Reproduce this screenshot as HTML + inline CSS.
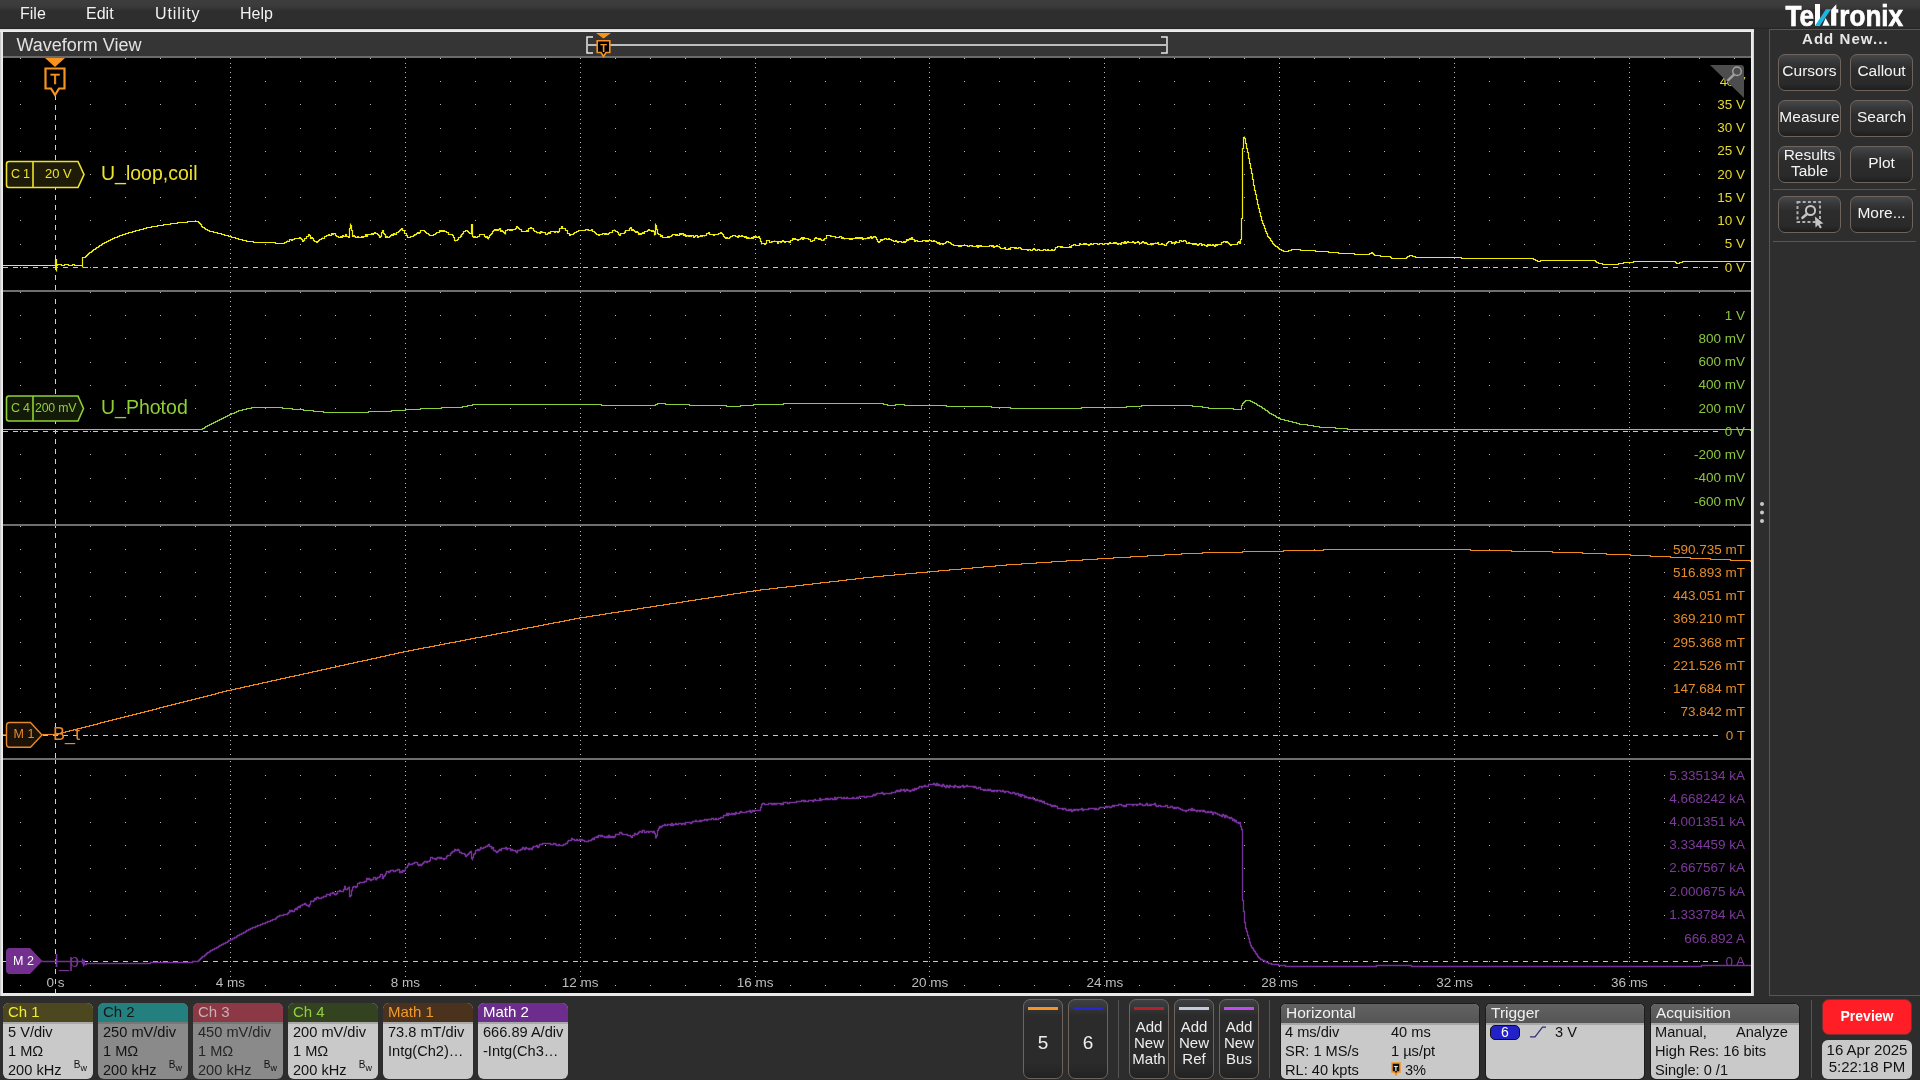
<!DOCTYPE html>
<html><head><meta charset="utf-8"><title>Waveform View</title>
<style>
*{margin:0;padding:0;box-sizing:border-box}
html,body{width:1920px;height:1080px;overflow:hidden;background:#2d2d2d;font-family:"Liberation Sans", sans-serif;-webkit-font-smoothing:antialiased;}
.abs{position:absolute}
#menu{position:absolute;left:0;top:0;width:1920px;height:29px;background:linear-gradient(#3d3d3d 0%,#3b3b3b 22%,#2e2e2e 38%,#2e2e2e 93%,#232323 100%);}
#menu span{position:absolute;top:5px;color:#f2f2f2;font-size:16px;}
#logo{position:absolute;left:1786px;top:0px;color:#fff;font-weight:bold;font-size:27px;letter-spacing:-1.2px;}
#frame{position:absolute;left:0;top:29px;width:1754px;height:967px;background:linear-gradient(90deg,#b4b4b4 0px,#dedede 1px,#f0f0f0 2px,#e8e8e8 3px,#e8e8e8 1751px,#f2f2f2 1752px,#c8c8c8 1754px);}
#frametop{position:absolute;left:0;top:29px;width:1754px;height:3px;background:linear-gradient(#d6d6d6,#f4f4f4);}
#hdr{position:absolute;left:3px;top:32px;width:1748px;height:24px;background:#353535;}
#hdrline{position:absolute;left:3px;top:56px;width:1748px;height:2px;background:#6b6b6b;}
#plot{position:absolute;left:3px;top:58px;width:1748px;height:935px;background:#000;}
#wvtitle{position:absolute;left:16.5px;top:34.5px;color:#e2e2e2;font-size:18px;}
svg{position:absolute;left:0;top:0;}
.al{position:absolute;right:173px;font-size:13.5px;line-height:16px;text-align:right;white-space:nowrap;background:#000;padding:0 2px 0 2px}
.tl{position:absolute;top:975px;width:80px;text-align:center;font-size:13.5px;line-height:16px;color:#bdbdbd}
#rpanel{position:absolute;left:1769px;top:29px;width:160px;height:967px;border:1px solid #5c5650;background:#2e2e2e}
.btn{position:absolute;width:63px;height:37px;border:1px solid #6e645c;border-radius:7px;background:linear-gradient(#46474a 0%,#38393b 18%,#2c2c2c 40%,#2a2a2a 82%,#1e1e1e 100%);color:#f4f4f4;font-size:15.5px;text-align:center;display:flex;align-items:center;justify-content:center;line-height:16px;padding-bottom:3px}
.sep{position:absolute;height:1px;background:#5c5650}
.chb{position:absolute;top:1003px;width:90px;height:76px;border-radius:6px;overflow:hidden;background:#c9c9c9}
.chb .h{height:19px;font-size:15px;padding-left:5px;line-height:17px}
.chb .hl{height:2px;background:#a9a9a9}
.chb .b{font-size:14.6px;line-height:19px;padding-left:5px;color:#111;white-space:nowrap;position:relative;top:-1px}
.bw{position:absolute;right:6px;bottom:6px;font-size:10px;color:#111;line-height:10px}
.sbtn{position:absolute;top:999px;width:40px;height:80px;border:1px solid #6e645c;border-radius:7px;background:linear-gradient(#3f4043 0%,#2b2b2b 20%,#2b2b2b 80%,#222 100%);color:#eee;text-align:center}
.sbtn .bar{position:absolute;left:4px;right:4px;top:7px;height:2.5px}
.vsep{position:absolute;top:1000px;width:1px;height:78px;background:#555}
.ib{position:absolute;top:1004px;height:75px;border-radius:5px;overflow:hidden;background:#c9c9c9;box-shadow:0 0 0 1px #1c1c1c}
.ib .h{height:19px;background:linear-gradient(#626262,#555);color:#f0f0f0;font-size:15.5px;line-height:18px;padding-left:5px}
.ib .hl{height:2px;background:#a8a8a8}
.ib .r{position:absolute;font-size:14.6px;color:#111;white-space:nowrap;line-height:18px}
</style></head><body><div style="position:absolute;left:0;top:0;width:1920px;height:1080px;will-change:transform;background:#2d2d2d">
<div id="menu">
<span style="left:20px">File</span><span style="left:86px">Edit</span><span style="left:155px;letter-spacing:0.9px">Utility</span><span style="left:240px">Help</span>
</div>
<svg style="left:0;top:0" width="1920" height="30" viewBox="0 0 1920 30"><text x="1785.5" y="25.7" font-family="Liberation Sans" font-weight="bold" font-size="30" fill="#fff" stroke="#fff" stroke-width="0.7" textLength="28.5" lengthAdjust="spacingAndGlyphs">Te</text><path d="M1815 4H1820V25.7H1815Z" fill="#fff"/><path d="M1822.4 25.7H1829.8L1825.6 18Z" fill="#fff"/><path d="M1815 25.7H1819.9L1831 9.2H1825.9Z" fill="#1ab8e0"/><path d="M1831.1 10L1836.3 4.3V9.2H1838.3V12.8H1836.3V25.7H1831.1Z" fill="#fff"/><text x="1839.3" y="25.7" font-family="Liberation Sans" font-weight="bold" font-size="30" fill="#fff" stroke="#fff" stroke-width="0.7" textLength="63.8" lengthAdjust="spacingAndGlyphs">ronix</text></svg>
<div id="frame"></div><div id="frametop"></div>
<div id="hdr"></div><div id="hdrline"></div>
<div id="plot"></div>
<div id="wvtitle">Waveform View</div>

<svg width="1920" height="1080" viewBox="0 0 1920 1080">
 <!-- header overview bar -->
 <path d="M593 37H587V53H593" fill="none" stroke="#e8e8e8" stroke-width="1.5"/>
 <path d="M1161 37H1167V53H1161" fill="none" stroke="#e8e8e8" stroke-width="1.5"/>
 <rect x="587" y="44" width="580" height="2" fill="#bdbdbd"/>
 <path d="M596 33H611L603.5 38.5Z" fill="#f7931e"/>
 <path d="M597.2 40.7H609.8V52.5H606L603.5 56.5L601 52.5H597.2Z" fill="#000" stroke="#f7931e" stroke-width="1.6"/>
 <text x="603.5" y="51.5" font-size="11" font-weight="bold" fill="#f7931e" text-anchor="middle" font-family="Liberation Sans">T</text>
 <!-- grid -->
 <path d="M20 58h1v1h-1zM90 58h1v1h-1zM125 58h1v1h-1zM160 58h1v1h-1zM195 58h1v1h-1zM265 58h1v1h-1zM300 58h1v1h-1zM335 58h1v1h-1zM370 58h1v1h-1zM440 58h1v1h-1zM475 58h1v1h-1zM510 58h1v1h-1zM545 58h1v1h-1zM615 58h1v1h-1zM650 58h1v1h-1zM685 58h1v1h-1zM720 58h1v1h-1zM790 58h1v1h-1zM825 58h1v1h-1zM860 58h1v1h-1zM894 58h1v1h-1zM964 58h1v1h-1zM999 58h1v1h-1zM1034 58h1v1h-1zM1069 58h1v1h-1zM1139 58h1v1h-1zM1174 58h1v1h-1zM1209 58h1v1h-1zM1244 58h1v1h-1zM1314 58h1v1h-1zM1349 58h1v1h-1zM1384 58h1v1h-1zM1419 58h1v1h-1zM1489 58h1v1h-1zM1524 58h1v1h-1zM1559 58h1v1h-1zM1594 58h1v1h-1zM1664 58h1v1h-1zM1699 58h1v1h-1zM1734 58h1v1h-1zM20 81h1v1h-1zM90 81h1v1h-1zM125 81h1v1h-1zM160 81h1v1h-1zM195 81h1v1h-1zM265 81h1v1h-1zM300 81h1v1h-1zM335 81h1v1h-1zM370 81h1v1h-1zM440 81h1v1h-1zM475 81h1v1h-1zM510 81h1v1h-1zM545 81h1v1h-1zM615 81h1v1h-1zM650 81h1v1h-1zM685 81h1v1h-1zM720 81h1v1h-1zM790 81h1v1h-1zM825 81h1v1h-1zM860 81h1v1h-1zM894 81h1v1h-1zM964 81h1v1h-1zM999 81h1v1h-1zM1034 81h1v1h-1zM1069 81h1v1h-1zM1139 81h1v1h-1zM1174 81h1v1h-1zM1209 81h1v1h-1zM1244 81h1v1h-1zM1314 81h1v1h-1zM1349 81h1v1h-1zM1384 81h1v1h-1zM1419 81h1v1h-1zM1489 81h1v1h-1zM1524 81h1v1h-1zM1559 81h1v1h-1zM1594 81h1v1h-1zM1664 81h1v1h-1zM1699 81h1v1h-1zM1734 81h1v1h-1zM20 104h1v1h-1zM90 104h1v1h-1zM125 104h1v1h-1zM160 104h1v1h-1zM195 104h1v1h-1zM265 104h1v1h-1zM300 104h1v1h-1zM335 104h1v1h-1zM370 104h1v1h-1zM440 104h1v1h-1zM475 104h1v1h-1zM510 104h1v1h-1zM545 104h1v1h-1zM615 104h1v1h-1zM650 104h1v1h-1zM685 104h1v1h-1zM720 104h1v1h-1zM790 104h1v1h-1zM825 104h1v1h-1zM860 104h1v1h-1zM894 104h1v1h-1zM964 104h1v1h-1zM999 104h1v1h-1zM1034 104h1v1h-1zM1069 104h1v1h-1zM1139 104h1v1h-1zM1174 104h1v1h-1zM1209 104h1v1h-1zM1244 104h1v1h-1zM1314 104h1v1h-1zM1349 104h1v1h-1zM1384 104h1v1h-1zM1419 104h1v1h-1zM1489 104h1v1h-1zM1524 104h1v1h-1zM1559 104h1v1h-1zM1594 104h1v1h-1zM1664 104h1v1h-1zM1699 104h1v1h-1zM1734 104h1v1h-1zM20 128h1v1h-1zM90 128h1v1h-1zM125 128h1v1h-1zM160 128h1v1h-1zM195 128h1v1h-1zM265 128h1v1h-1zM300 128h1v1h-1zM335 128h1v1h-1zM370 128h1v1h-1zM440 128h1v1h-1zM475 128h1v1h-1zM510 128h1v1h-1zM545 128h1v1h-1zM615 128h1v1h-1zM650 128h1v1h-1zM685 128h1v1h-1zM720 128h1v1h-1zM790 128h1v1h-1zM825 128h1v1h-1zM860 128h1v1h-1zM894 128h1v1h-1zM964 128h1v1h-1zM999 128h1v1h-1zM1034 128h1v1h-1zM1069 128h1v1h-1zM1139 128h1v1h-1zM1174 128h1v1h-1zM1209 128h1v1h-1zM1244 128h1v1h-1zM1314 128h1v1h-1zM1349 128h1v1h-1zM1384 128h1v1h-1zM1419 128h1v1h-1zM1489 128h1v1h-1zM1524 128h1v1h-1zM1559 128h1v1h-1zM1594 128h1v1h-1zM1664 128h1v1h-1zM1699 128h1v1h-1zM1734 128h1v1h-1zM20 151h1v1h-1zM90 151h1v1h-1zM125 151h1v1h-1zM160 151h1v1h-1zM195 151h1v1h-1zM265 151h1v1h-1zM300 151h1v1h-1zM335 151h1v1h-1zM370 151h1v1h-1zM440 151h1v1h-1zM475 151h1v1h-1zM510 151h1v1h-1zM545 151h1v1h-1zM615 151h1v1h-1zM650 151h1v1h-1zM685 151h1v1h-1zM720 151h1v1h-1zM790 151h1v1h-1zM825 151h1v1h-1zM860 151h1v1h-1zM894 151h1v1h-1zM964 151h1v1h-1zM999 151h1v1h-1zM1034 151h1v1h-1zM1069 151h1v1h-1zM1139 151h1v1h-1zM1174 151h1v1h-1zM1209 151h1v1h-1zM1244 151h1v1h-1zM1314 151h1v1h-1zM1349 151h1v1h-1zM1384 151h1v1h-1zM1419 151h1v1h-1zM1489 151h1v1h-1zM1524 151h1v1h-1zM1559 151h1v1h-1zM1594 151h1v1h-1zM1664 151h1v1h-1zM1699 151h1v1h-1zM1734 151h1v1h-1zM20 174h1v1h-1zM90 174h1v1h-1zM125 174h1v1h-1zM160 174h1v1h-1zM195 174h1v1h-1zM265 174h1v1h-1zM300 174h1v1h-1zM335 174h1v1h-1zM370 174h1v1h-1zM440 174h1v1h-1zM475 174h1v1h-1zM510 174h1v1h-1zM545 174h1v1h-1zM615 174h1v1h-1zM650 174h1v1h-1zM685 174h1v1h-1zM720 174h1v1h-1zM790 174h1v1h-1zM825 174h1v1h-1zM860 174h1v1h-1zM894 174h1v1h-1zM964 174h1v1h-1zM999 174h1v1h-1zM1034 174h1v1h-1zM1069 174h1v1h-1zM1139 174h1v1h-1zM1174 174h1v1h-1zM1209 174h1v1h-1zM1244 174h1v1h-1zM1314 174h1v1h-1zM1349 174h1v1h-1zM1384 174h1v1h-1zM1419 174h1v1h-1zM1489 174h1v1h-1zM1524 174h1v1h-1zM1559 174h1v1h-1zM1594 174h1v1h-1zM1664 174h1v1h-1zM1699 174h1v1h-1zM1734 174h1v1h-1zM20 197h1v1h-1zM90 197h1v1h-1zM125 197h1v1h-1zM160 197h1v1h-1zM195 197h1v1h-1zM265 197h1v1h-1zM300 197h1v1h-1zM335 197h1v1h-1zM370 197h1v1h-1zM440 197h1v1h-1zM475 197h1v1h-1zM510 197h1v1h-1zM545 197h1v1h-1zM615 197h1v1h-1zM650 197h1v1h-1zM685 197h1v1h-1zM720 197h1v1h-1zM790 197h1v1h-1zM825 197h1v1h-1zM860 197h1v1h-1zM894 197h1v1h-1zM964 197h1v1h-1zM999 197h1v1h-1zM1034 197h1v1h-1zM1069 197h1v1h-1zM1139 197h1v1h-1zM1174 197h1v1h-1zM1209 197h1v1h-1zM1244 197h1v1h-1zM1314 197h1v1h-1zM1349 197h1v1h-1zM1384 197h1v1h-1zM1419 197h1v1h-1zM1489 197h1v1h-1zM1524 197h1v1h-1zM1559 197h1v1h-1zM1594 197h1v1h-1zM1664 197h1v1h-1zM1699 197h1v1h-1zM1734 197h1v1h-1zM20 220h1v1h-1zM90 220h1v1h-1zM125 220h1v1h-1zM160 220h1v1h-1zM195 220h1v1h-1zM265 220h1v1h-1zM300 220h1v1h-1zM335 220h1v1h-1zM370 220h1v1h-1zM440 220h1v1h-1zM475 220h1v1h-1zM510 220h1v1h-1zM545 220h1v1h-1zM615 220h1v1h-1zM650 220h1v1h-1zM685 220h1v1h-1zM720 220h1v1h-1zM790 220h1v1h-1zM825 220h1v1h-1zM860 220h1v1h-1zM894 220h1v1h-1zM964 220h1v1h-1zM999 220h1v1h-1zM1034 220h1v1h-1zM1069 220h1v1h-1zM1139 220h1v1h-1zM1174 220h1v1h-1zM1209 220h1v1h-1zM1244 220h1v1h-1zM1314 220h1v1h-1zM1349 220h1v1h-1zM1384 220h1v1h-1zM1419 220h1v1h-1zM1489 220h1v1h-1zM1524 220h1v1h-1zM1559 220h1v1h-1zM1594 220h1v1h-1zM1664 220h1v1h-1zM1699 220h1v1h-1zM1734 220h1v1h-1zM20 244h1v1h-1zM90 244h1v1h-1zM125 244h1v1h-1zM160 244h1v1h-1zM195 244h1v1h-1zM265 244h1v1h-1zM300 244h1v1h-1zM335 244h1v1h-1zM370 244h1v1h-1zM440 244h1v1h-1zM475 244h1v1h-1zM510 244h1v1h-1zM545 244h1v1h-1zM615 244h1v1h-1zM650 244h1v1h-1zM685 244h1v1h-1zM720 244h1v1h-1zM790 244h1v1h-1zM825 244h1v1h-1zM860 244h1v1h-1zM894 244h1v1h-1zM964 244h1v1h-1zM999 244h1v1h-1zM1034 244h1v1h-1zM1069 244h1v1h-1zM1139 244h1v1h-1zM1174 244h1v1h-1zM1209 244h1v1h-1zM1244 244h1v1h-1zM1314 244h1v1h-1zM1349 244h1v1h-1zM1384 244h1v1h-1zM1419 244h1v1h-1zM1489 244h1v1h-1zM1524 244h1v1h-1zM1559 244h1v1h-1zM1594 244h1v1h-1zM1664 244h1v1h-1zM1699 244h1v1h-1zM1734 244h1v1h-1zM20 267h1v1h-1zM90 267h1v1h-1zM125 267h1v1h-1zM160 267h1v1h-1zM195 267h1v1h-1zM265 267h1v1h-1zM300 267h1v1h-1zM335 267h1v1h-1zM370 267h1v1h-1zM440 267h1v1h-1zM475 267h1v1h-1zM510 267h1v1h-1zM545 267h1v1h-1zM615 267h1v1h-1zM650 267h1v1h-1zM685 267h1v1h-1zM720 267h1v1h-1zM790 267h1v1h-1zM825 267h1v1h-1zM860 267h1v1h-1zM894 267h1v1h-1zM964 267h1v1h-1zM999 267h1v1h-1zM1034 267h1v1h-1zM1069 267h1v1h-1zM1139 267h1v1h-1zM1174 267h1v1h-1zM1209 267h1v1h-1zM1244 267h1v1h-1zM1314 267h1v1h-1zM1349 267h1v1h-1zM1384 267h1v1h-1zM1419 267h1v1h-1zM1489 267h1v1h-1zM1524 267h1v1h-1zM1559 267h1v1h-1zM1594 267h1v1h-1zM1664 267h1v1h-1zM1699 267h1v1h-1zM1734 267h1v1h-1zM20 292h1v1h-1zM90 292h1v1h-1zM125 292h1v1h-1zM160 292h1v1h-1zM195 292h1v1h-1zM265 292h1v1h-1zM300 292h1v1h-1zM335 292h1v1h-1zM370 292h1v1h-1zM440 292h1v1h-1zM475 292h1v1h-1zM510 292h1v1h-1zM545 292h1v1h-1zM615 292h1v1h-1zM650 292h1v1h-1zM685 292h1v1h-1zM720 292h1v1h-1zM790 292h1v1h-1zM825 292h1v1h-1zM860 292h1v1h-1zM894 292h1v1h-1zM964 292h1v1h-1zM999 292h1v1h-1zM1034 292h1v1h-1zM1069 292h1v1h-1zM1139 292h1v1h-1zM1174 292h1v1h-1zM1209 292h1v1h-1zM1244 292h1v1h-1zM1314 292h1v1h-1zM1349 292h1v1h-1zM1384 292h1v1h-1zM1419 292h1v1h-1zM1489 292h1v1h-1zM1524 292h1v1h-1zM1559 292h1v1h-1zM1594 292h1v1h-1zM1664 292h1v1h-1zM1699 292h1v1h-1zM1734 292h1v1h-1zM20 315h1v1h-1zM90 315h1v1h-1zM125 315h1v1h-1zM160 315h1v1h-1zM195 315h1v1h-1zM265 315h1v1h-1zM300 315h1v1h-1zM335 315h1v1h-1zM370 315h1v1h-1zM440 315h1v1h-1zM475 315h1v1h-1zM510 315h1v1h-1zM545 315h1v1h-1zM615 315h1v1h-1zM650 315h1v1h-1zM685 315h1v1h-1zM720 315h1v1h-1zM790 315h1v1h-1zM825 315h1v1h-1zM860 315h1v1h-1zM894 315h1v1h-1zM964 315h1v1h-1zM999 315h1v1h-1zM1034 315h1v1h-1zM1069 315h1v1h-1zM1139 315h1v1h-1zM1174 315h1v1h-1zM1209 315h1v1h-1zM1244 315h1v1h-1zM1314 315h1v1h-1zM1349 315h1v1h-1zM1384 315h1v1h-1zM1419 315h1v1h-1zM1489 315h1v1h-1zM1524 315h1v1h-1zM1559 315h1v1h-1zM1594 315h1v1h-1zM1664 315h1v1h-1zM1699 315h1v1h-1zM1734 315h1v1h-1zM20 338h1v1h-1zM90 338h1v1h-1zM125 338h1v1h-1zM160 338h1v1h-1zM195 338h1v1h-1zM265 338h1v1h-1zM300 338h1v1h-1zM335 338h1v1h-1zM370 338h1v1h-1zM440 338h1v1h-1zM475 338h1v1h-1zM510 338h1v1h-1zM545 338h1v1h-1zM615 338h1v1h-1zM650 338h1v1h-1zM685 338h1v1h-1zM720 338h1v1h-1zM790 338h1v1h-1zM825 338h1v1h-1zM860 338h1v1h-1zM894 338h1v1h-1zM964 338h1v1h-1zM999 338h1v1h-1zM1034 338h1v1h-1zM1069 338h1v1h-1zM1139 338h1v1h-1zM1174 338h1v1h-1zM1209 338h1v1h-1zM1244 338h1v1h-1zM1314 338h1v1h-1zM1349 338h1v1h-1zM1384 338h1v1h-1zM1419 338h1v1h-1zM1489 338h1v1h-1zM1524 338h1v1h-1zM1559 338h1v1h-1zM1594 338h1v1h-1zM1664 338h1v1h-1zM1699 338h1v1h-1zM1734 338h1v1h-1zM20 362h1v1h-1zM90 362h1v1h-1zM125 362h1v1h-1zM160 362h1v1h-1zM195 362h1v1h-1zM265 362h1v1h-1zM300 362h1v1h-1zM335 362h1v1h-1zM370 362h1v1h-1zM440 362h1v1h-1zM475 362h1v1h-1zM510 362h1v1h-1zM545 362h1v1h-1zM615 362h1v1h-1zM650 362h1v1h-1zM685 362h1v1h-1zM720 362h1v1h-1zM790 362h1v1h-1zM825 362h1v1h-1zM860 362h1v1h-1zM894 362h1v1h-1zM964 362h1v1h-1zM999 362h1v1h-1zM1034 362h1v1h-1zM1069 362h1v1h-1zM1139 362h1v1h-1zM1174 362h1v1h-1zM1209 362h1v1h-1zM1244 362h1v1h-1zM1314 362h1v1h-1zM1349 362h1v1h-1zM1384 362h1v1h-1zM1419 362h1v1h-1zM1489 362h1v1h-1zM1524 362h1v1h-1zM1559 362h1v1h-1zM1594 362h1v1h-1zM1664 362h1v1h-1zM1699 362h1v1h-1zM1734 362h1v1h-1zM20 385h1v1h-1zM90 385h1v1h-1zM125 385h1v1h-1zM160 385h1v1h-1zM195 385h1v1h-1zM265 385h1v1h-1zM300 385h1v1h-1zM335 385h1v1h-1zM370 385h1v1h-1zM440 385h1v1h-1zM475 385h1v1h-1zM510 385h1v1h-1zM545 385h1v1h-1zM615 385h1v1h-1zM650 385h1v1h-1zM685 385h1v1h-1zM720 385h1v1h-1zM790 385h1v1h-1zM825 385h1v1h-1zM860 385h1v1h-1zM894 385h1v1h-1zM964 385h1v1h-1zM999 385h1v1h-1zM1034 385h1v1h-1zM1069 385h1v1h-1zM1139 385h1v1h-1zM1174 385h1v1h-1zM1209 385h1v1h-1zM1244 385h1v1h-1zM1314 385h1v1h-1zM1349 385h1v1h-1zM1384 385h1v1h-1zM1419 385h1v1h-1zM1489 385h1v1h-1zM1524 385h1v1h-1zM1559 385h1v1h-1zM1594 385h1v1h-1zM1664 385h1v1h-1zM1699 385h1v1h-1zM1734 385h1v1h-1zM20 408h1v1h-1zM90 408h1v1h-1zM125 408h1v1h-1zM160 408h1v1h-1zM195 408h1v1h-1zM265 408h1v1h-1zM300 408h1v1h-1zM335 408h1v1h-1zM370 408h1v1h-1zM440 408h1v1h-1zM475 408h1v1h-1zM510 408h1v1h-1zM545 408h1v1h-1zM615 408h1v1h-1zM650 408h1v1h-1zM685 408h1v1h-1zM720 408h1v1h-1zM790 408h1v1h-1zM825 408h1v1h-1zM860 408h1v1h-1zM894 408h1v1h-1zM964 408h1v1h-1zM999 408h1v1h-1zM1034 408h1v1h-1zM1069 408h1v1h-1zM1139 408h1v1h-1zM1174 408h1v1h-1zM1209 408h1v1h-1zM1244 408h1v1h-1zM1314 408h1v1h-1zM1349 408h1v1h-1zM1384 408h1v1h-1zM1419 408h1v1h-1zM1489 408h1v1h-1zM1524 408h1v1h-1zM1559 408h1v1h-1zM1594 408h1v1h-1zM1664 408h1v1h-1zM1699 408h1v1h-1zM1734 408h1v1h-1zM20 431h1v1h-1zM90 431h1v1h-1zM125 431h1v1h-1zM160 431h1v1h-1zM195 431h1v1h-1zM265 431h1v1h-1zM300 431h1v1h-1zM335 431h1v1h-1zM370 431h1v1h-1zM440 431h1v1h-1zM475 431h1v1h-1zM510 431h1v1h-1zM545 431h1v1h-1zM615 431h1v1h-1zM650 431h1v1h-1zM685 431h1v1h-1zM720 431h1v1h-1zM790 431h1v1h-1zM825 431h1v1h-1zM860 431h1v1h-1zM894 431h1v1h-1zM964 431h1v1h-1zM999 431h1v1h-1zM1034 431h1v1h-1zM1069 431h1v1h-1zM1139 431h1v1h-1zM1174 431h1v1h-1zM1209 431h1v1h-1zM1244 431h1v1h-1zM1314 431h1v1h-1zM1349 431h1v1h-1zM1384 431h1v1h-1zM1419 431h1v1h-1zM1489 431h1v1h-1zM1524 431h1v1h-1zM1559 431h1v1h-1zM1594 431h1v1h-1zM1664 431h1v1h-1zM1699 431h1v1h-1zM1734 431h1v1h-1zM20 454h1v1h-1zM90 454h1v1h-1zM125 454h1v1h-1zM160 454h1v1h-1zM195 454h1v1h-1zM265 454h1v1h-1zM300 454h1v1h-1zM335 454h1v1h-1zM370 454h1v1h-1zM440 454h1v1h-1zM475 454h1v1h-1zM510 454h1v1h-1zM545 454h1v1h-1zM615 454h1v1h-1zM650 454h1v1h-1zM685 454h1v1h-1zM720 454h1v1h-1zM790 454h1v1h-1zM825 454h1v1h-1zM860 454h1v1h-1zM894 454h1v1h-1zM964 454h1v1h-1zM999 454h1v1h-1zM1034 454h1v1h-1zM1069 454h1v1h-1zM1139 454h1v1h-1zM1174 454h1v1h-1zM1209 454h1v1h-1zM1244 454h1v1h-1zM1314 454h1v1h-1zM1349 454h1v1h-1zM1384 454h1v1h-1zM1419 454h1v1h-1zM1489 454h1v1h-1zM1524 454h1v1h-1zM1559 454h1v1h-1zM1594 454h1v1h-1zM1664 454h1v1h-1zM1699 454h1v1h-1zM1734 454h1v1h-1zM20 478h1v1h-1zM90 478h1v1h-1zM125 478h1v1h-1zM160 478h1v1h-1zM195 478h1v1h-1zM265 478h1v1h-1zM300 478h1v1h-1zM335 478h1v1h-1zM370 478h1v1h-1zM440 478h1v1h-1zM475 478h1v1h-1zM510 478h1v1h-1zM545 478h1v1h-1zM615 478h1v1h-1zM650 478h1v1h-1zM685 478h1v1h-1zM720 478h1v1h-1zM790 478h1v1h-1zM825 478h1v1h-1zM860 478h1v1h-1zM894 478h1v1h-1zM964 478h1v1h-1zM999 478h1v1h-1zM1034 478h1v1h-1zM1069 478h1v1h-1zM1139 478h1v1h-1zM1174 478h1v1h-1zM1209 478h1v1h-1zM1244 478h1v1h-1zM1314 478h1v1h-1zM1349 478h1v1h-1zM1384 478h1v1h-1zM1419 478h1v1h-1zM1489 478h1v1h-1zM1524 478h1v1h-1zM1559 478h1v1h-1zM1594 478h1v1h-1zM1664 478h1v1h-1zM1699 478h1v1h-1zM1734 478h1v1h-1zM20 501h1v1h-1zM90 501h1v1h-1zM125 501h1v1h-1zM160 501h1v1h-1zM195 501h1v1h-1zM265 501h1v1h-1zM300 501h1v1h-1zM335 501h1v1h-1zM370 501h1v1h-1zM440 501h1v1h-1zM475 501h1v1h-1zM510 501h1v1h-1zM545 501h1v1h-1zM615 501h1v1h-1zM650 501h1v1h-1zM685 501h1v1h-1zM720 501h1v1h-1zM790 501h1v1h-1zM825 501h1v1h-1zM860 501h1v1h-1zM894 501h1v1h-1zM964 501h1v1h-1zM999 501h1v1h-1zM1034 501h1v1h-1zM1069 501h1v1h-1zM1139 501h1v1h-1zM1174 501h1v1h-1zM1209 501h1v1h-1zM1244 501h1v1h-1zM1314 501h1v1h-1zM1349 501h1v1h-1zM1384 501h1v1h-1zM1419 501h1v1h-1zM1489 501h1v1h-1zM1524 501h1v1h-1zM1559 501h1v1h-1zM1594 501h1v1h-1zM1664 501h1v1h-1zM1699 501h1v1h-1zM1734 501h1v1h-1zM20 526h1v1h-1zM90 526h1v1h-1zM125 526h1v1h-1zM160 526h1v1h-1zM195 526h1v1h-1zM265 526h1v1h-1zM300 526h1v1h-1zM335 526h1v1h-1zM370 526h1v1h-1zM440 526h1v1h-1zM475 526h1v1h-1zM510 526h1v1h-1zM545 526h1v1h-1zM615 526h1v1h-1zM650 526h1v1h-1zM685 526h1v1h-1zM720 526h1v1h-1zM790 526h1v1h-1zM825 526h1v1h-1zM860 526h1v1h-1zM894 526h1v1h-1zM964 526h1v1h-1zM999 526h1v1h-1zM1034 526h1v1h-1zM1069 526h1v1h-1zM1139 526h1v1h-1zM1174 526h1v1h-1zM1209 526h1v1h-1zM1244 526h1v1h-1zM1314 526h1v1h-1zM1349 526h1v1h-1zM1384 526h1v1h-1zM1419 526h1v1h-1zM1489 526h1v1h-1zM1524 526h1v1h-1zM1559 526h1v1h-1zM1594 526h1v1h-1zM1664 526h1v1h-1zM1699 526h1v1h-1zM1734 526h1v1h-1zM20 549h1v1h-1zM90 549h1v1h-1zM125 549h1v1h-1zM160 549h1v1h-1zM195 549h1v1h-1zM265 549h1v1h-1zM300 549h1v1h-1zM335 549h1v1h-1zM370 549h1v1h-1zM440 549h1v1h-1zM475 549h1v1h-1zM510 549h1v1h-1zM545 549h1v1h-1zM615 549h1v1h-1zM650 549h1v1h-1zM685 549h1v1h-1zM720 549h1v1h-1zM790 549h1v1h-1zM825 549h1v1h-1zM860 549h1v1h-1zM894 549h1v1h-1zM964 549h1v1h-1zM999 549h1v1h-1zM1034 549h1v1h-1zM1069 549h1v1h-1zM1139 549h1v1h-1zM1174 549h1v1h-1zM1209 549h1v1h-1zM1244 549h1v1h-1zM1314 549h1v1h-1zM1349 549h1v1h-1zM1384 549h1v1h-1zM1419 549h1v1h-1zM1489 549h1v1h-1zM1524 549h1v1h-1zM1559 549h1v1h-1zM1594 549h1v1h-1zM1664 549h1v1h-1zM1699 549h1v1h-1zM1734 549h1v1h-1zM20 572h1v1h-1zM90 572h1v1h-1zM125 572h1v1h-1zM160 572h1v1h-1zM195 572h1v1h-1zM265 572h1v1h-1zM300 572h1v1h-1zM335 572h1v1h-1zM370 572h1v1h-1zM440 572h1v1h-1zM475 572h1v1h-1zM510 572h1v1h-1zM545 572h1v1h-1zM615 572h1v1h-1zM650 572h1v1h-1zM685 572h1v1h-1zM720 572h1v1h-1zM790 572h1v1h-1zM825 572h1v1h-1zM860 572h1v1h-1zM894 572h1v1h-1zM964 572h1v1h-1zM999 572h1v1h-1zM1034 572h1v1h-1zM1069 572h1v1h-1zM1139 572h1v1h-1zM1174 572h1v1h-1zM1209 572h1v1h-1zM1244 572h1v1h-1zM1314 572h1v1h-1zM1349 572h1v1h-1zM1384 572h1v1h-1zM1419 572h1v1h-1zM1489 572h1v1h-1zM1524 572h1v1h-1zM1559 572h1v1h-1zM1594 572h1v1h-1zM1664 572h1v1h-1zM1699 572h1v1h-1zM1734 572h1v1h-1zM20 596h1v1h-1zM90 596h1v1h-1zM125 596h1v1h-1zM160 596h1v1h-1zM195 596h1v1h-1zM265 596h1v1h-1zM300 596h1v1h-1zM335 596h1v1h-1zM370 596h1v1h-1zM440 596h1v1h-1zM475 596h1v1h-1zM510 596h1v1h-1zM545 596h1v1h-1zM615 596h1v1h-1zM650 596h1v1h-1zM685 596h1v1h-1zM720 596h1v1h-1zM790 596h1v1h-1zM825 596h1v1h-1zM860 596h1v1h-1zM894 596h1v1h-1zM964 596h1v1h-1zM999 596h1v1h-1zM1034 596h1v1h-1zM1069 596h1v1h-1zM1139 596h1v1h-1zM1174 596h1v1h-1zM1209 596h1v1h-1zM1244 596h1v1h-1zM1314 596h1v1h-1zM1349 596h1v1h-1zM1384 596h1v1h-1zM1419 596h1v1h-1zM1489 596h1v1h-1zM1524 596h1v1h-1zM1559 596h1v1h-1zM1594 596h1v1h-1zM1664 596h1v1h-1zM1699 596h1v1h-1zM1734 596h1v1h-1zM20 619h1v1h-1zM90 619h1v1h-1zM125 619h1v1h-1zM160 619h1v1h-1zM195 619h1v1h-1zM265 619h1v1h-1zM300 619h1v1h-1zM335 619h1v1h-1zM370 619h1v1h-1zM440 619h1v1h-1zM475 619h1v1h-1zM510 619h1v1h-1zM545 619h1v1h-1zM615 619h1v1h-1zM650 619h1v1h-1zM685 619h1v1h-1zM720 619h1v1h-1zM790 619h1v1h-1zM825 619h1v1h-1zM860 619h1v1h-1zM894 619h1v1h-1zM964 619h1v1h-1zM999 619h1v1h-1zM1034 619h1v1h-1zM1069 619h1v1h-1zM1139 619h1v1h-1zM1174 619h1v1h-1zM1209 619h1v1h-1zM1244 619h1v1h-1zM1314 619h1v1h-1zM1349 619h1v1h-1zM1384 619h1v1h-1zM1419 619h1v1h-1zM1489 619h1v1h-1zM1524 619h1v1h-1zM1559 619h1v1h-1zM1594 619h1v1h-1zM1664 619h1v1h-1zM1699 619h1v1h-1zM1734 619h1v1h-1zM20 642h1v1h-1zM90 642h1v1h-1zM125 642h1v1h-1zM160 642h1v1h-1zM195 642h1v1h-1zM265 642h1v1h-1zM300 642h1v1h-1zM335 642h1v1h-1zM370 642h1v1h-1zM440 642h1v1h-1zM475 642h1v1h-1zM510 642h1v1h-1zM545 642h1v1h-1zM615 642h1v1h-1zM650 642h1v1h-1zM685 642h1v1h-1zM720 642h1v1h-1zM790 642h1v1h-1zM825 642h1v1h-1zM860 642h1v1h-1zM894 642h1v1h-1zM964 642h1v1h-1zM999 642h1v1h-1zM1034 642h1v1h-1zM1069 642h1v1h-1zM1139 642h1v1h-1zM1174 642h1v1h-1zM1209 642h1v1h-1zM1244 642h1v1h-1zM1314 642h1v1h-1zM1349 642h1v1h-1zM1384 642h1v1h-1zM1419 642h1v1h-1zM1489 642h1v1h-1zM1524 642h1v1h-1zM1559 642h1v1h-1zM1594 642h1v1h-1zM1664 642h1v1h-1zM1699 642h1v1h-1zM1734 642h1v1h-1zM20 665h1v1h-1zM90 665h1v1h-1zM125 665h1v1h-1zM160 665h1v1h-1zM195 665h1v1h-1zM265 665h1v1h-1zM300 665h1v1h-1zM335 665h1v1h-1zM370 665h1v1h-1zM440 665h1v1h-1zM475 665h1v1h-1zM510 665h1v1h-1zM545 665h1v1h-1zM615 665h1v1h-1zM650 665h1v1h-1zM685 665h1v1h-1zM720 665h1v1h-1zM790 665h1v1h-1zM825 665h1v1h-1zM860 665h1v1h-1zM894 665h1v1h-1zM964 665h1v1h-1zM999 665h1v1h-1zM1034 665h1v1h-1zM1069 665h1v1h-1zM1139 665h1v1h-1zM1174 665h1v1h-1zM1209 665h1v1h-1zM1244 665h1v1h-1zM1314 665h1v1h-1zM1349 665h1v1h-1zM1384 665h1v1h-1zM1419 665h1v1h-1zM1489 665h1v1h-1zM1524 665h1v1h-1zM1559 665h1v1h-1zM1594 665h1v1h-1zM1664 665h1v1h-1zM1699 665h1v1h-1zM1734 665h1v1h-1zM20 688h1v1h-1zM90 688h1v1h-1zM125 688h1v1h-1zM160 688h1v1h-1zM195 688h1v1h-1zM265 688h1v1h-1zM300 688h1v1h-1zM335 688h1v1h-1zM370 688h1v1h-1zM440 688h1v1h-1zM475 688h1v1h-1zM510 688h1v1h-1zM545 688h1v1h-1zM615 688h1v1h-1zM650 688h1v1h-1zM685 688h1v1h-1zM720 688h1v1h-1zM790 688h1v1h-1zM825 688h1v1h-1zM860 688h1v1h-1zM894 688h1v1h-1zM964 688h1v1h-1zM999 688h1v1h-1zM1034 688h1v1h-1zM1069 688h1v1h-1zM1139 688h1v1h-1zM1174 688h1v1h-1zM1209 688h1v1h-1zM1244 688h1v1h-1zM1314 688h1v1h-1zM1349 688h1v1h-1zM1384 688h1v1h-1zM1419 688h1v1h-1zM1489 688h1v1h-1zM1524 688h1v1h-1zM1559 688h1v1h-1zM1594 688h1v1h-1zM1664 688h1v1h-1zM1699 688h1v1h-1zM1734 688h1v1h-1zM20 712h1v1h-1zM90 712h1v1h-1zM125 712h1v1h-1zM160 712h1v1h-1zM195 712h1v1h-1zM265 712h1v1h-1zM300 712h1v1h-1zM335 712h1v1h-1zM370 712h1v1h-1zM440 712h1v1h-1zM475 712h1v1h-1zM510 712h1v1h-1zM545 712h1v1h-1zM615 712h1v1h-1zM650 712h1v1h-1zM685 712h1v1h-1zM720 712h1v1h-1zM790 712h1v1h-1zM825 712h1v1h-1zM860 712h1v1h-1zM894 712h1v1h-1zM964 712h1v1h-1zM999 712h1v1h-1zM1034 712h1v1h-1zM1069 712h1v1h-1zM1139 712h1v1h-1zM1174 712h1v1h-1zM1209 712h1v1h-1zM1244 712h1v1h-1zM1314 712h1v1h-1zM1349 712h1v1h-1zM1384 712h1v1h-1zM1419 712h1v1h-1zM1489 712h1v1h-1zM1524 712h1v1h-1zM1559 712h1v1h-1zM1594 712h1v1h-1zM1664 712h1v1h-1zM1699 712h1v1h-1zM1734 712h1v1h-1zM20 735h1v1h-1zM90 735h1v1h-1zM125 735h1v1h-1zM160 735h1v1h-1zM195 735h1v1h-1zM265 735h1v1h-1zM300 735h1v1h-1zM335 735h1v1h-1zM370 735h1v1h-1zM440 735h1v1h-1zM475 735h1v1h-1zM510 735h1v1h-1zM545 735h1v1h-1zM615 735h1v1h-1zM650 735h1v1h-1zM685 735h1v1h-1zM720 735h1v1h-1zM790 735h1v1h-1zM825 735h1v1h-1zM860 735h1v1h-1zM894 735h1v1h-1zM964 735h1v1h-1zM999 735h1v1h-1zM1034 735h1v1h-1zM1069 735h1v1h-1zM1139 735h1v1h-1zM1174 735h1v1h-1zM1209 735h1v1h-1zM1244 735h1v1h-1zM1314 735h1v1h-1zM1349 735h1v1h-1zM1384 735h1v1h-1zM1419 735h1v1h-1zM1489 735h1v1h-1zM1524 735h1v1h-1zM1559 735h1v1h-1zM1594 735h1v1h-1zM1664 735h1v1h-1zM1699 735h1v1h-1zM1734 735h1v1h-1zM20 775h1v1h-1zM90 775h1v1h-1zM125 775h1v1h-1zM160 775h1v1h-1zM195 775h1v1h-1zM265 775h1v1h-1zM300 775h1v1h-1zM335 775h1v1h-1zM370 775h1v1h-1zM440 775h1v1h-1zM475 775h1v1h-1zM510 775h1v1h-1zM545 775h1v1h-1zM615 775h1v1h-1zM650 775h1v1h-1zM685 775h1v1h-1zM720 775h1v1h-1zM790 775h1v1h-1zM825 775h1v1h-1zM860 775h1v1h-1zM894 775h1v1h-1zM964 775h1v1h-1zM999 775h1v1h-1zM1034 775h1v1h-1zM1069 775h1v1h-1zM1139 775h1v1h-1zM1174 775h1v1h-1zM1209 775h1v1h-1zM1244 775h1v1h-1zM1314 775h1v1h-1zM1349 775h1v1h-1zM1384 775h1v1h-1zM1419 775h1v1h-1zM1489 775h1v1h-1zM1524 775h1v1h-1zM1559 775h1v1h-1zM1594 775h1v1h-1zM1664 775h1v1h-1zM1699 775h1v1h-1zM1734 775h1v1h-1zM20 798h1v1h-1zM90 798h1v1h-1zM125 798h1v1h-1zM160 798h1v1h-1zM195 798h1v1h-1zM265 798h1v1h-1zM300 798h1v1h-1zM335 798h1v1h-1zM370 798h1v1h-1zM440 798h1v1h-1zM475 798h1v1h-1zM510 798h1v1h-1zM545 798h1v1h-1zM615 798h1v1h-1zM650 798h1v1h-1zM685 798h1v1h-1zM720 798h1v1h-1zM790 798h1v1h-1zM825 798h1v1h-1zM860 798h1v1h-1zM894 798h1v1h-1zM964 798h1v1h-1zM999 798h1v1h-1zM1034 798h1v1h-1zM1069 798h1v1h-1zM1139 798h1v1h-1zM1174 798h1v1h-1zM1209 798h1v1h-1zM1244 798h1v1h-1zM1314 798h1v1h-1zM1349 798h1v1h-1zM1384 798h1v1h-1zM1419 798h1v1h-1zM1489 798h1v1h-1zM1524 798h1v1h-1zM1559 798h1v1h-1zM1594 798h1v1h-1zM1664 798h1v1h-1zM1699 798h1v1h-1zM1734 798h1v1h-1zM20 822h1v1h-1zM90 822h1v1h-1zM125 822h1v1h-1zM160 822h1v1h-1zM195 822h1v1h-1zM265 822h1v1h-1zM300 822h1v1h-1zM335 822h1v1h-1zM370 822h1v1h-1zM440 822h1v1h-1zM475 822h1v1h-1zM510 822h1v1h-1zM545 822h1v1h-1zM615 822h1v1h-1zM650 822h1v1h-1zM685 822h1v1h-1zM720 822h1v1h-1zM790 822h1v1h-1zM825 822h1v1h-1zM860 822h1v1h-1zM894 822h1v1h-1zM964 822h1v1h-1zM999 822h1v1h-1zM1034 822h1v1h-1zM1069 822h1v1h-1zM1139 822h1v1h-1zM1174 822h1v1h-1zM1209 822h1v1h-1zM1244 822h1v1h-1zM1314 822h1v1h-1zM1349 822h1v1h-1zM1384 822h1v1h-1zM1419 822h1v1h-1zM1489 822h1v1h-1zM1524 822h1v1h-1zM1559 822h1v1h-1zM1594 822h1v1h-1zM1664 822h1v1h-1zM1699 822h1v1h-1zM1734 822h1v1h-1zM20 845h1v1h-1zM90 845h1v1h-1zM125 845h1v1h-1zM160 845h1v1h-1zM195 845h1v1h-1zM265 845h1v1h-1zM300 845h1v1h-1zM335 845h1v1h-1zM370 845h1v1h-1zM440 845h1v1h-1zM475 845h1v1h-1zM510 845h1v1h-1zM545 845h1v1h-1zM615 845h1v1h-1zM650 845h1v1h-1zM685 845h1v1h-1zM720 845h1v1h-1zM790 845h1v1h-1zM825 845h1v1h-1zM860 845h1v1h-1zM894 845h1v1h-1zM964 845h1v1h-1zM999 845h1v1h-1zM1034 845h1v1h-1zM1069 845h1v1h-1zM1139 845h1v1h-1zM1174 845h1v1h-1zM1209 845h1v1h-1zM1244 845h1v1h-1zM1314 845h1v1h-1zM1349 845h1v1h-1zM1384 845h1v1h-1zM1419 845h1v1h-1zM1489 845h1v1h-1zM1524 845h1v1h-1zM1559 845h1v1h-1zM1594 845h1v1h-1zM1664 845h1v1h-1zM1699 845h1v1h-1zM1734 845h1v1h-1zM20 868h1v1h-1zM90 868h1v1h-1zM125 868h1v1h-1zM160 868h1v1h-1zM195 868h1v1h-1zM265 868h1v1h-1zM300 868h1v1h-1zM335 868h1v1h-1zM370 868h1v1h-1zM440 868h1v1h-1zM475 868h1v1h-1zM510 868h1v1h-1zM545 868h1v1h-1zM615 868h1v1h-1zM650 868h1v1h-1zM685 868h1v1h-1zM720 868h1v1h-1zM790 868h1v1h-1zM825 868h1v1h-1zM860 868h1v1h-1zM894 868h1v1h-1zM964 868h1v1h-1zM999 868h1v1h-1zM1034 868h1v1h-1zM1069 868h1v1h-1zM1139 868h1v1h-1zM1174 868h1v1h-1zM1209 868h1v1h-1zM1244 868h1v1h-1zM1314 868h1v1h-1zM1349 868h1v1h-1zM1384 868h1v1h-1zM1419 868h1v1h-1zM1489 868h1v1h-1zM1524 868h1v1h-1zM1559 868h1v1h-1zM1594 868h1v1h-1zM1664 868h1v1h-1zM1699 868h1v1h-1zM1734 868h1v1h-1zM20 891h1v1h-1zM90 891h1v1h-1zM125 891h1v1h-1zM160 891h1v1h-1zM195 891h1v1h-1zM265 891h1v1h-1zM300 891h1v1h-1zM335 891h1v1h-1zM370 891h1v1h-1zM440 891h1v1h-1zM475 891h1v1h-1zM510 891h1v1h-1zM545 891h1v1h-1zM615 891h1v1h-1zM650 891h1v1h-1zM685 891h1v1h-1zM720 891h1v1h-1zM790 891h1v1h-1zM825 891h1v1h-1zM860 891h1v1h-1zM894 891h1v1h-1zM964 891h1v1h-1zM999 891h1v1h-1zM1034 891h1v1h-1zM1069 891h1v1h-1zM1139 891h1v1h-1zM1174 891h1v1h-1zM1209 891h1v1h-1zM1244 891h1v1h-1zM1314 891h1v1h-1zM1349 891h1v1h-1zM1384 891h1v1h-1zM1419 891h1v1h-1zM1489 891h1v1h-1zM1524 891h1v1h-1zM1559 891h1v1h-1zM1594 891h1v1h-1zM1664 891h1v1h-1zM1699 891h1v1h-1zM1734 891h1v1h-1zM20 915h1v1h-1zM90 915h1v1h-1zM125 915h1v1h-1zM160 915h1v1h-1zM195 915h1v1h-1zM265 915h1v1h-1zM300 915h1v1h-1zM335 915h1v1h-1zM370 915h1v1h-1zM440 915h1v1h-1zM475 915h1v1h-1zM510 915h1v1h-1zM545 915h1v1h-1zM615 915h1v1h-1zM650 915h1v1h-1zM685 915h1v1h-1zM720 915h1v1h-1zM790 915h1v1h-1zM825 915h1v1h-1zM860 915h1v1h-1zM894 915h1v1h-1zM964 915h1v1h-1zM999 915h1v1h-1zM1034 915h1v1h-1zM1069 915h1v1h-1zM1139 915h1v1h-1zM1174 915h1v1h-1zM1209 915h1v1h-1zM1244 915h1v1h-1zM1314 915h1v1h-1zM1349 915h1v1h-1zM1384 915h1v1h-1zM1419 915h1v1h-1zM1489 915h1v1h-1zM1524 915h1v1h-1zM1559 915h1v1h-1zM1594 915h1v1h-1zM1664 915h1v1h-1zM1699 915h1v1h-1zM1734 915h1v1h-1zM20 938h1v1h-1zM90 938h1v1h-1zM125 938h1v1h-1zM160 938h1v1h-1zM195 938h1v1h-1zM265 938h1v1h-1zM300 938h1v1h-1zM335 938h1v1h-1zM370 938h1v1h-1zM440 938h1v1h-1zM475 938h1v1h-1zM510 938h1v1h-1zM545 938h1v1h-1zM615 938h1v1h-1zM650 938h1v1h-1zM685 938h1v1h-1zM720 938h1v1h-1zM790 938h1v1h-1zM825 938h1v1h-1zM860 938h1v1h-1zM894 938h1v1h-1zM964 938h1v1h-1zM999 938h1v1h-1zM1034 938h1v1h-1zM1069 938h1v1h-1zM1139 938h1v1h-1zM1174 938h1v1h-1zM1209 938h1v1h-1zM1244 938h1v1h-1zM1314 938h1v1h-1zM1349 938h1v1h-1zM1384 938h1v1h-1zM1419 938h1v1h-1zM1489 938h1v1h-1zM1524 938h1v1h-1zM1559 938h1v1h-1zM1594 938h1v1h-1zM1664 938h1v1h-1zM1699 938h1v1h-1zM1734 938h1v1h-1zM20 961h1v1h-1zM90 961h1v1h-1zM125 961h1v1h-1zM160 961h1v1h-1zM195 961h1v1h-1zM265 961h1v1h-1zM300 961h1v1h-1zM335 961h1v1h-1zM370 961h1v1h-1zM440 961h1v1h-1zM475 961h1v1h-1zM510 961h1v1h-1zM545 961h1v1h-1zM615 961h1v1h-1zM650 961h1v1h-1zM685 961h1v1h-1zM720 961h1v1h-1zM790 961h1v1h-1zM825 961h1v1h-1zM860 961h1v1h-1zM894 961h1v1h-1zM964 961h1v1h-1zM999 961h1v1h-1zM1034 961h1v1h-1zM1069 961h1v1h-1zM1139 961h1v1h-1zM1174 961h1v1h-1zM1209 961h1v1h-1zM1244 961h1v1h-1zM1314 961h1v1h-1zM1349 961h1v1h-1zM1384 961h1v1h-1zM1419 961h1v1h-1zM1489 961h1v1h-1zM1524 961h1v1h-1zM1559 961h1v1h-1zM1594 961h1v1h-1zM1664 961h1v1h-1zM1699 961h1v1h-1zM1734 961h1v1h-1zM20 985h1v1h-1zM90 985h1v1h-1zM125 985h1v1h-1zM160 985h1v1h-1zM195 985h1v1h-1zM265 985h1v1h-1zM300 985h1v1h-1zM335 985h1v1h-1zM370 985h1v1h-1zM440 985h1v1h-1zM475 985h1v1h-1zM510 985h1v1h-1zM545 985h1v1h-1zM615 985h1v1h-1zM650 985h1v1h-1zM685 985h1v1h-1zM720 985h1v1h-1zM790 985h1v1h-1zM825 985h1v1h-1zM860 985h1v1h-1zM894 985h1v1h-1zM964 985h1v1h-1zM999 985h1v1h-1zM1034 985h1v1h-1zM1069 985h1v1h-1zM1139 985h1v1h-1zM1174 985h1v1h-1zM1209 985h1v1h-1zM1244 985h1v1h-1zM1314 985h1v1h-1zM1349 985h1v1h-1zM1384 985h1v1h-1zM1419 985h1v1h-1zM1489 985h1v1h-1zM1524 985h1v1h-1zM1559 985h1v1h-1zM1594 985h1v1h-1zM1664 985h1v1h-1zM1699 985h1v1h-1zM1734 985h1v1h-1z" fill="#b9b9b9" shape-rendering="crispEdges"/>
 <path d="M230 58h1v1h-1zM230 63h1v1h-1zM230 67h1v1h-1zM230 72h1v1h-1zM230 77h1v1h-1zM230 81h1v1h-1zM230 86h1v1h-1zM230 90h1v1h-1zM230 95h1v1h-1zM230 100h1v1h-1zM230 104h1v1h-1zM230 109h1v1h-1zM230 114h1v1h-1zM230 119h1v1h-1zM230 123h1v1h-1zM230 128h1v1h-1zM230 133h1v1h-1zM230 137h1v1h-1zM230 142h1v1h-1zM230 147h1v1h-1zM230 151h1v1h-1zM230 156h1v1h-1zM230 160h1v1h-1zM230 165h1v1h-1zM230 170h1v1h-1zM230 174h1v1h-1zM230 179h1v1h-1zM230 183h1v1h-1zM230 188h1v1h-1zM230 193h1v1h-1zM230 197h1v1h-1zM230 202h1v1h-1zM230 206h1v1h-1zM230 211h1v1h-1zM230 216h1v1h-1zM230 220h1v1h-1zM230 225h1v1h-1zM230 230h1v1h-1zM230 235h1v1h-1zM230 239h1v1h-1zM230 244h1v1h-1zM230 249h1v1h-1zM230 253h1v1h-1zM230 258h1v1h-1zM230 263h1v1h-1zM230 267h1v1h-1zM230 272h1v1h-1zM230 276h1v1h-1zM230 281h1v1h-1zM230 286h1v1h-1zM230 292h1v1h-1zM230 297h1v1h-1zM230 301h1v1h-1zM230 306h1v1h-1zM230 311h1v1h-1zM230 315h1v1h-1zM230 320h1v1h-1zM230 324h1v1h-1zM230 329h1v1h-1zM230 334h1v1h-1zM230 338h1v1h-1zM230 343h1v1h-1zM230 348h1v1h-1zM230 353h1v1h-1zM230 357h1v1h-1zM230 362h1v1h-1zM230 367h1v1h-1zM230 371h1v1h-1zM230 376h1v1h-1zM230 381h1v1h-1zM230 385h1v1h-1zM230 390h1v1h-1zM230 394h1v1h-1zM230 399h1v1h-1zM230 404h1v1h-1zM230 408h1v1h-1zM230 413h1v1h-1zM230 417h1v1h-1zM230 422h1v1h-1zM230 427h1v1h-1zM230 431h1v1h-1zM230 436h1v1h-1zM230 440h1v1h-1zM230 445h1v1h-1zM230 450h1v1h-1zM230 454h1v1h-1zM230 459h1v1h-1zM230 464h1v1h-1zM230 469h1v1h-1zM230 473h1v1h-1zM230 478h1v1h-1zM230 483h1v1h-1zM230 487h1v1h-1zM230 492h1v1h-1zM230 497h1v1h-1zM230 501h1v1h-1zM230 506h1v1h-1zM230 510h1v1h-1zM230 515h1v1h-1zM230 520h1v1h-1zM230 526h1v1h-1zM230 531h1v1h-1zM230 535h1v1h-1zM230 540h1v1h-1zM230 545h1v1h-1zM230 549h1v1h-1zM230 554h1v1h-1zM230 558h1v1h-1zM230 563h1v1h-1zM230 568h1v1h-1zM230 572h1v1h-1zM230 577h1v1h-1zM230 582h1v1h-1zM230 587h1v1h-1zM230 591h1v1h-1zM230 596h1v1h-1zM230 601h1v1h-1zM230 605h1v1h-1zM230 610h1v1h-1zM230 615h1v1h-1zM230 619h1v1h-1zM230 624h1v1h-1zM230 628h1v1h-1zM230 633h1v1h-1zM230 638h1v1h-1zM230 642h1v1h-1zM230 647h1v1h-1zM230 651h1v1h-1zM230 656h1v1h-1zM230 661h1v1h-1zM230 665h1v1h-1zM230 670h1v1h-1zM230 674h1v1h-1zM230 679h1v1h-1zM230 684h1v1h-1zM230 688h1v1h-1zM230 693h1v1h-1zM230 698h1v1h-1zM230 703h1v1h-1zM230 707h1v1h-1zM230 712h1v1h-1zM230 717h1v1h-1zM230 721h1v1h-1zM230 726h1v1h-1zM230 731h1v1h-1zM230 735h1v1h-1zM230 740h1v1h-1zM230 744h1v1h-1zM230 749h1v1h-1zM230 754h1v1h-1zM230 761h1v1h-1zM230 766h1v1h-1zM230 771h1v1h-1zM230 775h1v1h-1zM230 780h1v1h-1zM230 784h1v1h-1zM230 789h1v1h-1zM230 794h1v1h-1zM230 798h1v1h-1zM230 803h1v1h-1zM230 808h1v1h-1zM230 813h1v1h-1zM230 817h1v1h-1zM230 822h1v1h-1zM230 827h1v1h-1zM230 831h1v1h-1zM230 836h1v1h-1zM230 841h1v1h-1zM230 845h1v1h-1zM230 850h1v1h-1zM230 854h1v1h-1zM230 859h1v1h-1zM230 864h1v1h-1zM230 868h1v1h-1zM230 873h1v1h-1zM230 877h1v1h-1zM230 882h1v1h-1zM230 887h1v1h-1zM230 891h1v1h-1zM230 896h1v1h-1zM230 901h1v1h-1zM230 906h1v1h-1zM230 910h1v1h-1zM230 915h1v1h-1zM230 920h1v1h-1zM230 924h1v1h-1zM230 929h1v1h-1zM230 934h1v1h-1zM230 938h1v1h-1zM230 943h1v1h-1zM230 947h1v1h-1zM230 952h1v1h-1zM230 957h1v1h-1zM230 961h1v1h-1zM230 966h1v1h-1zM230 971h1v1h-1zM230 976h1v1h-1zM230 985h1v1h-1zM405 58h1v1h-1zM405 63h1v1h-1zM405 67h1v1h-1zM405 72h1v1h-1zM405 77h1v1h-1zM405 81h1v1h-1zM405 86h1v1h-1zM405 90h1v1h-1zM405 95h1v1h-1zM405 100h1v1h-1zM405 104h1v1h-1zM405 109h1v1h-1zM405 114h1v1h-1zM405 119h1v1h-1zM405 123h1v1h-1zM405 128h1v1h-1zM405 133h1v1h-1zM405 137h1v1h-1zM405 142h1v1h-1zM405 147h1v1h-1zM405 151h1v1h-1zM405 156h1v1h-1zM405 160h1v1h-1zM405 165h1v1h-1zM405 170h1v1h-1zM405 174h1v1h-1zM405 179h1v1h-1zM405 183h1v1h-1zM405 188h1v1h-1zM405 193h1v1h-1zM405 197h1v1h-1zM405 202h1v1h-1zM405 206h1v1h-1zM405 211h1v1h-1zM405 216h1v1h-1zM405 220h1v1h-1zM405 225h1v1h-1zM405 230h1v1h-1zM405 235h1v1h-1zM405 239h1v1h-1zM405 244h1v1h-1zM405 249h1v1h-1zM405 253h1v1h-1zM405 258h1v1h-1zM405 263h1v1h-1zM405 267h1v1h-1zM405 272h1v1h-1zM405 276h1v1h-1zM405 281h1v1h-1zM405 286h1v1h-1zM405 292h1v1h-1zM405 297h1v1h-1zM405 301h1v1h-1zM405 306h1v1h-1zM405 311h1v1h-1zM405 315h1v1h-1zM405 320h1v1h-1zM405 324h1v1h-1zM405 329h1v1h-1zM405 334h1v1h-1zM405 338h1v1h-1zM405 343h1v1h-1zM405 348h1v1h-1zM405 353h1v1h-1zM405 357h1v1h-1zM405 362h1v1h-1zM405 367h1v1h-1zM405 371h1v1h-1zM405 376h1v1h-1zM405 381h1v1h-1zM405 385h1v1h-1zM405 390h1v1h-1zM405 394h1v1h-1zM405 399h1v1h-1zM405 404h1v1h-1zM405 408h1v1h-1zM405 413h1v1h-1zM405 417h1v1h-1zM405 422h1v1h-1zM405 427h1v1h-1zM405 431h1v1h-1zM405 436h1v1h-1zM405 440h1v1h-1zM405 445h1v1h-1zM405 450h1v1h-1zM405 454h1v1h-1zM405 459h1v1h-1zM405 464h1v1h-1zM405 469h1v1h-1zM405 473h1v1h-1zM405 478h1v1h-1zM405 483h1v1h-1zM405 487h1v1h-1zM405 492h1v1h-1zM405 497h1v1h-1zM405 501h1v1h-1zM405 506h1v1h-1zM405 510h1v1h-1zM405 515h1v1h-1zM405 520h1v1h-1zM405 526h1v1h-1zM405 531h1v1h-1zM405 535h1v1h-1zM405 540h1v1h-1zM405 545h1v1h-1zM405 549h1v1h-1zM405 554h1v1h-1zM405 558h1v1h-1zM405 563h1v1h-1zM405 568h1v1h-1zM405 572h1v1h-1zM405 577h1v1h-1zM405 582h1v1h-1zM405 587h1v1h-1zM405 591h1v1h-1zM405 596h1v1h-1zM405 601h1v1h-1zM405 605h1v1h-1zM405 610h1v1h-1zM405 615h1v1h-1zM405 619h1v1h-1zM405 624h1v1h-1zM405 628h1v1h-1zM405 633h1v1h-1zM405 638h1v1h-1zM405 642h1v1h-1zM405 647h1v1h-1zM405 651h1v1h-1zM405 656h1v1h-1zM405 661h1v1h-1zM405 665h1v1h-1zM405 670h1v1h-1zM405 674h1v1h-1zM405 679h1v1h-1zM405 684h1v1h-1zM405 688h1v1h-1zM405 693h1v1h-1zM405 698h1v1h-1zM405 703h1v1h-1zM405 707h1v1h-1zM405 712h1v1h-1zM405 717h1v1h-1zM405 721h1v1h-1zM405 726h1v1h-1zM405 731h1v1h-1zM405 735h1v1h-1zM405 740h1v1h-1zM405 744h1v1h-1zM405 749h1v1h-1zM405 754h1v1h-1zM405 761h1v1h-1zM405 766h1v1h-1zM405 771h1v1h-1zM405 775h1v1h-1zM405 780h1v1h-1zM405 784h1v1h-1zM405 789h1v1h-1zM405 794h1v1h-1zM405 798h1v1h-1zM405 803h1v1h-1zM405 808h1v1h-1zM405 813h1v1h-1zM405 817h1v1h-1zM405 822h1v1h-1zM405 827h1v1h-1zM405 831h1v1h-1zM405 836h1v1h-1zM405 841h1v1h-1zM405 845h1v1h-1zM405 850h1v1h-1zM405 854h1v1h-1zM405 859h1v1h-1zM405 864h1v1h-1zM405 868h1v1h-1zM405 873h1v1h-1zM405 877h1v1h-1zM405 882h1v1h-1zM405 887h1v1h-1zM405 891h1v1h-1zM405 896h1v1h-1zM405 901h1v1h-1zM405 906h1v1h-1zM405 910h1v1h-1zM405 915h1v1h-1zM405 920h1v1h-1zM405 924h1v1h-1zM405 929h1v1h-1zM405 934h1v1h-1zM405 938h1v1h-1zM405 943h1v1h-1zM405 947h1v1h-1zM405 952h1v1h-1zM405 957h1v1h-1zM405 961h1v1h-1zM405 966h1v1h-1zM405 971h1v1h-1zM405 976h1v1h-1zM405 985h1v1h-1zM580 58h1v1h-1zM580 63h1v1h-1zM580 67h1v1h-1zM580 72h1v1h-1zM580 77h1v1h-1zM580 81h1v1h-1zM580 86h1v1h-1zM580 90h1v1h-1zM580 95h1v1h-1zM580 100h1v1h-1zM580 104h1v1h-1zM580 109h1v1h-1zM580 114h1v1h-1zM580 119h1v1h-1zM580 123h1v1h-1zM580 128h1v1h-1zM580 133h1v1h-1zM580 137h1v1h-1zM580 142h1v1h-1zM580 147h1v1h-1zM580 151h1v1h-1zM580 156h1v1h-1zM580 160h1v1h-1zM580 165h1v1h-1zM580 170h1v1h-1zM580 174h1v1h-1zM580 179h1v1h-1zM580 183h1v1h-1zM580 188h1v1h-1zM580 193h1v1h-1zM580 197h1v1h-1zM580 202h1v1h-1zM580 206h1v1h-1zM580 211h1v1h-1zM580 216h1v1h-1zM580 220h1v1h-1zM580 225h1v1h-1zM580 230h1v1h-1zM580 235h1v1h-1zM580 239h1v1h-1zM580 244h1v1h-1zM580 249h1v1h-1zM580 253h1v1h-1zM580 258h1v1h-1zM580 263h1v1h-1zM580 267h1v1h-1zM580 272h1v1h-1zM580 276h1v1h-1zM580 281h1v1h-1zM580 286h1v1h-1zM580 292h1v1h-1zM580 297h1v1h-1zM580 301h1v1h-1zM580 306h1v1h-1zM580 311h1v1h-1zM580 315h1v1h-1zM580 320h1v1h-1zM580 324h1v1h-1zM580 329h1v1h-1zM580 334h1v1h-1zM580 338h1v1h-1zM580 343h1v1h-1zM580 348h1v1h-1zM580 353h1v1h-1zM580 357h1v1h-1zM580 362h1v1h-1zM580 367h1v1h-1zM580 371h1v1h-1zM580 376h1v1h-1zM580 381h1v1h-1zM580 385h1v1h-1zM580 390h1v1h-1zM580 394h1v1h-1zM580 399h1v1h-1zM580 404h1v1h-1zM580 408h1v1h-1zM580 413h1v1h-1zM580 417h1v1h-1zM580 422h1v1h-1zM580 427h1v1h-1zM580 431h1v1h-1zM580 436h1v1h-1zM580 440h1v1h-1zM580 445h1v1h-1zM580 450h1v1h-1zM580 454h1v1h-1zM580 459h1v1h-1zM580 464h1v1h-1zM580 469h1v1h-1zM580 473h1v1h-1zM580 478h1v1h-1zM580 483h1v1h-1zM580 487h1v1h-1zM580 492h1v1h-1zM580 497h1v1h-1zM580 501h1v1h-1zM580 506h1v1h-1zM580 510h1v1h-1zM580 515h1v1h-1zM580 520h1v1h-1zM580 526h1v1h-1zM580 531h1v1h-1zM580 535h1v1h-1zM580 540h1v1h-1zM580 545h1v1h-1zM580 549h1v1h-1zM580 554h1v1h-1zM580 558h1v1h-1zM580 563h1v1h-1zM580 568h1v1h-1zM580 572h1v1h-1zM580 577h1v1h-1zM580 582h1v1h-1zM580 587h1v1h-1zM580 591h1v1h-1zM580 596h1v1h-1zM580 601h1v1h-1zM580 605h1v1h-1zM580 610h1v1h-1zM580 615h1v1h-1zM580 619h1v1h-1zM580 624h1v1h-1zM580 628h1v1h-1zM580 633h1v1h-1zM580 638h1v1h-1zM580 642h1v1h-1zM580 647h1v1h-1zM580 651h1v1h-1zM580 656h1v1h-1zM580 661h1v1h-1zM580 665h1v1h-1zM580 670h1v1h-1zM580 674h1v1h-1zM580 679h1v1h-1zM580 684h1v1h-1zM580 688h1v1h-1zM580 693h1v1h-1zM580 698h1v1h-1zM580 703h1v1h-1zM580 707h1v1h-1zM580 712h1v1h-1zM580 717h1v1h-1zM580 721h1v1h-1zM580 726h1v1h-1zM580 731h1v1h-1zM580 735h1v1h-1zM580 740h1v1h-1zM580 744h1v1h-1zM580 749h1v1h-1zM580 754h1v1h-1zM580 761h1v1h-1zM580 766h1v1h-1zM580 771h1v1h-1zM580 775h1v1h-1zM580 780h1v1h-1zM580 784h1v1h-1zM580 789h1v1h-1zM580 794h1v1h-1zM580 798h1v1h-1zM580 803h1v1h-1zM580 808h1v1h-1zM580 813h1v1h-1zM580 817h1v1h-1zM580 822h1v1h-1zM580 827h1v1h-1zM580 831h1v1h-1zM580 836h1v1h-1zM580 841h1v1h-1zM580 845h1v1h-1zM580 850h1v1h-1zM580 854h1v1h-1zM580 859h1v1h-1zM580 864h1v1h-1zM580 868h1v1h-1zM580 873h1v1h-1zM580 877h1v1h-1zM580 882h1v1h-1zM580 887h1v1h-1zM580 891h1v1h-1zM580 896h1v1h-1zM580 901h1v1h-1zM580 906h1v1h-1zM580 910h1v1h-1zM580 915h1v1h-1zM580 920h1v1h-1zM580 924h1v1h-1zM580 929h1v1h-1zM580 934h1v1h-1zM580 938h1v1h-1zM580 943h1v1h-1zM580 947h1v1h-1zM580 952h1v1h-1zM580 957h1v1h-1zM580 961h1v1h-1zM580 966h1v1h-1zM580 971h1v1h-1zM580 976h1v1h-1zM580 985h1v1h-1zM755 58h1v1h-1zM755 63h1v1h-1zM755 67h1v1h-1zM755 72h1v1h-1zM755 77h1v1h-1zM755 81h1v1h-1zM755 86h1v1h-1zM755 90h1v1h-1zM755 95h1v1h-1zM755 100h1v1h-1zM755 104h1v1h-1zM755 109h1v1h-1zM755 114h1v1h-1zM755 119h1v1h-1zM755 123h1v1h-1zM755 128h1v1h-1zM755 133h1v1h-1zM755 137h1v1h-1zM755 142h1v1h-1zM755 147h1v1h-1zM755 151h1v1h-1zM755 156h1v1h-1zM755 160h1v1h-1zM755 165h1v1h-1zM755 170h1v1h-1zM755 174h1v1h-1zM755 179h1v1h-1zM755 183h1v1h-1zM755 188h1v1h-1zM755 193h1v1h-1zM755 197h1v1h-1zM755 202h1v1h-1zM755 206h1v1h-1zM755 211h1v1h-1zM755 216h1v1h-1zM755 220h1v1h-1zM755 225h1v1h-1zM755 230h1v1h-1zM755 235h1v1h-1zM755 239h1v1h-1zM755 244h1v1h-1zM755 249h1v1h-1zM755 253h1v1h-1zM755 258h1v1h-1zM755 263h1v1h-1zM755 267h1v1h-1zM755 272h1v1h-1zM755 276h1v1h-1zM755 281h1v1h-1zM755 286h1v1h-1zM755 292h1v1h-1zM755 297h1v1h-1zM755 301h1v1h-1zM755 306h1v1h-1zM755 311h1v1h-1zM755 315h1v1h-1zM755 320h1v1h-1zM755 324h1v1h-1zM755 329h1v1h-1zM755 334h1v1h-1zM755 338h1v1h-1zM755 343h1v1h-1zM755 348h1v1h-1zM755 353h1v1h-1zM755 357h1v1h-1zM755 362h1v1h-1zM755 367h1v1h-1zM755 371h1v1h-1zM755 376h1v1h-1zM755 381h1v1h-1zM755 385h1v1h-1zM755 390h1v1h-1zM755 394h1v1h-1zM755 399h1v1h-1zM755 404h1v1h-1zM755 408h1v1h-1zM755 413h1v1h-1zM755 417h1v1h-1zM755 422h1v1h-1zM755 427h1v1h-1zM755 431h1v1h-1zM755 436h1v1h-1zM755 440h1v1h-1zM755 445h1v1h-1zM755 450h1v1h-1zM755 454h1v1h-1zM755 459h1v1h-1zM755 464h1v1h-1zM755 469h1v1h-1zM755 473h1v1h-1zM755 478h1v1h-1zM755 483h1v1h-1zM755 487h1v1h-1zM755 492h1v1h-1zM755 497h1v1h-1zM755 501h1v1h-1zM755 506h1v1h-1zM755 510h1v1h-1zM755 515h1v1h-1zM755 520h1v1h-1zM755 526h1v1h-1zM755 531h1v1h-1zM755 535h1v1h-1zM755 540h1v1h-1zM755 545h1v1h-1zM755 549h1v1h-1zM755 554h1v1h-1zM755 558h1v1h-1zM755 563h1v1h-1zM755 568h1v1h-1zM755 572h1v1h-1zM755 577h1v1h-1zM755 582h1v1h-1zM755 587h1v1h-1zM755 591h1v1h-1zM755 596h1v1h-1zM755 601h1v1h-1zM755 605h1v1h-1zM755 610h1v1h-1zM755 615h1v1h-1zM755 619h1v1h-1zM755 624h1v1h-1zM755 628h1v1h-1zM755 633h1v1h-1zM755 638h1v1h-1zM755 642h1v1h-1zM755 647h1v1h-1zM755 651h1v1h-1zM755 656h1v1h-1zM755 661h1v1h-1zM755 665h1v1h-1zM755 670h1v1h-1zM755 674h1v1h-1zM755 679h1v1h-1zM755 684h1v1h-1zM755 688h1v1h-1zM755 693h1v1h-1zM755 698h1v1h-1zM755 703h1v1h-1zM755 707h1v1h-1zM755 712h1v1h-1zM755 717h1v1h-1zM755 721h1v1h-1zM755 726h1v1h-1zM755 731h1v1h-1zM755 735h1v1h-1zM755 740h1v1h-1zM755 744h1v1h-1zM755 749h1v1h-1zM755 754h1v1h-1zM755 761h1v1h-1zM755 766h1v1h-1zM755 771h1v1h-1zM755 775h1v1h-1zM755 780h1v1h-1zM755 784h1v1h-1zM755 789h1v1h-1zM755 794h1v1h-1zM755 798h1v1h-1zM755 803h1v1h-1zM755 808h1v1h-1zM755 813h1v1h-1zM755 817h1v1h-1zM755 822h1v1h-1zM755 827h1v1h-1zM755 831h1v1h-1zM755 836h1v1h-1zM755 841h1v1h-1zM755 845h1v1h-1zM755 850h1v1h-1zM755 854h1v1h-1zM755 859h1v1h-1zM755 864h1v1h-1zM755 868h1v1h-1zM755 873h1v1h-1zM755 877h1v1h-1zM755 882h1v1h-1zM755 887h1v1h-1zM755 891h1v1h-1zM755 896h1v1h-1zM755 901h1v1h-1zM755 906h1v1h-1zM755 910h1v1h-1zM755 915h1v1h-1zM755 920h1v1h-1zM755 924h1v1h-1zM755 929h1v1h-1zM755 934h1v1h-1zM755 938h1v1h-1zM755 943h1v1h-1zM755 947h1v1h-1zM755 952h1v1h-1zM755 957h1v1h-1zM755 961h1v1h-1zM755 966h1v1h-1zM755 971h1v1h-1zM755 976h1v1h-1zM755 985h1v1h-1zM929 58h1v1h-1zM929 63h1v1h-1zM929 67h1v1h-1zM929 72h1v1h-1zM929 77h1v1h-1zM929 81h1v1h-1zM929 86h1v1h-1zM929 90h1v1h-1zM929 95h1v1h-1zM929 100h1v1h-1zM929 104h1v1h-1zM929 109h1v1h-1zM929 114h1v1h-1zM929 119h1v1h-1zM929 123h1v1h-1zM929 128h1v1h-1zM929 133h1v1h-1zM929 137h1v1h-1zM929 142h1v1h-1zM929 147h1v1h-1zM929 151h1v1h-1zM929 156h1v1h-1zM929 160h1v1h-1zM929 165h1v1h-1zM929 170h1v1h-1zM929 174h1v1h-1zM929 179h1v1h-1zM929 183h1v1h-1zM929 188h1v1h-1zM929 193h1v1h-1zM929 197h1v1h-1zM929 202h1v1h-1zM929 206h1v1h-1zM929 211h1v1h-1zM929 216h1v1h-1zM929 220h1v1h-1zM929 225h1v1h-1zM929 230h1v1h-1zM929 235h1v1h-1zM929 239h1v1h-1zM929 244h1v1h-1zM929 249h1v1h-1zM929 253h1v1h-1zM929 258h1v1h-1zM929 263h1v1h-1zM929 267h1v1h-1zM929 272h1v1h-1zM929 276h1v1h-1zM929 281h1v1h-1zM929 286h1v1h-1zM929 292h1v1h-1zM929 297h1v1h-1zM929 301h1v1h-1zM929 306h1v1h-1zM929 311h1v1h-1zM929 315h1v1h-1zM929 320h1v1h-1zM929 324h1v1h-1zM929 329h1v1h-1zM929 334h1v1h-1zM929 338h1v1h-1zM929 343h1v1h-1zM929 348h1v1h-1zM929 353h1v1h-1zM929 357h1v1h-1zM929 362h1v1h-1zM929 367h1v1h-1zM929 371h1v1h-1zM929 376h1v1h-1zM929 381h1v1h-1zM929 385h1v1h-1zM929 390h1v1h-1zM929 394h1v1h-1zM929 399h1v1h-1zM929 404h1v1h-1zM929 408h1v1h-1zM929 413h1v1h-1zM929 417h1v1h-1zM929 422h1v1h-1zM929 427h1v1h-1zM929 431h1v1h-1zM929 436h1v1h-1zM929 440h1v1h-1zM929 445h1v1h-1zM929 450h1v1h-1zM929 454h1v1h-1zM929 459h1v1h-1zM929 464h1v1h-1zM929 469h1v1h-1zM929 473h1v1h-1zM929 478h1v1h-1zM929 483h1v1h-1zM929 487h1v1h-1zM929 492h1v1h-1zM929 497h1v1h-1zM929 501h1v1h-1zM929 506h1v1h-1zM929 510h1v1h-1zM929 515h1v1h-1zM929 520h1v1h-1zM929 526h1v1h-1zM929 531h1v1h-1zM929 535h1v1h-1zM929 540h1v1h-1zM929 545h1v1h-1zM929 549h1v1h-1zM929 554h1v1h-1zM929 558h1v1h-1zM929 563h1v1h-1zM929 568h1v1h-1zM929 572h1v1h-1zM929 577h1v1h-1zM929 582h1v1h-1zM929 587h1v1h-1zM929 591h1v1h-1zM929 596h1v1h-1zM929 601h1v1h-1zM929 605h1v1h-1zM929 610h1v1h-1zM929 615h1v1h-1zM929 619h1v1h-1zM929 624h1v1h-1zM929 628h1v1h-1zM929 633h1v1h-1zM929 638h1v1h-1zM929 642h1v1h-1zM929 647h1v1h-1zM929 651h1v1h-1zM929 656h1v1h-1zM929 661h1v1h-1zM929 665h1v1h-1zM929 670h1v1h-1zM929 674h1v1h-1zM929 679h1v1h-1zM929 684h1v1h-1zM929 688h1v1h-1zM929 693h1v1h-1zM929 698h1v1h-1zM929 703h1v1h-1zM929 707h1v1h-1zM929 712h1v1h-1zM929 717h1v1h-1zM929 721h1v1h-1zM929 726h1v1h-1zM929 731h1v1h-1zM929 735h1v1h-1zM929 740h1v1h-1zM929 744h1v1h-1zM929 749h1v1h-1zM929 754h1v1h-1zM929 761h1v1h-1zM929 766h1v1h-1zM929 771h1v1h-1zM929 775h1v1h-1zM929 780h1v1h-1zM929 784h1v1h-1zM929 789h1v1h-1zM929 794h1v1h-1zM929 798h1v1h-1zM929 803h1v1h-1zM929 808h1v1h-1zM929 813h1v1h-1zM929 817h1v1h-1zM929 822h1v1h-1zM929 827h1v1h-1zM929 831h1v1h-1zM929 836h1v1h-1zM929 841h1v1h-1zM929 845h1v1h-1zM929 850h1v1h-1zM929 854h1v1h-1zM929 859h1v1h-1zM929 864h1v1h-1zM929 868h1v1h-1zM929 873h1v1h-1zM929 877h1v1h-1zM929 882h1v1h-1zM929 887h1v1h-1zM929 891h1v1h-1zM929 896h1v1h-1zM929 901h1v1h-1zM929 906h1v1h-1zM929 910h1v1h-1zM929 915h1v1h-1zM929 920h1v1h-1zM929 924h1v1h-1zM929 929h1v1h-1zM929 934h1v1h-1zM929 938h1v1h-1zM929 943h1v1h-1zM929 947h1v1h-1zM929 952h1v1h-1zM929 957h1v1h-1zM929 961h1v1h-1zM929 966h1v1h-1zM929 971h1v1h-1zM929 976h1v1h-1zM929 985h1v1h-1zM1104 58h1v1h-1zM1104 63h1v1h-1zM1104 67h1v1h-1zM1104 72h1v1h-1zM1104 77h1v1h-1zM1104 81h1v1h-1zM1104 86h1v1h-1zM1104 90h1v1h-1zM1104 95h1v1h-1zM1104 100h1v1h-1zM1104 104h1v1h-1zM1104 109h1v1h-1zM1104 114h1v1h-1zM1104 119h1v1h-1zM1104 123h1v1h-1zM1104 128h1v1h-1zM1104 133h1v1h-1zM1104 137h1v1h-1zM1104 142h1v1h-1zM1104 147h1v1h-1zM1104 151h1v1h-1zM1104 156h1v1h-1zM1104 160h1v1h-1zM1104 165h1v1h-1zM1104 170h1v1h-1zM1104 174h1v1h-1zM1104 179h1v1h-1zM1104 183h1v1h-1zM1104 188h1v1h-1zM1104 193h1v1h-1zM1104 197h1v1h-1zM1104 202h1v1h-1zM1104 206h1v1h-1zM1104 211h1v1h-1zM1104 216h1v1h-1zM1104 220h1v1h-1zM1104 225h1v1h-1zM1104 230h1v1h-1zM1104 235h1v1h-1zM1104 239h1v1h-1zM1104 244h1v1h-1zM1104 249h1v1h-1zM1104 253h1v1h-1zM1104 258h1v1h-1zM1104 263h1v1h-1zM1104 267h1v1h-1zM1104 272h1v1h-1zM1104 276h1v1h-1zM1104 281h1v1h-1zM1104 286h1v1h-1zM1104 292h1v1h-1zM1104 297h1v1h-1zM1104 301h1v1h-1zM1104 306h1v1h-1zM1104 311h1v1h-1zM1104 315h1v1h-1zM1104 320h1v1h-1zM1104 324h1v1h-1zM1104 329h1v1h-1zM1104 334h1v1h-1zM1104 338h1v1h-1zM1104 343h1v1h-1zM1104 348h1v1h-1zM1104 353h1v1h-1zM1104 357h1v1h-1zM1104 362h1v1h-1zM1104 367h1v1h-1zM1104 371h1v1h-1zM1104 376h1v1h-1zM1104 381h1v1h-1zM1104 385h1v1h-1zM1104 390h1v1h-1zM1104 394h1v1h-1zM1104 399h1v1h-1zM1104 404h1v1h-1zM1104 408h1v1h-1zM1104 413h1v1h-1zM1104 417h1v1h-1zM1104 422h1v1h-1zM1104 427h1v1h-1zM1104 431h1v1h-1zM1104 436h1v1h-1zM1104 440h1v1h-1zM1104 445h1v1h-1zM1104 450h1v1h-1zM1104 454h1v1h-1zM1104 459h1v1h-1zM1104 464h1v1h-1zM1104 469h1v1h-1zM1104 473h1v1h-1zM1104 478h1v1h-1zM1104 483h1v1h-1zM1104 487h1v1h-1zM1104 492h1v1h-1zM1104 497h1v1h-1zM1104 501h1v1h-1zM1104 506h1v1h-1zM1104 510h1v1h-1zM1104 515h1v1h-1zM1104 520h1v1h-1zM1104 526h1v1h-1zM1104 531h1v1h-1zM1104 535h1v1h-1zM1104 540h1v1h-1zM1104 545h1v1h-1zM1104 549h1v1h-1zM1104 554h1v1h-1zM1104 558h1v1h-1zM1104 563h1v1h-1zM1104 568h1v1h-1zM1104 572h1v1h-1zM1104 577h1v1h-1zM1104 582h1v1h-1zM1104 587h1v1h-1zM1104 591h1v1h-1zM1104 596h1v1h-1zM1104 601h1v1h-1zM1104 605h1v1h-1zM1104 610h1v1h-1zM1104 615h1v1h-1zM1104 619h1v1h-1zM1104 624h1v1h-1zM1104 628h1v1h-1zM1104 633h1v1h-1zM1104 638h1v1h-1zM1104 642h1v1h-1zM1104 647h1v1h-1zM1104 651h1v1h-1zM1104 656h1v1h-1zM1104 661h1v1h-1zM1104 665h1v1h-1zM1104 670h1v1h-1zM1104 674h1v1h-1zM1104 679h1v1h-1zM1104 684h1v1h-1zM1104 688h1v1h-1zM1104 693h1v1h-1zM1104 698h1v1h-1zM1104 703h1v1h-1zM1104 707h1v1h-1zM1104 712h1v1h-1zM1104 717h1v1h-1zM1104 721h1v1h-1zM1104 726h1v1h-1zM1104 731h1v1h-1zM1104 735h1v1h-1zM1104 740h1v1h-1zM1104 744h1v1h-1zM1104 749h1v1h-1zM1104 754h1v1h-1zM1104 761h1v1h-1zM1104 766h1v1h-1zM1104 771h1v1h-1zM1104 775h1v1h-1zM1104 780h1v1h-1zM1104 784h1v1h-1zM1104 789h1v1h-1zM1104 794h1v1h-1zM1104 798h1v1h-1zM1104 803h1v1h-1zM1104 808h1v1h-1zM1104 813h1v1h-1zM1104 817h1v1h-1zM1104 822h1v1h-1zM1104 827h1v1h-1zM1104 831h1v1h-1zM1104 836h1v1h-1zM1104 841h1v1h-1zM1104 845h1v1h-1zM1104 850h1v1h-1zM1104 854h1v1h-1zM1104 859h1v1h-1zM1104 864h1v1h-1zM1104 868h1v1h-1zM1104 873h1v1h-1zM1104 877h1v1h-1zM1104 882h1v1h-1zM1104 887h1v1h-1zM1104 891h1v1h-1zM1104 896h1v1h-1zM1104 901h1v1h-1zM1104 906h1v1h-1zM1104 910h1v1h-1zM1104 915h1v1h-1zM1104 920h1v1h-1zM1104 924h1v1h-1zM1104 929h1v1h-1zM1104 934h1v1h-1zM1104 938h1v1h-1zM1104 943h1v1h-1zM1104 947h1v1h-1zM1104 952h1v1h-1zM1104 957h1v1h-1zM1104 961h1v1h-1zM1104 966h1v1h-1zM1104 971h1v1h-1zM1104 976h1v1h-1zM1104 985h1v1h-1zM1279 58h1v1h-1zM1279 63h1v1h-1zM1279 67h1v1h-1zM1279 72h1v1h-1zM1279 77h1v1h-1zM1279 81h1v1h-1zM1279 86h1v1h-1zM1279 90h1v1h-1zM1279 95h1v1h-1zM1279 100h1v1h-1zM1279 104h1v1h-1zM1279 109h1v1h-1zM1279 114h1v1h-1zM1279 119h1v1h-1zM1279 123h1v1h-1zM1279 128h1v1h-1zM1279 133h1v1h-1zM1279 137h1v1h-1zM1279 142h1v1h-1zM1279 147h1v1h-1zM1279 151h1v1h-1zM1279 156h1v1h-1zM1279 160h1v1h-1zM1279 165h1v1h-1zM1279 170h1v1h-1zM1279 174h1v1h-1zM1279 179h1v1h-1zM1279 183h1v1h-1zM1279 188h1v1h-1zM1279 193h1v1h-1zM1279 197h1v1h-1zM1279 202h1v1h-1zM1279 206h1v1h-1zM1279 211h1v1h-1zM1279 216h1v1h-1zM1279 220h1v1h-1zM1279 225h1v1h-1zM1279 230h1v1h-1zM1279 235h1v1h-1zM1279 239h1v1h-1zM1279 244h1v1h-1zM1279 249h1v1h-1zM1279 253h1v1h-1zM1279 258h1v1h-1zM1279 263h1v1h-1zM1279 267h1v1h-1zM1279 272h1v1h-1zM1279 276h1v1h-1zM1279 281h1v1h-1zM1279 286h1v1h-1zM1279 292h1v1h-1zM1279 297h1v1h-1zM1279 301h1v1h-1zM1279 306h1v1h-1zM1279 311h1v1h-1zM1279 315h1v1h-1zM1279 320h1v1h-1zM1279 324h1v1h-1zM1279 329h1v1h-1zM1279 334h1v1h-1zM1279 338h1v1h-1zM1279 343h1v1h-1zM1279 348h1v1h-1zM1279 353h1v1h-1zM1279 357h1v1h-1zM1279 362h1v1h-1zM1279 367h1v1h-1zM1279 371h1v1h-1zM1279 376h1v1h-1zM1279 381h1v1h-1zM1279 385h1v1h-1zM1279 390h1v1h-1zM1279 394h1v1h-1zM1279 399h1v1h-1zM1279 404h1v1h-1zM1279 408h1v1h-1zM1279 413h1v1h-1zM1279 417h1v1h-1zM1279 422h1v1h-1zM1279 427h1v1h-1zM1279 431h1v1h-1zM1279 436h1v1h-1zM1279 440h1v1h-1zM1279 445h1v1h-1zM1279 450h1v1h-1zM1279 454h1v1h-1zM1279 459h1v1h-1zM1279 464h1v1h-1zM1279 469h1v1h-1zM1279 473h1v1h-1zM1279 478h1v1h-1zM1279 483h1v1h-1zM1279 487h1v1h-1zM1279 492h1v1h-1zM1279 497h1v1h-1zM1279 501h1v1h-1zM1279 506h1v1h-1zM1279 510h1v1h-1zM1279 515h1v1h-1zM1279 520h1v1h-1zM1279 526h1v1h-1zM1279 531h1v1h-1zM1279 535h1v1h-1zM1279 540h1v1h-1zM1279 545h1v1h-1zM1279 549h1v1h-1zM1279 554h1v1h-1zM1279 558h1v1h-1zM1279 563h1v1h-1zM1279 568h1v1h-1zM1279 572h1v1h-1zM1279 577h1v1h-1zM1279 582h1v1h-1zM1279 587h1v1h-1zM1279 591h1v1h-1zM1279 596h1v1h-1zM1279 601h1v1h-1zM1279 605h1v1h-1zM1279 610h1v1h-1zM1279 615h1v1h-1zM1279 619h1v1h-1zM1279 624h1v1h-1zM1279 628h1v1h-1zM1279 633h1v1h-1zM1279 638h1v1h-1zM1279 642h1v1h-1zM1279 647h1v1h-1zM1279 651h1v1h-1zM1279 656h1v1h-1zM1279 661h1v1h-1zM1279 665h1v1h-1zM1279 670h1v1h-1zM1279 674h1v1h-1zM1279 679h1v1h-1zM1279 684h1v1h-1zM1279 688h1v1h-1zM1279 693h1v1h-1zM1279 698h1v1h-1zM1279 703h1v1h-1zM1279 707h1v1h-1zM1279 712h1v1h-1zM1279 717h1v1h-1zM1279 721h1v1h-1zM1279 726h1v1h-1zM1279 731h1v1h-1zM1279 735h1v1h-1zM1279 740h1v1h-1zM1279 744h1v1h-1zM1279 749h1v1h-1zM1279 754h1v1h-1zM1279 761h1v1h-1zM1279 766h1v1h-1zM1279 771h1v1h-1zM1279 775h1v1h-1zM1279 780h1v1h-1zM1279 784h1v1h-1zM1279 789h1v1h-1zM1279 794h1v1h-1zM1279 798h1v1h-1zM1279 803h1v1h-1zM1279 808h1v1h-1zM1279 813h1v1h-1zM1279 817h1v1h-1zM1279 822h1v1h-1zM1279 827h1v1h-1zM1279 831h1v1h-1zM1279 836h1v1h-1zM1279 841h1v1h-1zM1279 845h1v1h-1zM1279 850h1v1h-1zM1279 854h1v1h-1zM1279 859h1v1h-1zM1279 864h1v1h-1zM1279 868h1v1h-1zM1279 873h1v1h-1zM1279 877h1v1h-1zM1279 882h1v1h-1zM1279 887h1v1h-1zM1279 891h1v1h-1zM1279 896h1v1h-1zM1279 901h1v1h-1zM1279 906h1v1h-1zM1279 910h1v1h-1zM1279 915h1v1h-1zM1279 920h1v1h-1zM1279 924h1v1h-1zM1279 929h1v1h-1zM1279 934h1v1h-1zM1279 938h1v1h-1zM1279 943h1v1h-1zM1279 947h1v1h-1zM1279 952h1v1h-1zM1279 957h1v1h-1zM1279 961h1v1h-1zM1279 966h1v1h-1zM1279 971h1v1h-1zM1279 976h1v1h-1zM1279 985h1v1h-1zM1454 58h1v1h-1zM1454 63h1v1h-1zM1454 67h1v1h-1zM1454 72h1v1h-1zM1454 77h1v1h-1zM1454 81h1v1h-1zM1454 86h1v1h-1zM1454 90h1v1h-1zM1454 95h1v1h-1zM1454 100h1v1h-1zM1454 104h1v1h-1zM1454 109h1v1h-1zM1454 114h1v1h-1zM1454 119h1v1h-1zM1454 123h1v1h-1zM1454 128h1v1h-1zM1454 133h1v1h-1zM1454 137h1v1h-1zM1454 142h1v1h-1zM1454 147h1v1h-1zM1454 151h1v1h-1zM1454 156h1v1h-1zM1454 160h1v1h-1zM1454 165h1v1h-1zM1454 170h1v1h-1zM1454 174h1v1h-1zM1454 179h1v1h-1zM1454 183h1v1h-1zM1454 188h1v1h-1zM1454 193h1v1h-1zM1454 197h1v1h-1zM1454 202h1v1h-1zM1454 206h1v1h-1zM1454 211h1v1h-1zM1454 216h1v1h-1zM1454 220h1v1h-1zM1454 225h1v1h-1zM1454 230h1v1h-1zM1454 235h1v1h-1zM1454 239h1v1h-1zM1454 244h1v1h-1zM1454 249h1v1h-1zM1454 253h1v1h-1zM1454 258h1v1h-1zM1454 263h1v1h-1zM1454 267h1v1h-1zM1454 272h1v1h-1zM1454 276h1v1h-1zM1454 281h1v1h-1zM1454 286h1v1h-1zM1454 292h1v1h-1zM1454 297h1v1h-1zM1454 301h1v1h-1zM1454 306h1v1h-1zM1454 311h1v1h-1zM1454 315h1v1h-1zM1454 320h1v1h-1zM1454 324h1v1h-1zM1454 329h1v1h-1zM1454 334h1v1h-1zM1454 338h1v1h-1zM1454 343h1v1h-1zM1454 348h1v1h-1zM1454 353h1v1h-1zM1454 357h1v1h-1zM1454 362h1v1h-1zM1454 367h1v1h-1zM1454 371h1v1h-1zM1454 376h1v1h-1zM1454 381h1v1h-1zM1454 385h1v1h-1zM1454 390h1v1h-1zM1454 394h1v1h-1zM1454 399h1v1h-1zM1454 404h1v1h-1zM1454 408h1v1h-1zM1454 413h1v1h-1zM1454 417h1v1h-1zM1454 422h1v1h-1zM1454 427h1v1h-1zM1454 431h1v1h-1zM1454 436h1v1h-1zM1454 440h1v1h-1zM1454 445h1v1h-1zM1454 450h1v1h-1zM1454 454h1v1h-1zM1454 459h1v1h-1zM1454 464h1v1h-1zM1454 469h1v1h-1zM1454 473h1v1h-1zM1454 478h1v1h-1zM1454 483h1v1h-1zM1454 487h1v1h-1zM1454 492h1v1h-1zM1454 497h1v1h-1zM1454 501h1v1h-1zM1454 506h1v1h-1zM1454 510h1v1h-1zM1454 515h1v1h-1zM1454 520h1v1h-1zM1454 526h1v1h-1zM1454 531h1v1h-1zM1454 535h1v1h-1zM1454 540h1v1h-1zM1454 545h1v1h-1zM1454 549h1v1h-1zM1454 554h1v1h-1zM1454 558h1v1h-1zM1454 563h1v1h-1zM1454 568h1v1h-1zM1454 572h1v1h-1zM1454 577h1v1h-1zM1454 582h1v1h-1zM1454 587h1v1h-1zM1454 591h1v1h-1zM1454 596h1v1h-1zM1454 601h1v1h-1zM1454 605h1v1h-1zM1454 610h1v1h-1zM1454 615h1v1h-1zM1454 619h1v1h-1zM1454 624h1v1h-1zM1454 628h1v1h-1zM1454 633h1v1h-1zM1454 638h1v1h-1zM1454 642h1v1h-1zM1454 647h1v1h-1zM1454 651h1v1h-1zM1454 656h1v1h-1zM1454 661h1v1h-1zM1454 665h1v1h-1zM1454 670h1v1h-1zM1454 674h1v1h-1zM1454 679h1v1h-1zM1454 684h1v1h-1zM1454 688h1v1h-1zM1454 693h1v1h-1zM1454 698h1v1h-1zM1454 703h1v1h-1zM1454 707h1v1h-1zM1454 712h1v1h-1zM1454 717h1v1h-1zM1454 721h1v1h-1zM1454 726h1v1h-1zM1454 731h1v1h-1zM1454 735h1v1h-1zM1454 740h1v1h-1zM1454 744h1v1h-1zM1454 749h1v1h-1zM1454 754h1v1h-1zM1454 761h1v1h-1zM1454 766h1v1h-1zM1454 771h1v1h-1zM1454 775h1v1h-1zM1454 780h1v1h-1zM1454 784h1v1h-1zM1454 789h1v1h-1zM1454 794h1v1h-1zM1454 798h1v1h-1zM1454 803h1v1h-1zM1454 808h1v1h-1zM1454 813h1v1h-1zM1454 817h1v1h-1zM1454 822h1v1h-1zM1454 827h1v1h-1zM1454 831h1v1h-1zM1454 836h1v1h-1zM1454 841h1v1h-1zM1454 845h1v1h-1zM1454 850h1v1h-1zM1454 854h1v1h-1zM1454 859h1v1h-1zM1454 864h1v1h-1zM1454 868h1v1h-1zM1454 873h1v1h-1zM1454 877h1v1h-1zM1454 882h1v1h-1zM1454 887h1v1h-1zM1454 891h1v1h-1zM1454 896h1v1h-1zM1454 901h1v1h-1zM1454 906h1v1h-1zM1454 910h1v1h-1zM1454 915h1v1h-1zM1454 920h1v1h-1zM1454 924h1v1h-1zM1454 929h1v1h-1zM1454 934h1v1h-1zM1454 938h1v1h-1zM1454 943h1v1h-1zM1454 947h1v1h-1zM1454 952h1v1h-1zM1454 957h1v1h-1zM1454 961h1v1h-1zM1454 966h1v1h-1zM1454 971h1v1h-1zM1454 976h1v1h-1zM1454 985h1v1h-1zM1629 58h1v1h-1zM1629 63h1v1h-1zM1629 67h1v1h-1zM1629 72h1v1h-1zM1629 77h1v1h-1zM1629 81h1v1h-1zM1629 86h1v1h-1zM1629 90h1v1h-1zM1629 95h1v1h-1zM1629 100h1v1h-1zM1629 104h1v1h-1zM1629 109h1v1h-1zM1629 114h1v1h-1zM1629 119h1v1h-1zM1629 123h1v1h-1zM1629 128h1v1h-1zM1629 133h1v1h-1zM1629 137h1v1h-1zM1629 142h1v1h-1zM1629 147h1v1h-1zM1629 151h1v1h-1zM1629 156h1v1h-1zM1629 160h1v1h-1zM1629 165h1v1h-1zM1629 170h1v1h-1zM1629 174h1v1h-1zM1629 179h1v1h-1zM1629 183h1v1h-1zM1629 188h1v1h-1zM1629 193h1v1h-1zM1629 197h1v1h-1zM1629 202h1v1h-1zM1629 206h1v1h-1zM1629 211h1v1h-1zM1629 216h1v1h-1zM1629 220h1v1h-1zM1629 225h1v1h-1zM1629 230h1v1h-1zM1629 235h1v1h-1zM1629 239h1v1h-1zM1629 244h1v1h-1zM1629 249h1v1h-1zM1629 253h1v1h-1zM1629 258h1v1h-1zM1629 263h1v1h-1zM1629 267h1v1h-1zM1629 272h1v1h-1zM1629 276h1v1h-1zM1629 281h1v1h-1zM1629 286h1v1h-1zM1629 292h1v1h-1zM1629 297h1v1h-1zM1629 301h1v1h-1zM1629 306h1v1h-1zM1629 311h1v1h-1zM1629 315h1v1h-1zM1629 320h1v1h-1zM1629 324h1v1h-1zM1629 329h1v1h-1zM1629 334h1v1h-1zM1629 338h1v1h-1zM1629 343h1v1h-1zM1629 348h1v1h-1zM1629 353h1v1h-1zM1629 357h1v1h-1zM1629 362h1v1h-1zM1629 367h1v1h-1zM1629 371h1v1h-1zM1629 376h1v1h-1zM1629 381h1v1h-1zM1629 385h1v1h-1zM1629 390h1v1h-1zM1629 394h1v1h-1zM1629 399h1v1h-1zM1629 404h1v1h-1zM1629 408h1v1h-1zM1629 413h1v1h-1zM1629 417h1v1h-1zM1629 422h1v1h-1zM1629 427h1v1h-1zM1629 431h1v1h-1zM1629 436h1v1h-1zM1629 440h1v1h-1zM1629 445h1v1h-1zM1629 450h1v1h-1zM1629 454h1v1h-1zM1629 459h1v1h-1zM1629 464h1v1h-1zM1629 469h1v1h-1zM1629 473h1v1h-1zM1629 478h1v1h-1zM1629 483h1v1h-1zM1629 487h1v1h-1zM1629 492h1v1h-1zM1629 497h1v1h-1zM1629 501h1v1h-1zM1629 506h1v1h-1zM1629 510h1v1h-1zM1629 515h1v1h-1zM1629 520h1v1h-1zM1629 526h1v1h-1zM1629 531h1v1h-1zM1629 535h1v1h-1zM1629 540h1v1h-1zM1629 545h1v1h-1zM1629 549h1v1h-1zM1629 554h1v1h-1zM1629 558h1v1h-1zM1629 563h1v1h-1zM1629 568h1v1h-1zM1629 572h1v1h-1zM1629 577h1v1h-1zM1629 582h1v1h-1zM1629 587h1v1h-1zM1629 591h1v1h-1zM1629 596h1v1h-1zM1629 601h1v1h-1zM1629 605h1v1h-1zM1629 610h1v1h-1zM1629 615h1v1h-1zM1629 619h1v1h-1zM1629 624h1v1h-1zM1629 628h1v1h-1zM1629 633h1v1h-1zM1629 638h1v1h-1zM1629 642h1v1h-1zM1629 647h1v1h-1zM1629 651h1v1h-1zM1629 656h1v1h-1zM1629 661h1v1h-1zM1629 665h1v1h-1zM1629 670h1v1h-1zM1629 674h1v1h-1zM1629 679h1v1h-1zM1629 684h1v1h-1zM1629 688h1v1h-1zM1629 693h1v1h-1zM1629 698h1v1h-1zM1629 703h1v1h-1zM1629 707h1v1h-1zM1629 712h1v1h-1zM1629 717h1v1h-1zM1629 721h1v1h-1zM1629 726h1v1h-1zM1629 731h1v1h-1zM1629 735h1v1h-1zM1629 740h1v1h-1zM1629 744h1v1h-1zM1629 749h1v1h-1zM1629 754h1v1h-1zM1629 761h1v1h-1zM1629 766h1v1h-1zM1629 771h1v1h-1zM1629 775h1v1h-1zM1629 780h1v1h-1zM1629 784h1v1h-1zM1629 789h1v1h-1zM1629 794h1v1h-1zM1629 798h1v1h-1zM1629 803h1v1h-1zM1629 808h1v1h-1zM1629 813h1v1h-1zM1629 817h1v1h-1zM1629 822h1v1h-1zM1629 827h1v1h-1zM1629 831h1v1h-1zM1629 836h1v1h-1zM1629 841h1v1h-1zM1629 845h1v1h-1zM1629 850h1v1h-1zM1629 854h1v1h-1zM1629 859h1v1h-1zM1629 864h1v1h-1zM1629 868h1v1h-1zM1629 873h1v1h-1zM1629 877h1v1h-1zM1629 882h1v1h-1zM1629 887h1v1h-1zM1629 891h1v1h-1zM1629 896h1v1h-1zM1629 901h1v1h-1zM1629 906h1v1h-1zM1629 910h1v1h-1zM1629 915h1v1h-1zM1629 920h1v1h-1zM1629 924h1v1h-1zM1629 929h1v1h-1zM1629 934h1v1h-1zM1629 938h1v1h-1zM1629 943h1v1h-1zM1629 947h1v1h-1zM1629 952h1v1h-1zM1629 957h1v1h-1zM1629 961h1v1h-1zM1629 966h1v1h-1zM1629 971h1v1h-1zM1629 976h1v1h-1zM1629 985h1v1h-1z" fill="#b9b9b9" shape-rendering="crispEdges"/>
 <g stroke="#cfcfcf" stroke-width="1" stroke-dasharray="5 5">
  <line x1="55.5" y1="95" x2="55.5" y2="290"/>
  <line x1="55.5" y1="299" x2="55.5" y2="524"/>
  <line x1="55.5" y1="523" x2="55.5" y2="758" stroke-dashoffset="0"/>
  <line x1="55.5" y1="759" x2="55.5" y2="993"/>
 </g>
 <g stroke="#c8c8c8" stroke-width="1" stroke-dasharray="5 5">
  <line x1="3" y1="267.5" x2="1718" y2="267.5"/>
  <line x1="3" y1="431.5" x2="1718" y2="431.5"/>
  <line x1="3" y1="735.5" x2="1718" y2="735.5"/>
  <line x1="3" y1="961.5" x2="1722" y2="961.5"/>
 </g>
 <g fill="#6f6f6f">
  <rect x="3" y="290" width="1748" height="2"/>
  <rect x="3" y="524" width="1748" height="2"/>
  <rect x="3" y="758" width="1748" height="2"/>
 </g>
</svg>
<div class="al" style="top:73.5px;color:#e6d92e;letter-spacing:-0.6px">40 V</div>
<div class="al" style="top:96.5px;color:#e6d92e">35 V</div>
<div class="al" style="top:120.0px;color:#e6d92e">30 V</div>
<div class="al" style="top:143.0px;color:#e6d92e">25 V</div>
<div class="al" style="top:166.5px;color:#e6d92e">20 V</div>
<div class="al" style="top:189.5px;color:#e6d92e">15 V</div>
<div class="al" style="top:212.5px;color:#e6d92e">10 V</div>
<div class="al" style="top:236.0px;color:#e6d92e">5 V</div>
<div class="al" style="top:259.5px;color:#e6d92e">0 V</div>
<div class="al" style="top:307.5px;color:#8dc63f">1 V</div>
<div class="al" style="top:330.5px;color:#8dc63f">800 mV</div>
<div class="al" style="top:354.0px;color:#8dc63f">600 mV</div>
<div class="al" style="top:377.0px;color:#8dc63f">400 mV</div>
<div class="al" style="top:400.5px;color:#8dc63f">200 mV</div>
<div class="al" style="top:423.5px;color:#8dc63f">0 V</div>
<div class="al" style="top:446.5px;color:#8dc63f">-200 mV</div>
<div class="al" style="top:470.0px;color:#8dc63f">-400 mV</div>
<div class="al" style="top:493.5px;color:#8dc63f">-600 mV</div>
<div class="al" style="top:541.5px;color:#e58b2a">590.735 mT</div>
<div class="al" style="top:564.8px;color:#e58b2a">516.893 mT</div>
<div class="al" style="top:588.0px;color:#e58b2a">443.051 mT</div>
<div class="al" style="top:611.2px;color:#e58b2a">369.210 mT</div>
<div class="al" style="top:634.5px;color:#e58b2a">295.368 mT</div>
<div class="al" style="top:657.8px;color:#e58b2a">221.526 mT</div>
<div class="al" style="top:681.0px;color:#e58b2a">147.684 mT</div>
<div class="al" style="top:704.2px;color:#e58b2a">73.842 mT</div>
<div class="al" style="top:727.5px;color:#e58b2a">0 T</div>
<div class="al" style="top:767.5px;color:#7e3a9c">5.335134 kA</div>
<div class="al" style="top:790.5px;color:#7e3a9c">4.668242 kA</div>
<div class="al" style="top:814.0px;color:#7e3a9c">4.001351 kA</div>
<div class="al" style="top:837.0px;color:#7e3a9c">3.334459 kA</div>
<div class="al" style="top:860.0px;color:#7e3a9c">2.667567 kA</div>
<div class="al" style="top:883.5px;color:#7e3a9c">2.000675 kA</div>
<div class="al" style="top:907.0px;color:#7e3a9c">1.333784 kA</div>
<div class="al" style="top:930.5px;color:#7e3a9c">666.892 A</div>
<div class="al" style="top:953.5px;color:#7e3a9c">0 A</div>
<svg width="1920" height="1080" viewBox="0 0 1920 1080">
 <defs><clipPath id="pc"><rect x="3" y="58" width="1748" height="935"/></clipPath></defs>
 <g clip-path="url(#pc)">
 <!-- waveforms -->
 <path d="M42.5 734.5V734.5H43.5V734.5H44.5V734.5H45.5V734.5H46.5V734.5H47.5V734.5H48.5V734.5H49.5V734.5H50.5V734.5H51.5V734.5H52.5V734.5H53.5V734.5H54.5V734.5V734.5H55.5V734.5H56.5V734.5H57.5V734.5H58.5V733.5H59.5V733.5H60.5V733.5H61.5V733.5V733.5H62.5V732.5H63.5V732.5V732.5H64.5V732.5H65.5V731.5H66.5V731.5H67.5V731.5H68.5V731.5H69.5V730.5H70.5V730.5H71.5V730.5H72.5V730.5H73.5V729.5H74.5V729.5H75.5V729.5H76.5V729.5H77.5V728.5H78.5V728.5H79.5V728.5H80.5V728.5H81.5V727.5H82.5V727.5H83.5V727.5H84.5V727.5H85.5V726.5H86.5V726.5H87.5V726.5H88.5V726.5H89.5V725.5H90.5V725.5H91.5V725.5H92.5V725.5H93.5V724.5H94.5V724.5H95.5V724.5H96.5V724.5H97.5V723.5H98.5V723.5H99.5V723.5H100.5V722.5H101.5V722.5H102.5V722.5H103.5V722.5H104.5V721.5H105.5V721.5H106.5V721.5H107.5V721.5H108.5V720.5H109.5V720.5H110.5V720.5H111.5V720.5H112.5V719.5H113.5V719.5H114.5V719.5H115.5V719.5H116.5V718.5H117.5V718.5H118.5V718.5H119.5V718.5H120.5V717.5H121.5V717.5H122.5V717.5H123.5V717.5H124.5V716.5H125.5V716.5H126.5V716.5H127.5V716.5H128.5V715.5H129.5V715.5H130.5V715.5H131.5V715.5H132.5V714.5H133.5V714.5H134.5V714.5H135.5V714.5H136.5V713.5H137.5V713.5H138.5V713.5H139.5V713.5H140.5V712.5H141.5V712.5H142.5V712.5H143.5V712.5H144.5V711.5H145.5V711.5H146.5V711.5H147.5V711.5H148.5V710.5H149.5V710.5H150.5V710.5H151.5V710.5H152.5V709.5H153.5V709.5H154.5V709.5H155.5V709.5H156.5V708.5H157.5V708.5H158.5V708.5H159.5V707.5H160.5V707.5H161.5V707.5H162.5V707.5H163.5V706.5H164.5V706.5H165.5V706.5H166.5V706.5H167.5V705.5H168.5V705.5H169.5V705.5H170.5V705.5H171.5V704.5H172.5V704.5H173.5V704.5H174.5V704.5H175.5V703.5H176.5V703.5H177.5V703.5H178.5V703.5H179.5V702.5H180.5V702.5H181.5V702.5H182.5V702.5H183.5V701.5H184.5V701.5H185.5V701.5H186.5V701.5H187.5V700.5H188.5V700.5H189.5V700.5H190.5V700.5H191.5V699.5H192.5V699.5H193.5V699.5H194.5V699.5H195.5V698.5H196.5V698.5H197.5V698.5H198.5V698.5H199.5V697.5H200.5V697.5H201.5V697.5H202.5V697.5H203.5V696.5H204.5V696.5H205.5V696.5H206.5V696.5H207.5V695.5H208.5V695.5H209.5V695.5H210.5V695.5H211.5V694.5H212.5V694.5H213.5V694.5H214.5V694.5H215.5V693.5H216.5V693.5H217.5V693.5H218.5V692.5H219.5V692.5H220.5V692.5H221.5V692.5H222.5V691.5H223.5V691.5H224.5V691.5H225.5V691.5H226.5V690.5H227.5V690.5H228.5V690.5H229.5V690.5V690.5H230.5V690.5H231.5V689.5H232.5V689.5H233.5V689.5H234.5V689.5H235.5V688.5H236.5V688.5H237.5V688.5H238.5V688.5H239.5V688.5H240.5V687.5H241.5V687.5H242.5V687.5H243.5V687.5H244.5V686.5H245.5V686.5H246.5V686.5H247.5V686.5H248.5V686.5H249.5V685.5H250.5V685.5H251.5V685.5H252.5V685.5H253.5V684.5H254.5V684.5H255.5V684.5H256.5V684.5H257.5V684.5H258.5V683.5H259.5V683.5H260.5V683.5H261.5V683.5H262.5V682.5H263.5V682.5H264.5V682.5H265.5V682.5H266.5V682.5H267.5V681.5H268.5V681.5H269.5V681.5H270.5V681.5H271.5V680.5H272.5V680.5H273.5V680.5H274.5V680.5H275.5V680.5H276.5V679.5H277.5V679.5H278.5V679.5H279.5V679.5H280.5V678.5H281.5V678.5H282.5V678.5H283.5V678.5H284.5V678.5H285.5V677.5H286.5V677.5H287.5V677.5H288.5V677.5H289.5V676.5H290.5V676.5H291.5V676.5H292.5V676.5H293.5V676.5H294.5V675.5H295.5V675.5H296.5V675.5H297.5V675.5H298.5V675.5H299.5V674.5H300.5V674.5H301.5V674.5H302.5V674.5H303.5V673.5H304.5V673.5H305.5V673.5H306.5V673.5H307.5V673.5H308.5V672.5H309.5V672.5H310.5V672.5H311.5V672.5H312.5V671.5H313.5V671.5H314.5V671.5H315.5V671.5H316.5V671.5H317.5V670.5H318.5V670.5H319.5V670.5H320.5V670.5H321.5V669.5H322.5V669.5H323.5V669.5H324.5V669.5H325.5V669.5H326.5V668.5H327.5V668.5H328.5V668.5H329.5V668.5H330.5V667.5H331.5V667.5H332.5V667.5H333.5V667.5H334.5V667.5H335.5V666.5H336.5V666.5H337.5V666.5H338.5V666.5H339.5V665.5H340.5V665.5H341.5V665.5H342.5V665.5H343.5V665.5H344.5V664.5H345.5V664.5H346.5V664.5H347.5V664.5H348.5V663.5H349.5V663.5H350.5V663.5H351.5V663.5H352.5V663.5H353.5V662.5H354.5V662.5H355.5V662.5H356.5V662.5H357.5V661.5H358.5V661.5H359.5V661.5H360.5V661.5H361.5V661.5H362.5V660.5H363.5V660.5H364.5V660.5H365.5V660.5H366.5V660.5H367.5V659.5H368.5V659.5H369.5V659.5H370.5V659.5H371.5V658.5H372.5V658.5H373.5V658.5H374.5V658.5H375.5V658.5H376.5V657.5H377.5V657.5H378.5V657.5H379.5V657.5H380.5V656.5H381.5V656.5H382.5V656.5H383.5V656.5H384.5V656.5H385.5V655.5H386.5V655.5H387.5V655.5H388.5V655.5H389.5V654.5H390.5V654.5H391.5V654.5H392.5V654.5H393.5V654.5H394.5V653.5H395.5V653.5H396.5V653.5H397.5V653.5H398.5V652.5H399.5V652.5H400.5V652.5H401.5V652.5H402.5V652.5H403.5V651.5H404.5V651.5H405.5V651.5V651.5H406.5V651.5H407.5V651.5H408.5V650.5H409.5V650.5H410.5V650.5H411.5V650.5H412.5V650.5H413.5V649.5H414.5V649.5H415.5V649.5H416.5V649.5H417.5V649.5H418.5V648.5H419.5V648.5H420.5V648.5H421.5V648.5H422.5V648.5H423.5V647.5H424.5V647.5H425.5V647.5H426.5V647.5H427.5V647.5H428.5V647.5H429.5V646.5H430.5V646.5H431.5V646.5H432.5V646.5H433.5V646.5H434.5V645.5H435.5V645.5H436.5V645.5H437.5V645.5H438.5V645.5H439.5V644.5H440.5V644.5H441.5V644.5H442.5V644.5H443.5V644.5H444.5V643.5H445.5V643.5H446.5V643.5H447.5V643.5H448.5V643.5H449.5V642.5H450.5V642.5H451.5V642.5H452.5V642.5H453.5V642.5H454.5V642.5H455.5V641.5H456.5V641.5H457.5V641.5H458.5V641.5H459.5V641.5H460.5V640.5H461.5V640.5H462.5V640.5H463.5V640.5H464.5V640.5H465.5V639.5H466.5V639.5H467.5V639.5H468.5V639.5H469.5V639.5H470.5V638.5H471.5V638.5H472.5V638.5H473.5V638.5H474.5V638.5H475.5V637.5H476.5V637.5H477.5V637.5H478.5V637.5H479.5V637.5H480.5V637.5H481.5V636.5H482.5V636.5H483.5V636.5H484.5V636.5H485.5V636.5H486.5V635.5H487.5V635.5H488.5V635.5H489.5V635.5H490.5V635.5H491.5V634.5H492.5V634.5H493.5V634.5H494.5V634.5H495.5V634.5H496.5V633.5H497.5V633.5H498.5V633.5H499.5V633.5H500.5V633.5H501.5V632.5H502.5V632.5H503.5V632.5H504.5V632.5H505.5V632.5H506.5V632.5H507.5V631.5H508.5V631.5H509.5V631.5H510.5V631.5H511.5V631.5H512.5V630.5H513.5V630.5H514.5V630.5H515.5V630.5H516.5V630.5H517.5V629.5H518.5V629.5H519.5V629.5H520.5V629.5H521.5V629.5H522.5V628.5H523.5V628.5H524.5V628.5H525.5V628.5H526.5V628.5H527.5V627.5H528.5V627.5H529.5V627.5H530.5V627.5H531.5V627.5H532.5V627.5H533.5V626.5H534.5V626.5H535.5V626.5H536.5V626.5H537.5V626.5H538.5V625.5H539.5V625.5H540.5V625.5H541.5V625.5H542.5V625.5H543.5V624.5H544.5V624.5H545.5V624.5H546.5V624.5H547.5V624.5H548.5V623.5H549.5V623.5H550.5V623.5H551.5V623.5H552.5V623.5H553.5V622.5H554.5V622.5H555.5V622.5H556.5V622.5H557.5V622.5H558.5V622.5H559.5V621.5H560.5V621.5H561.5V621.5H562.5V621.5H563.5V621.5H564.5V620.5H565.5V620.5H566.5V620.5H567.5V620.5H568.5V620.5H569.5V619.5H570.5V619.5H571.5V619.5H572.5V619.5H573.5V619.5H574.5V618.5H575.5V618.5H576.5V618.5H577.5V618.5H578.5V618.5H579.5V618.5V617.5H580.5V617.5H581.5V617.5H582.5V617.5H583.5V617.5H584.5V617.5H585.5V617.5H586.5V616.5H587.5V616.5H588.5V616.5H589.5V616.5H590.5V616.5H591.5V616.5H592.5V615.5H593.5V615.5H594.5V615.5H595.5V615.5H596.5V615.5H597.5V615.5H598.5V615.5H599.5V614.5H600.5V614.5H601.5V614.5H602.5V614.5H603.5V614.5H604.5V614.5H605.5V613.5H606.5V613.5H607.5V613.5H608.5V613.5H609.5V613.5H610.5V613.5H611.5V612.5H612.5V612.5H613.5V612.5H614.5V612.5H615.5V612.5H616.5V612.5H617.5V612.5H618.5V611.5H619.5V611.5H620.5V611.5H621.5V611.5H622.5V611.5H623.5V611.5H624.5V610.5H625.5V610.5H626.5V610.5H627.5V610.5H628.5V610.5H629.5V610.5H630.5V610.5H631.5V609.5H632.5V609.5H633.5V609.5H634.5V609.5H635.5V609.5H636.5V609.5H637.5V608.5H638.5V608.5H639.5V608.5H640.5V608.5H641.5V608.5H642.5V608.5H643.5V607.5H644.5V607.5H645.5V607.5H646.5V607.5H647.5V607.5H648.5V607.5H649.5V607.5H650.5V606.5H651.5V606.5H652.5V606.5H653.5V606.5H654.5V606.5H655.5V606.5H656.5V605.5H657.5V605.5H658.5V605.5H659.5V605.5H660.5V605.5H661.5V605.5H662.5V605.5H663.5V604.5H664.5V604.5H665.5V604.5H666.5V604.5H667.5V604.5H668.5V604.5H669.5V603.5H670.5V603.5H671.5V603.5H672.5V603.5H673.5V603.5H674.5V603.5H675.5V603.5H676.5V602.5H677.5V602.5H678.5V602.5H679.5V602.5H680.5V602.5H681.5V602.5H682.5V601.5H683.5V601.5H684.5V601.5H685.5V601.5H686.5V601.5H687.5V601.5H688.5V600.5H689.5V600.5H690.5V600.5H691.5V600.5H692.5V600.5H693.5V600.5H694.5V600.5H695.5V599.5H696.5V599.5H697.5V599.5H698.5V599.5H699.5V599.5H700.5V599.5H701.5V598.5H702.5V598.5H703.5V598.5H704.5V598.5H705.5V598.5H706.5V598.5H707.5V598.5H708.5V597.5H709.5V597.5H710.5V597.5H711.5V597.5H712.5V597.5H713.5V597.5H714.5V596.5H715.5V596.5H716.5V596.5H717.5V596.5H718.5V596.5H719.5V596.5H720.5V596.5H721.5V595.5H722.5V595.5H723.5V595.5H724.5V595.5H725.5V595.5H726.5V595.5H727.5V594.5H728.5V594.5H729.5V594.5H730.5V594.5H731.5V594.5H732.5V594.5H733.5V593.5H734.5V593.5H735.5V593.5H736.5V593.5H737.5V593.5H738.5V593.5H739.5V593.5H740.5V592.5H741.5V592.5H742.5V592.5H743.5V592.5H744.5V592.5H745.5V592.5H746.5V591.5H747.5V591.5H748.5V591.5H749.5V591.5H750.5V591.5H751.5V591.5H752.5V591.5H753.5V590.5H754.5V590.5H755.5V590.5H756.5V590.5V590.5H757.5V590.5H758.5V590.5H759.5V590.5H760.5V589.5H761.5V589.5H762.5V589.5H763.5V589.5H764.5V589.5H765.5V589.5H766.5V589.5H767.5V589.5H768.5V589.5H769.5V588.5H770.5V588.5H771.5V588.5H772.5V588.5H773.5V588.5H774.5V588.5H775.5V588.5H776.5V588.5H777.5V587.5H778.5V587.5H779.5V587.5H780.5V587.5H781.5V587.5H782.5V587.5H783.5V587.5H784.5V587.5H785.5V587.5H786.5V586.5H787.5V586.5H788.5V586.5H789.5V586.5H790.5V586.5H791.5V586.5H792.5V586.5H793.5V586.5H794.5V586.5H795.5V585.5H796.5V585.5H797.5V585.5H798.5V585.5H799.5V585.5H800.5V585.5H801.5V585.5H802.5V585.5H803.5V584.5H804.5V584.5H805.5V584.5H806.5V584.5H807.5V584.5H808.5V584.5H809.5V584.5H810.5V584.5H811.5V584.5H812.5V583.5H813.5V583.5H814.5V583.5H815.5V583.5H816.5V583.5H817.5V583.5H818.5V583.5H819.5V583.5H820.5V582.5H821.5V582.5H822.5V582.5H823.5V582.5H824.5V582.5H825.5V582.5H826.5V582.5H827.5V582.5H828.5V582.5H829.5V581.5H830.5V581.5H831.5V581.5H832.5V581.5H833.5V581.5H834.5V581.5H835.5V581.5H836.5V581.5H837.5V581.5H838.5V580.5H839.5V580.5H840.5V580.5H841.5V580.5H842.5V580.5H843.5V580.5H844.5V580.5H845.5V580.5H846.5V579.5H847.5V579.5H848.5V579.5H849.5V579.5H850.5V579.5H851.5V579.5H852.5V579.5H853.5V579.5H854.5V579.5H855.5V578.5H856.5V578.5H857.5V578.5H858.5V578.5H859.5V578.5H860.5V578.5H861.5V578.5H862.5V578.5H863.5V577.5H864.5V577.5H865.5V577.5H866.5V577.5H867.5V577.5H868.5V577.5H869.5V577.5V577.5H870.5V577.5H871.5V577.5H872.5V577.5H873.5V576.5H874.5V576.5H875.5V576.5H876.5V576.5H877.5V576.5H878.5V576.5H879.5V576.5H880.5V576.5H881.5V576.5H882.5V576.5H883.5V575.5H884.5V575.5H885.5V575.5H886.5V575.5H887.5V575.5H888.5V575.5H889.5V575.5H890.5V575.5H891.5V575.5H892.5V575.5H893.5V575.5H894.5V574.5H895.5V574.5H896.5V574.5H897.5V574.5H898.5V574.5H899.5V574.5H900.5V574.5H901.5V574.5H902.5V574.5H903.5V574.5H904.5V574.5H905.5V573.5H906.5V573.5H907.5V573.5H908.5V573.5H909.5V573.5H910.5V573.5H911.5V573.5H912.5V573.5H913.5V573.5H914.5V573.5H915.5V573.5H916.5V572.5H917.5V572.5H918.5V572.5H919.5V572.5H920.5V572.5H921.5V572.5H922.5V572.5H923.5V572.5H924.5V572.5H925.5V572.5H926.5V572.5H927.5V571.5H928.5V571.5H929.5V571.5H930.5V571.5V571.5H931.5V571.5H932.5V571.5H933.5V571.5H934.5V571.5H935.5V571.5H936.5V571.5H937.5V571.5H938.5V570.5H939.5V570.5H940.5V570.5H941.5V570.5H942.5V570.5H943.5V570.5H944.5V570.5H945.5V570.5H946.5V570.5H947.5V570.5H948.5V570.5H949.5V569.5H950.5V569.5H951.5V569.5H952.5V569.5H953.5V569.5H954.5V569.5H955.5V569.5H956.5V569.5H957.5V569.5H958.5V569.5H959.5V569.5H960.5V569.5H961.5V568.5H962.5V568.5H963.5V568.5H964.5V568.5H965.5V568.5H966.5V568.5H967.5V568.5H968.5V568.5H969.5V568.5H970.5V568.5H971.5V568.5H972.5V567.5H973.5V567.5H974.5V567.5H975.5V567.5H976.5V567.5H977.5V567.5H978.5V567.5H979.5V567.5H980.5V567.5H981.5V567.5H982.5V567.5H983.5V566.5H984.5V566.5H985.5V566.5H986.5V566.5H987.5V566.5H988.5V566.5H989.5V566.5H990.5V566.5H991.5V566.5H992.5V566.5H993.5V566.5H994.5V566.5H995.5V565.5H996.5V565.5H997.5V565.5H998.5V565.5H999.5V565.5H1000.5V565.5H1001.5V565.5H1002.5V565.5H1003.5V565.5H1004.5V565.5H1005.5V565.5H1006.5V564.5H1007.5V564.5H1008.5V564.5V564.5H1009.5V564.5H1010.5V564.5H1011.5V564.5H1012.5V564.5H1013.5V564.5H1014.5V564.5H1015.5V564.5H1016.5V564.5H1017.5V564.5H1018.5V564.5H1019.5V564.5H1020.5V564.5H1021.5V563.5H1022.5V563.5H1023.5V563.5H1024.5V563.5H1025.5V563.5H1026.5V563.5H1027.5V563.5H1028.5V563.5H1029.5V563.5H1030.5V563.5H1031.5V563.5H1032.5V563.5H1033.5V563.5H1034.5V563.5H1035.5V563.5H1036.5V562.5H1037.5V562.5H1038.5V562.5H1039.5V562.5H1040.5V562.5H1041.5V562.5H1042.5V562.5H1043.5V562.5H1044.5V562.5H1045.5V562.5H1046.5V562.5H1047.5V562.5H1048.5V562.5H1049.5V562.5H1050.5V562.5H1051.5V561.5H1052.5V561.5H1053.5V561.5H1054.5V561.5H1055.5V561.5H1056.5V561.5H1057.5V561.5H1058.5V561.5H1059.5V561.5H1060.5V561.5H1061.5V561.5H1062.5V561.5H1063.5V561.5H1064.5V561.5H1065.5V561.5H1066.5V560.5H1067.5V560.5H1068.5V560.5H1069.5V560.5H1070.5V560.5H1071.5V560.5H1072.5V560.5H1073.5V560.5H1074.5V560.5H1075.5V560.5H1076.5V560.5H1077.5V560.5H1078.5V560.5H1079.5V560.5H1080.5V560.5H1081.5V560.5H1082.5V559.5H1083.5V559.5H1084.5V559.5H1085.5V559.5H1086.5V559.5H1087.5V559.5H1088.5V559.5H1089.5V559.5H1090.5V559.5H1091.5V559.5H1092.5V559.5H1093.5V559.5H1094.5V559.5H1095.5V559.5H1096.5V559.5H1097.5V558.5H1098.5V558.5H1099.5V558.5H1100.5V558.5H1101.5V558.5V558.5H1102.5V558.5H1103.5V558.5H1104.5V558.5H1105.5V558.5H1106.5V558.5H1107.5V558.5H1108.5V558.5H1109.5V558.5H1110.5V558.5H1111.5V558.5H1112.5V558.5H1113.5V557.5H1114.5V557.5H1115.5V557.5H1116.5V557.5H1117.5V557.5H1118.5V557.5H1119.5V557.5H1120.5V557.5H1121.5V557.5H1122.5V557.5H1123.5V557.5H1124.5V557.5H1125.5V557.5H1126.5V557.5H1127.5V557.5H1128.5V557.5H1129.5V557.5H1130.5V556.5H1131.5V556.5H1132.5V556.5H1133.5V556.5H1134.5V556.5H1135.5V556.5H1136.5V556.5H1137.5V556.5H1138.5V556.5H1139.5V556.5H1140.5V556.5H1141.5V556.5H1142.5V556.5H1143.5V556.5H1144.5V556.5H1145.5V556.5H1146.5V556.5H1147.5V555.5H1148.5V555.5H1149.5V555.5H1150.5V555.5H1151.5V555.5H1152.5V555.5H1153.5V555.5H1154.5V555.5H1155.5V555.5H1156.5V555.5H1157.5V555.5H1158.5V555.5H1159.5V555.5H1160.5V555.5H1161.5V555.5H1162.5V555.5H1163.5V555.5H1164.5V554.5H1165.5V554.5H1166.5V554.5H1167.5V554.5H1168.5V554.5H1169.5V554.5H1170.5V554.5H1171.5V554.5H1172.5V554.5H1173.5V554.5H1174.5V554.5H1175.5V554.5H1176.5V554.5H1177.5V554.5H1178.5V554.5H1179.5V554.5H1180.5V554.5H1181.5V553.5H1182.5V553.5H1183.5V553.5H1184.5V553.5H1185.5V553.5H1186.5V553.5H1187.5V553.5H1188.5V553.5H1189.5V553.5H1190.5V553.5H1191.5V553.5H1192.5V553.5H1193.5V553.5H1194.5V553.5V553.5H1195.5V553.5H1196.5V553.5H1197.5V553.5H1198.5V553.5H1199.5V553.5H1200.5V553.5H1201.5V553.5H1202.5V552.5H1203.5V552.5H1204.5V552.5H1205.5V552.5H1206.5V552.5H1207.5V552.5H1208.5V552.5H1209.5V552.5H1210.5V552.5H1211.5V552.5H1212.5V552.5H1213.5V552.5H1214.5V552.5H1215.5V552.5H1216.5V552.5H1217.5V552.5H1218.5V552.5H1219.5V552.5H1220.5V552.5H1221.5V552.5H1222.5V552.5H1223.5V552.5H1224.5V552.5H1225.5V552.5H1226.5V552.5H1227.5V552.5H1228.5V552.5H1229.5V552.5H1230.5V552.5H1231.5V552.5H1232.5V552.5H1233.5V552.5H1234.5V552.5H1235.5V552.5H1236.5V552.5H1237.5V552.5H1238.5V552.5H1239.5V552.5H1240.5V552.5H1241.5V552.5H1242.5V551.5H1243.5V551.5H1244.5V551.5H1245.5V551.5H1246.5V551.5H1247.5V551.5H1248.5V551.5H1249.5V551.5H1250.5V551.5H1251.5V551.5H1252.5V551.5H1253.5V551.5H1254.5V551.5H1255.5V551.5H1256.5V551.5H1257.5V551.5H1258.5V551.5H1259.5V551.5H1260.5V551.5H1261.5V551.5H1262.5V551.5H1263.5V551.5H1264.5V551.5H1265.5V551.5H1266.5V551.5H1267.5V551.5H1268.5V551.5H1269.5V551.5H1270.5V551.5H1271.5V551.5H1272.5V551.5H1273.5V551.5H1274.5V551.5H1275.5V551.5H1276.5V551.5H1277.5V551.5H1278.5V551.5H1279.5V551.5H1280.5V551.5H1281.5V551.5H1282.5V551.5H1283.5V550.5H1284.5V550.5H1285.5V550.5H1286.5V550.5H1287.5V550.5V550.5H1288.5V550.5H1289.5V550.5H1290.5V550.5H1291.5V550.5H1292.5V550.5H1293.5V550.5H1294.5V550.5H1295.5V550.5H1296.5V550.5H1297.5V550.5H1298.5V550.5H1299.5V550.5H1300.5V550.5H1301.5V550.5H1302.5V550.5H1303.5V550.5H1304.5V550.5H1305.5V550.5H1306.5V550.5H1307.5V550.5H1308.5V550.5H1309.5V550.5H1310.5V550.5H1311.5V550.5H1312.5V550.5H1313.5V550.5H1314.5V550.5H1315.5V550.5H1316.5V550.5H1317.5V550.5H1318.5V550.5H1319.5V550.5H1320.5V550.5H1321.5V550.5H1322.5V550.5H1323.5V549.5H1324.5V549.5H1325.5V549.5H1326.5V549.5H1327.5V549.5H1328.5V549.5H1329.5V549.5H1330.5V549.5H1331.5V549.5H1332.5V549.5H1333.5V549.5H1334.5V549.5H1335.5V549.5H1336.5V549.5H1337.5V549.5H1338.5V549.5H1339.5V549.5H1340.5V549.5H1341.5V549.5H1342.5V549.5V549.5H1343.5V549.5H1344.5V549.5H1345.5V549.5H1346.5V549.5H1347.5V549.5H1348.5V549.5H1349.5V549.5H1350.5V549.5H1351.5V549.5H1352.5V549.5H1353.5V549.5H1354.5V549.5H1355.5V549.5H1356.5V549.5H1357.5V549.5H1358.5V549.5H1359.5V549.5H1360.5V549.5H1361.5V549.5H1362.5V549.5H1363.5V549.5H1364.5V549.5H1365.5V549.5H1366.5V549.5H1367.5V549.5H1368.5V549.5H1369.5V549.5H1370.5V549.5H1371.5V549.5H1372.5V549.5H1373.5V549.5H1374.5V549.5H1375.5V549.5H1376.5V549.5H1377.5V549.5H1378.5V549.5H1379.5V549.5H1380.5V549.5H1381.5V549.5H1382.5V549.5H1383.5V549.5H1384.5V549.5H1385.5V549.5H1386.5V549.5H1387.5V549.5H1388.5V549.5H1389.5V549.5H1390.5V549.5H1391.5V549.5H1392.5V549.5H1393.5V549.5H1394.5V549.5H1395.5V549.5H1396.5V549.5H1397.5V549.5H1398.5V549.5H1399.5V549.5H1400.5V549.5H1401.5V549.5H1402.5V549.5H1403.5V549.5H1404.5V549.5H1405.5V549.5H1406.5V549.5H1407.5V549.5H1408.5V549.5H1409.5V549.5H1410.5V549.5H1411.5V549.5H1412.5V549.5H1413.5V549.5H1414.5V549.5H1415.5V549.5H1416.5V549.5H1417.5V549.5H1418.5V549.5H1419.5V549.5H1420.5V549.5H1421.5V549.5H1422.5V549.5H1423.5V549.5H1424.5V549.5H1425.5V549.5H1426.5V549.5H1427.5V549.5H1428.5V549.5H1429.5V549.5H1430.5V549.5H1431.5V549.5H1432.5V549.5H1433.5V549.5H1434.5V549.5H1435.5V549.5H1436.5V549.5H1437.5V549.5H1438.5V549.5H1439.5V549.5H1440.5V549.5H1441.5V549.5H1442.5V549.5H1443.5V549.5H1444.5V549.5H1445.5V549.5H1446.5V549.5H1447.5V549.5H1448.5V549.5H1449.5V549.5V549.5H1450.5V549.5H1451.5V549.5H1452.5V549.5H1453.5V549.5H1454.5V549.5H1455.5V549.5H1456.5V549.5H1457.5V549.5H1458.5V549.5H1459.5V549.5H1460.5V549.5H1461.5V549.5H1462.5V549.5H1463.5V549.5H1464.5V549.5H1465.5V549.5H1466.5V549.5H1467.5V549.5H1468.5V549.5H1469.5V549.5H1470.5V550.5H1471.5V550.5H1472.5V550.5H1473.5V550.5H1474.5V550.5H1475.5V550.5H1476.5V550.5H1477.5V550.5H1478.5V550.5H1479.5V550.5H1480.5V550.5H1481.5V550.5H1482.5V550.5H1483.5V550.5H1484.5V550.5H1485.5V550.5H1486.5V550.5H1487.5V550.5H1488.5V550.5H1489.5V550.5H1490.5V550.5H1491.5V550.5H1492.5V550.5H1493.5V550.5H1494.5V550.5H1495.5V550.5H1496.5V550.5H1497.5V550.5H1498.5V550.5H1499.5V550.5H1500.5V550.5H1501.5V550.5H1502.5V550.5H1503.5V550.5H1504.5V550.5H1505.5V550.5H1506.5V550.5H1507.5V550.5H1508.5V550.5H1509.5V550.5H1510.5V550.5H1511.5V551.5H1512.5V551.5H1513.5V551.5H1514.5V551.5H1515.5V551.5H1516.5V551.5H1517.5V551.5H1518.5V551.5H1519.5V551.5H1520.5V551.5H1521.5V551.5H1522.5V551.5H1523.5V551.5H1524.5V551.5H1525.5V551.5H1526.5V551.5H1527.5V551.5H1528.5V551.5H1529.5V551.5H1530.5V551.5H1531.5V551.5H1532.5V551.5H1533.5V551.5H1534.5V551.5H1535.5V551.5H1536.5V551.5H1537.5V551.5H1538.5V551.5H1539.5V551.5H1540.5V551.5H1541.5V551.5H1542.5V551.5H1543.5V551.5H1544.5V551.5H1545.5V551.5H1546.5V551.5H1547.5V551.5H1548.5V551.5H1549.5V551.5H1550.5V551.5H1551.5V551.5H1552.5V552.5H1553.5V552.5H1554.5V552.5H1555.5V552.5H1556.5V552.5H1557.5V552.5H1558.5V552.5H1559.5V552.5H1560.5V552.5H1561.5V552.5H1562.5V552.5H1563.5V552.5H1564.5V552.5H1565.5V552.5V552.5H1566.5V552.5H1567.5V552.5H1568.5V552.5H1569.5V552.5H1570.5V552.5H1571.5V552.5H1572.5V552.5H1573.5V552.5H1574.5V552.5H1575.5V552.5H1576.5V552.5H1577.5V552.5H1578.5V552.5H1579.5V552.5H1580.5V552.5H1581.5V552.5H1582.5V553.5H1583.5V553.5H1584.5V553.5H1585.5V553.5H1586.5V553.5H1587.5V553.5H1588.5V553.5H1589.5V553.5H1590.5V553.5H1591.5V553.5H1592.5V553.5H1593.5V553.5H1594.5V553.5H1595.5V553.5H1596.5V553.5H1597.5V553.5H1598.5V553.5H1599.5V553.5H1600.5V553.5H1601.5V553.5H1602.5V553.5H1603.5V553.5H1604.5V553.5H1605.5V553.5H1606.5V554.5H1607.5V554.5H1608.5V554.5H1609.5V554.5H1610.5V554.5H1611.5V554.5H1612.5V554.5H1613.5V554.5H1614.5V554.5H1615.5V554.5H1616.5V554.5H1617.5V554.5H1618.5V554.5H1619.5V554.5H1620.5V554.5H1621.5V554.5H1622.5V554.5H1623.5V554.5H1624.5V554.5H1625.5V554.5H1626.5V554.5H1627.5V554.5H1628.5V554.5H1629.5V554.5H1630.5V555.5V555.5H1631.5V555.5H1632.5V555.5H1633.5V555.5H1634.5V555.5H1635.5V555.5H1636.5V555.5H1637.5V555.5H1638.5V555.5H1639.5V555.5H1640.5V555.5H1641.5V555.5H1642.5V555.5H1643.5V555.5H1644.5V555.5H1645.5V555.5H1646.5V555.5H1647.5V555.5H1648.5V555.5H1649.5V555.5H1650.5V556.5H1651.5V556.5H1652.5V556.5H1653.5V556.5H1654.5V556.5H1655.5V556.5H1656.5V556.5H1657.5V556.5H1658.5V556.5H1659.5V556.5H1660.5V556.5H1661.5V556.5H1662.5V556.5H1663.5V556.5H1664.5V556.5H1665.5V556.5H1666.5V556.5H1667.5V556.5H1668.5V556.5H1669.5V556.5H1670.5V557.5H1671.5V557.5H1672.5V557.5H1673.5V557.5H1674.5V557.5H1675.5V557.5H1676.5V557.5H1677.5V557.5H1678.5V557.5H1679.5V557.5H1680.5V557.5H1681.5V557.5H1682.5V557.5H1683.5V557.5H1684.5V557.5H1685.5V557.5H1686.5V557.5H1687.5V557.5H1688.5V557.5H1689.5V557.5H1690.5V558.5H1691.5V558.5H1692.5V558.5H1693.5V558.5H1694.5V558.5H1695.5V558.5H1696.5V558.5H1697.5V558.5H1698.5V558.5H1699.5V558.5H1700.5V558.5H1701.5V558.5H1702.5V558.5H1703.5V558.5H1704.5V558.5H1705.5V558.5H1706.5V558.5H1707.5V558.5H1708.5V558.5H1709.5V558.5H1710.5V559.5H1711.5V559.5H1712.5V559.5H1713.5V559.5H1714.5V559.5H1715.5V559.5H1716.5V559.5H1717.5V559.5H1718.5V559.5H1719.5V559.5H1720.5V559.5H1721.5V559.5H1722.5V559.5H1723.5V559.5H1724.5V559.5H1725.5V559.5H1726.5V559.5H1727.5V559.5H1728.5V559.5H1729.5V559.5H1730.5V560.5H1731.5V560.5H1732.5V560.5H1733.5V560.5H1734.5V560.5H1735.5V560.5H1736.5V560.5H1737.5V560.5H1738.5V560.5H1739.5V560.5H1740.5V560.5H1741.5V560.5H1742.5V560.5H1743.5V560.5H1744.5V560.5H1745.5V560.5H1746.5V560.5H1747.5V560.5H1748.5V560.5H1749.5V560.5H1750.5V561.5V561.5H1751.5" fill="none" stroke="#f08a1c" stroke-width="1.2" stroke-linecap="square"/>
 <path d="M42.5 961.5V961.5H43.5V961.5H44.5V961.5H45.5V961.5H46.5V961.5H47.5V961.5H48.5V961.5H49.5V961.5H50.5V961.5H51.5V961.5H52.5V961.5H53.5V961.5H54.5V961.5V961.5H55.5V961.5H56.5V961.5H57.5V961.5H58.5V961.5H59.5V961.5H60.5V961.5H61.5V961.5H62.5V961.5H63.5V961.5H64.5V961.5H65.5V961.5H66.5V961.5H67.5V961.5H68.5V961.5H69.5V961.5H70.5V961.5H71.5V961.5H72.5V961.5H73.5V961.5H74.5V961.5H75.5V961.5H76.5V961.5H77.5V961.5H78.5V961.5H79.5V961.5H80.5V961.5H81.5V961.5V961.5H82.5V958.5V963.5H83.5V966.5V960.5V960.5H84.5V964.5V964.5H85.5V964.5H86.5V963.5V963.5H87.5V963.5H88.5V963.5H89.5V963.5H90.5V963.5H91.5V963.5H92.5V963.5H93.5V963.5H94.5V963.5H95.5V963.5H96.5V963.5H97.5V963.5H98.5V963.5H99.5V963.5V963.5H100.5V963.5H101.5V963.5H102.5V963.5H103.5V963.5H104.5V963.5H105.5V963.5H106.5V963.5H107.5V963.5H108.5V963.5H109.5V963.5H110.5V963.5H111.5V963.5H112.5V963.5H113.5V963.5H114.5V963.5H115.5V963.5H116.5V963.5H117.5V963.5H118.5V963.5H119.5V963.5H120.5V963.5H121.5V963.5H122.5V963.5H123.5V963.5H124.5V963.5H125.5V963.5H126.5V963.5H127.5V963.5H128.5V963.5H129.5V963.5H130.5V963.5H131.5V963.5H132.5V963.5H133.5V963.5H134.5V963.5H135.5V963.5H136.5V963.5H137.5V963.5V963.5H138.5V963.5H139.5V963.5H140.5V963.5H141.5V963.5H142.5V963.5H143.5V963.5H144.5V963.5H145.5V963.5H146.5V963.5H147.5V963.5H148.5V963.5H149.5V963.5H150.5V962.5H151.5V962.5H152.5V962.5H153.5V962.5H154.5V962.5H155.5V962.5H156.5V962.5H157.5V962.5H158.5V962.5H159.5V962.5H160.5V962.5H161.5V962.5H162.5V962.5H163.5V962.5H164.5V962.5H165.5V962.5H166.5V962.5H167.5V962.5H168.5V962.5H169.5V962.5H170.5V962.5H171.5V962.5H172.5V962.5H173.5V962.5H174.5V962.5H175.5V962.5H176.5V962.5H177.5V962.5H178.5V962.5H179.5V962.5H180.5V962.5H181.5V962.5H182.5V962.5H183.5V962.5H184.5V962.5H185.5V962.5H186.5V962.5H187.5V962.5H188.5V962.5H189.5V962.5H190.5V962.5H191.5V962.5H192.5V961.5H193.5V961.5H194.5V961.5H195.5V961.5H196.5V961.5V961.5H197.5V961.5H198.5V960.5H199.5V959.5H200.5V958.5H201.5V957.5H202.5V956.5H203.5V956.5H204.5V955.5H205.5V954.5H206.5V953.5H207.5V952.5H208.5V952.5V952.5H209.5V951.5H210.5V950.5H211.5V950.5H212.5V949.5H213.5V949.5H214.5V948.5H215.5V948.5H216.5V947.5H217.5V947.5H218.5V946.5H219.5V945.5H220.5V945.5H221.5V944.5H222.5V944.5H223.5V943.5H224.5V943.5H225.5V942.5H226.5V942.5H227.5V941.5H228.5V940.5H229.5V940.5V940.5H230.5V939.5H231.5V939.5H232.5V938.5H233.5V938.5H234.5V937.5H235.5V937.5H236.5V936.5H237.5V935.5H238.5V935.5H239.5V934.5H240.5V934.5H241.5V933.5H242.5V933.5H243.5V932.5H244.5V932.5H245.5V931.5H246.5V930.5H247.5V930.5H248.5V929.5H249.5V929.5H250.5V928.5H251.5V928.5V928.5H252.5V927.5H253.5V927.5H254.5V927.5H255.5V926.5H256.5V926.5H257.5V925.5H258.5V925.5H259.5V925.5H260.5V924.5H261.5V924.5H262.5V923.5H263.5V923.5H264.5V923.5H265.5V922.5H266.5V922.5H267.5V921.5H268.5V921.5H269.5V921.5H270.5V920.5H271.5V920.5H272.5V919.5H273.5V919.5H274.5V919.5V919.5H275.5V918.5H276.5V917.5H277.5V916.5H278.5V916.5H279.5V915.5V915.5H280.5V915.5H281.5V915.5H282.5V915.5H283.5V914.5H284.5V914.5H285.5V914.5H286.5V914.5V914.5H287.5V913.5H288.5V912.5H289.5V911.5V910.5H290.5V911.5H291.5V910.5H292.5V911.5H293.5V911.5H294.5V911.5V909.5H295.5V908.5H296.5V909.5H297.5V907.5H298.5V906.5H299.5V907.5H300.5V905.5H301.5V905.5V905.5H302.5V904.5H303.5V904.5H304.5V904.5V903.5H305.5V904.5H306.5V904.5V905.5H307.5V905.5H308.5V906.5H309.5V906.5V904.5H310.5V901.5H311.5V900.5V901.5H312.5V901.5H313.5V901.5V900.5H314.5V898.5H315.5V899.5H316.5V897.5H317.5V896.5V897.5H318.5V898.5H319.5V897.5V898.5H320.5V898.5H321.5V897.5H322.5V897.5H323.5V897.5V896.5H324.5V896.5H325.5V895.5V896.5H326.5V894.5H327.5V894.5H328.5V894.5H329.5V895.5V895.5H330.5V893.5V893.5H331.5V893.5H332.5V892.5H333.5V893.5H334.5V893.5V894.5H335.5V895.5V894.5H336.5V893.5H337.5V891.5H338.5V891.5H339.5V890.5V890.5H340.5V891.5H341.5V891.5H342.5V891.5V891.5H343.5V889.5H344.5V887.5V886.5H345.5V889.5H346.5V889.5V889.5H347.5V888.5H348.5V887.5H349.5V886.5V895.5V896.5H350.5V896.5V895.5H351.5V890.5H352.5V887.5V887.5H353.5V886.5H354.5V886.5H355.5V887.5V887.5H356.5V886.5H357.5V883.5H358.5V883.5H359.5V882.5V882.5H360.5V882.5H361.5V883.5V882.5H362.5V882.5H363.5V881.5V882.5H364.5V882.5V881.5H365.5V881.5H366.5V878.5H367.5V879.5V879.5H368.5V878.5H369.5V879.5H370.5V880.5H371.5V879.5H372.5V879.5V879.5H373.5V877.5H374.5V877.5V877.5H375.5V879.5H376.5V880.5V878.5H377.5V877.5H378.5V877.5H379.5V876.5H380.5V874.5H381.5V874.5V874.5H382.5V878.5H383.5V878.5V876.5H384.5V875.5H385.5V873.5H386.5V871.5V871.5H387.5V871.5H388.5V872.5H389.5V872.5V871.5H390.5V870.5H391.5V870.5H392.5V869.5V870.5H393.5V871.5H394.5V871.5V871.5H395.5V870.5H396.5V870.5H397.5V869.5H398.5V869.5V869.5H399.5V872.5H400.5V871.5H401.5V872.5V872.5H402.5V870.5H403.5V871.5H404.5V870.5V870.5H405.5V867.5H406.5V867.5H407.5V865.5H408.5V864.5V863.5H409.5V864.5H410.5V864.5H411.5V864.5H412.5V864.5V863.5H413.5V863.5H414.5V862.5V862.5H415.5V862.5H416.5V862.5H417.5V864.5H418.5V865.5H419.5V864.5H420.5V865.5V865.5H421.5V864.5H422.5V863.5H423.5V862.5H424.5V862.5V861.5H425.5V861.5H426.5V862.5H427.5V861.5H428.5V861.5H429.5V861.5V860.5H430.5V857.5H431.5V857.5V857.5H432.5V858.5H433.5V858.5H434.5V859.5V858.5H435.5V859.5H436.5V858.5H437.5V857.5H438.5V857.5H439.5V857.5V858.5H440.5V857.5H441.5V858.5H442.5V858.5H443.5V859.5V859.5H444.5V858.5H445.5V858.5H446.5V856.5H447.5V855.5H448.5V855.5H449.5V855.5H450.5V853.5H451.5V852.5H452.5V851.5H453.5V851.5H454.5V849.5H455.5V850.5H456.5V849.5V850.5H457.5V849.5H458.5V850.5H459.5V852.5H460.5V852.5H461.5V853.5H462.5V853.5H463.5V853.5H464.5V854.5H465.5V856.5H466.5V855.5V855.5H467.5V854.5H468.5V853.5H469.5V852.5H470.5V851.5H471.5V851.5V858.5H472.5V860.5V857.5H473.5V854.5H474.5V853.5H475.5V850.5V850.5H476.5V850.5H477.5V849.5H478.5V850.5H479.5V849.5H480.5V847.5H481.5V848.5H482.5V848.5H483.5V847.5H484.5V847.5H485.5V846.5H486.5V846.5H487.5V845.5H488.5V844.5H489.5V845.5V846.5H490.5V846.5H491.5V848.5H492.5V847.5H493.5V850.5H494.5V850.5H495.5V851.5H496.5V851.5V852.5H497.5V851.5H498.5V850.5H499.5V849.5H500.5V850.5H501.5V848.5H502.5V848.5H503.5V848.5H504.5V848.5H505.5V847.5V847.5H506.5V849.5H507.5V848.5H508.5V848.5H509.5V848.5H510.5V850.5H511.5V849.5H512.5V850.5H513.5V850.5H514.5V850.5H515.5V851.5H516.5V851.5V852.5H517.5V850.5H518.5V850.5H519.5V850.5H520.5V849.5H521.5V848.5V849.5H522.5V847.5H523.5V848.5H524.5V849.5H525.5V847.5H526.5V848.5H527.5V848.5H528.5V849.5H529.5V848.5H530.5V849.5V848.5H531.5V849.5H532.5V847.5H533.5V846.5H534.5V846.5H535.5V846.5H536.5V845.5H537.5V847.5H538.5V846.5H539.5V844.5H540.5V844.5H541.5V844.5H542.5V843.5H543.5V843.5H544.5V843.5V843.5H545.5V843.5H546.5V843.5H547.5V843.5H548.5V843.5H549.5V843.5H550.5V844.5H551.5V844.5H552.5V844.5H553.5V843.5H554.5V843.5H555.5V844.5H556.5V845.5H557.5V845.5H558.5V844.5H559.5V845.5H560.5V845.5H561.5V845.5H562.5V845.5V845.5H563.5V844.5H564.5V844.5H565.5V843.5H566.5V843.5H567.5V841.5H568.5V840.5H569.5V840.5H570.5V840.5H571.5V839.5V838.5H572.5V839.5H573.5V839.5H574.5V840.5H575.5V840.5H576.5V839.5H577.5V840.5H578.5V840.5H579.5V839.5H580.5V840.5H581.5V839.5H582.5V840.5H583.5V840.5H584.5V841.5H585.5V841.5H586.5V841.5H587.5V841.5H588.5V840.5H589.5V840.5H590.5V841.5V840.5H591.5V839.5H592.5V838.5H593.5V839.5H594.5V837.5H595.5V837.5H596.5V836.5H597.5V837.5H598.5V835.5H599.5V836.5V835.5H600.5V836.5H601.5V835.5H602.5V836.5H603.5V836.5H604.5V837.5H605.5V837.5H606.5V836.5H607.5V837.5H608.5V835.5H609.5V837.5H610.5V836.5H611.5V837.5H612.5V836.5H613.5V836.5V837.5H614.5V836.5H615.5V834.5H616.5V834.5H617.5V834.5H618.5V834.5H619.5V832.5H620.5V833.5V832.5H621.5V833.5H622.5V834.5H623.5V834.5H624.5V834.5H625.5V834.5H626.5V834.5H627.5V835.5H628.5V835.5H629.5V835.5H630.5V836.5H631.5V836.5V837.5H632.5V835.5H633.5V835.5H634.5V833.5H635.5V834.5H636.5V834.5H637.5V833.5H638.5V832.5H639.5V831.5H640.5V831.5V831.5H641.5V832.5H642.5V830.5H643.5V830.5H644.5V832.5H645.5V832.5H646.5V831.5H647.5V831.5H648.5V832.5H649.5V831.5H650.5V831.5H651.5V831.5H652.5V832.5H653.5V831.5H654.5V832.5V833.5H655.5V838.5V837.5H656.5V835.5H657.5V830.5H658.5V828.5H659.5V827.5V826.5H660.5V827.5H661.5V826.5H662.5V825.5H663.5V825.5H664.5V824.5H665.5V825.5H666.5V825.5H667.5V824.5H668.5V824.5H669.5V824.5H670.5V824.5V825.5H671.5V823.5H672.5V825.5H673.5V824.5H674.5V824.5H675.5V823.5H676.5V824.5H677.5V824.5H678.5V823.5H679.5V823.5H680.5V823.5H681.5V824.5H682.5V823.5H683.5V823.5H684.5V823.5V824.5H685.5V822.5H686.5V822.5H687.5V822.5H688.5V822.5H689.5V822.5H690.5V823.5H691.5V822.5H692.5V821.5H693.5V821.5H694.5V821.5H695.5V820.5H696.5V821.5H697.5V821.5H698.5V821.5H699.5V820.5H700.5V821.5H701.5V820.5H702.5V820.5H703.5V820.5H704.5V820.5V819.5H705.5V819.5H706.5V820.5H707.5V819.5H708.5V819.5H709.5V819.5H710.5V819.5H711.5V818.5H712.5V818.5H713.5V819.5H714.5V819.5H715.5V818.5H716.5V819.5H717.5V819.5H718.5V818.5H719.5V818.5H720.5V818.5V817.5H721.5V817.5H722.5V817.5H723.5V815.5H724.5V815.5H725.5V814.5V815.5H726.5V813.5H727.5V815.5H728.5V813.5H729.5V814.5H730.5V814.5H731.5V813.5H732.5V814.5H733.5V813.5H734.5V814.5H735.5V812.5H736.5V813.5H737.5V813.5H738.5V813.5H739.5V812.5H740.5V811.5H741.5V812.5H742.5V812.5H743.5V812.5H744.5V812.5H745.5V812.5H746.5V811.5H747.5V811.5H748.5V811.5H749.5V810.5H750.5V811.5V812.5H751.5V811.5H752.5V810.5H753.5V811.5H754.5V810.5H755.5V810.5H756.5V810.5H757.5V810.5H758.5V810.5H759.5V810.5V810.5H760.5V807.5H761.5V804.5H762.5V804.5V803.5H763.5V803.5H764.5V804.5H765.5V804.5H766.5V804.5H767.5V804.5H768.5V803.5H769.5V803.5H770.5V803.5H771.5V804.5H772.5V803.5H773.5V804.5H774.5V803.5H775.5V804.5H776.5V803.5H777.5V803.5H778.5V803.5V803.5H779.5V803.5H780.5V804.5H781.5V803.5H782.5V804.5H783.5V802.5H784.5V802.5H785.5V802.5H786.5V802.5H787.5V803.5H788.5V803.5H789.5V802.5H790.5V802.5H791.5V802.5H792.5V802.5H793.5V802.5H794.5V802.5H795.5V802.5H796.5V802.5V801.5H797.5V801.5H798.5V801.5H799.5V801.5H800.5V801.5H801.5V800.5H802.5V800.5H803.5V801.5H804.5V800.5H805.5V801.5H806.5V801.5H807.5V801.5H808.5V800.5H809.5V800.5H810.5V800.5H811.5V800.5H812.5V801.5H813.5V800.5H814.5V799.5H815.5V800.5H816.5V800.5H817.5V800.5H818.5V800.5H819.5V799.5V798.5H820.5V800.5H821.5V799.5H822.5V799.5H823.5V799.5H824.5V799.5H825.5V798.5H826.5V799.5H827.5V798.5H828.5V799.5H829.5V799.5H830.5V798.5H831.5V798.5H832.5V799.5H833.5V799.5H834.5V797.5H835.5V799.5H836.5V798.5H837.5V797.5H838.5V797.5H839.5V797.5H840.5V797.5H841.5V798.5H842.5V798.5V798.5H843.5V797.5H844.5V798.5H845.5V798.5H846.5V797.5H847.5V798.5H848.5V798.5H849.5V798.5H850.5V798.5H851.5V798.5H852.5V797.5H853.5V798.5H854.5V798.5H855.5V798.5H856.5V797.5H857.5V798.5H858.5V797.5H859.5V797.5V796.5H860.5V796.5H861.5V796.5H862.5V796.5H863.5V796.5H864.5V797.5H865.5V797.5H866.5V796.5H867.5V796.5H868.5V796.5H869.5V796.5H870.5V796.5H871.5V796.5V796.5H872.5V795.5H873.5V794.5H874.5V795.5H875.5V794.5H876.5V793.5H877.5V793.5H878.5V793.5V793.5H879.5V793.5H880.5V793.5H881.5V792.5H882.5V793.5H883.5V794.5H884.5V793.5H885.5V793.5H886.5V793.5H887.5V793.5H888.5V793.5H889.5V794.5V793.5H890.5V793.5H891.5V792.5H892.5V792.5H893.5V792.5H894.5V792.5H895.5V791.5H896.5V790.5H897.5V791.5H898.5V790.5H899.5V791.5H900.5V789.5H901.5V790.5V790.5H902.5V790.5H903.5V789.5H904.5V791.5H905.5V790.5H906.5V789.5H907.5V790.5H908.5V790.5H909.5V791.5H910.5V790.5H911.5V791.5V790.5H912.5V789.5H913.5V790.5H914.5V788.5H915.5V789.5H916.5V788.5H917.5V788.5H918.5V787.5H919.5V787.5V786.5H920.5V786.5H921.5V787.5H922.5V786.5H923.5V786.5H924.5V785.5H925.5V786.5H926.5V786.5H927.5V786.5H928.5V784.5H929.5V784.5H930.5V784.5H931.5V784.5H932.5V784.5H933.5V783.5H934.5V784.5H935.5V785.5H936.5V783.5H937.5V784.5V785.5H938.5V784.5H939.5V785.5H940.5V785.5H941.5V786.5H942.5V784.5H943.5V785.5H944.5V786.5H945.5V787.5H946.5V785.5H947.5V786.5V786.5H948.5V787.5H949.5V785.5H950.5V786.5H951.5V786.5H952.5V786.5H953.5V787.5H954.5V785.5H955.5V786.5H956.5V786.5H957.5V787.5H958.5V786.5H959.5V787.5H960.5V786.5H961.5V786.5H962.5V785.5H963.5V787.5H964.5V786.5H965.5V786.5H966.5V785.5H967.5V786.5H968.5V786.5H969.5V786.5V786.5H970.5V786.5H971.5V786.5H972.5V786.5H973.5V787.5H974.5V786.5H975.5V787.5H976.5V788.5H977.5V788.5H978.5V787.5H979.5V787.5H980.5V789.5H981.5V789.5H982.5V789.5H983.5V790.5H984.5V789.5H985.5V790.5H986.5V790.5H987.5V789.5H988.5V790.5H989.5V789.5H990.5V790.5H991.5V791.5H992.5V791.5V790.5H993.5V791.5H994.5V790.5H995.5V790.5H996.5V791.5H997.5V790.5H998.5V790.5H999.5V790.5H1000.5V791.5H1001.5V791.5H1002.5V790.5H1003.5V791.5H1004.5V792.5H1005.5V791.5H1006.5V791.5V791.5H1007.5V791.5H1008.5V792.5H1009.5V792.5H1010.5V793.5H1011.5V793.5H1012.5V792.5H1013.5V792.5H1014.5V793.5H1015.5V794.5H1016.5V793.5H1017.5V793.5H1018.5V795.5H1019.5V794.5H1020.5V796.5H1021.5V794.5H1022.5V795.5H1023.5V795.5H1024.5V797.5H1025.5V796.5H1026.5V797.5H1027.5V797.5H1028.5V798.5H1029.5V797.5V797.5H1030.5V798.5H1031.5V798.5H1032.5V797.5H1033.5V799.5H1034.5V799.5H1035.5V800.5H1036.5V799.5H1037.5V800.5H1038.5V800.5H1039.5V801.5H1040.5V800.5H1041.5V801.5H1042.5V802.5H1043.5V801.5H1044.5V803.5H1045.5V803.5H1046.5V803.5H1047.5V804.5H1048.5V804.5H1049.5V804.5H1050.5V805.5H1051.5V806.5H1052.5V805.5H1053.5V806.5H1054.5V806.5V805.5H1055.5V806.5H1056.5V806.5H1057.5V808.5H1058.5V808.5H1059.5V808.5H1060.5V808.5H1061.5V808.5H1062.5V809.5H1063.5V808.5H1064.5V808.5H1065.5V809.5H1066.5V810.5H1067.5V810.5H1068.5V809.5H1069.5V810.5H1070.5V810.5V809.5H1071.5V811.5H1072.5V810.5H1073.5V809.5H1074.5V810.5H1075.5V809.5H1076.5V809.5H1077.5V810.5H1078.5V809.5H1079.5V809.5H1080.5V809.5H1081.5V808.5H1082.5V810.5H1083.5V809.5H1084.5V809.5H1085.5V809.5H1086.5V809.5H1087.5V809.5H1088.5V808.5H1089.5V809.5V808.5H1090.5V808.5H1091.5V808.5H1092.5V808.5H1093.5V808.5H1094.5V809.5H1095.5V808.5H1096.5V809.5H1097.5V809.5H1098.5V808.5H1099.5V807.5H1100.5V807.5H1101.5V807.5H1102.5V807.5H1103.5V807.5H1104.5V807.5H1105.5V806.5H1106.5V807.5H1107.5V806.5H1108.5V806.5H1109.5V807.5H1110.5V807.5H1111.5V806.5H1112.5V805.5H1113.5V806.5H1114.5V805.5H1115.5V805.5H1116.5V805.5H1117.5V805.5H1118.5V805.5V804.5H1119.5V804.5H1120.5V804.5H1121.5V805.5H1122.5V805.5H1123.5V806.5H1124.5V805.5H1125.5V806.5H1126.5V804.5H1127.5V804.5H1128.5V804.5H1129.5V804.5H1130.5V804.5H1131.5V804.5H1132.5V805.5H1133.5V804.5H1134.5V804.5H1135.5V804.5H1136.5V805.5H1137.5V804.5H1138.5V804.5H1139.5V803.5H1140.5V804.5H1141.5V804.5H1142.5V805.5H1143.5V805.5H1144.5V805.5H1145.5V804.5H1146.5V803.5H1147.5V805.5H1148.5V805.5H1149.5V804.5H1150.5V804.5V805.5H1151.5V804.5H1152.5V804.5H1153.5V804.5H1154.5V803.5H1155.5V805.5H1156.5V806.5H1157.5V806.5H1158.5V805.5H1159.5V805.5H1160.5V806.5H1161.5V806.5H1162.5V806.5H1163.5V806.5H1164.5V806.5H1165.5V805.5H1166.5V805.5H1167.5V807.5H1168.5V807.5H1169.5V807.5H1170.5V806.5H1171.5V806.5H1172.5V807.5H1173.5V808.5H1174.5V807.5H1175.5V808.5H1176.5V807.5H1177.5V807.5H1178.5V808.5H1179.5V808.5H1180.5V808.5V809.5H1181.5V809.5H1182.5V810.5H1183.5V810.5H1184.5V810.5H1185.5V811.5V811.5H1186.5V810.5H1187.5V810.5H1188.5V809.5H1189.5V809.5V809.5H1190.5V810.5H1191.5V808.5H1192.5V810.5H1193.5V809.5H1194.5V810.5H1195.5V810.5H1196.5V811.5H1197.5V810.5H1198.5V810.5H1199.5V811.5H1200.5V810.5H1201.5V810.5H1202.5V811.5H1203.5V811.5V810.5H1204.5V811.5H1205.5V812.5H1206.5V812.5H1207.5V811.5H1208.5V812.5H1209.5V812.5H1210.5V811.5H1211.5V812.5H1212.5V814.5H1213.5V812.5H1214.5V812.5H1215.5V813.5H1216.5V813.5H1217.5V814.5V814.5H1218.5V814.5H1219.5V815.5H1220.5V815.5H1221.5V816.5H1222.5V814.5H1223.5V815.5H1224.5V817.5H1225.5V815.5H1226.5V816.5H1227.5V817.5H1228.5V817.5H1229.5V818.5H1230.5V817.5H1231.5V818.5V818.5H1232.5V820.5H1233.5V819.5H1234.5V821.5H1235.5V820.5H1236.5V822.5H1237.5V822.5H1238.5V823.5H1239.5V822.5H1240.5V823.5V826.5H1241.5V829.5H1242.5V830.5V880.5V900.5V900.5H1243.5V911.5H1244.5V922.5H1245.5V925.5V928.5H1246.5V931.5H1247.5V935.5H1248.5V938.5H1249.5V942.5H1250.5V945.5V945.5H1251.5V947.5H1252.5V948.5H1253.5V950.5H1254.5V951.5H1255.5V953.5H1256.5V954.5H1257.5V956.5H1258.5V957.5H1259.5V958.5V958.5H1260.5V959.5H1261.5V959.5H1262.5V960.5H1263.5V960.5H1264.5V961.5H1265.5V961.5H1266.5V962.5H1267.5V962.5H1268.5V963.5H1269.5V963.5H1270.5V963.5V963.5H1271.5V964.5H1272.5V964.5H1273.5V964.5H1274.5V964.5H1275.5V964.5H1276.5V964.5H1277.5V964.5H1278.5V965.5H1279.5V965.5H1280.5V965.5H1281.5V965.5H1282.5V965.5H1283.5V965.5H1284.5V965.5H1285.5V966.5H1286.5V966.5H1287.5V966.5H1288.5V966.5H1289.5V966.5H1290.5V966.5V966.5H1291.5V966.5H1292.5V966.5H1293.5V966.5H1294.5V966.5H1295.5V966.5H1296.5V966.5H1297.5V966.5H1298.5V966.5H1299.5V966.5H1300.5V966.5H1301.5V966.5H1302.5V966.5H1303.5V966.5H1304.5V966.5H1305.5V966.5H1306.5V966.5H1307.5V966.5H1308.5V966.5H1309.5V966.5H1310.5V966.5H1311.5V966.5H1312.5V966.5H1313.5V966.5H1314.5V966.5H1315.5V966.5H1316.5V966.5H1317.5V966.5H1318.5V966.5H1319.5V966.5H1320.5V966.5H1321.5V966.5H1322.5V966.5H1323.5V966.5H1324.5V966.5H1325.5V966.5H1326.5V966.5H1327.5V966.5H1328.5V966.5H1329.5V966.5H1330.5V966.5H1331.5V966.5H1332.5V966.5H1333.5V966.5H1334.5V966.5H1335.5V966.5H1336.5V966.5H1337.5V966.5H1338.5V966.5H1339.5V966.5H1340.5V966.5H1341.5V966.5H1342.5V966.5H1343.5V966.5H1344.5V966.5H1345.5V966.5H1346.5V966.5H1347.5V966.5H1348.5V966.5H1349.5V966.5H1350.5V966.5H1351.5V966.5H1352.5V966.5H1353.5V966.5H1354.5V966.5H1355.5V966.5H1356.5V966.5H1357.5V966.5H1358.5V966.5H1359.5V966.5H1360.5V966.5H1361.5V966.5H1362.5V966.5H1363.5V966.5H1364.5V966.5H1365.5V966.5H1366.5V966.5H1367.5V966.5H1368.5V966.5H1369.5V966.5H1370.5V966.5H1371.5V966.5H1372.5V966.5H1373.5V966.5H1374.5V966.5H1375.5V966.5H1376.5V965.5H1377.5V965.5H1378.5V965.5H1379.5V965.5H1380.5V965.5H1381.5V965.5H1382.5V965.5H1383.5V965.5H1384.5V965.5H1385.5V965.5H1386.5V965.5H1387.5V965.5H1388.5V965.5V965.5H1389.5V965.5H1390.5V965.5H1391.5V965.5H1392.5V965.5H1393.5V965.5H1394.5V965.5H1395.5V965.5H1396.5V965.5H1397.5V965.5H1398.5V965.5H1399.5V965.5H1400.5V965.5H1401.5V965.5H1402.5V965.5H1403.5V965.5H1404.5V965.5H1405.5V965.5H1406.5V965.5H1407.5V965.5H1408.5V965.5H1409.5V965.5H1410.5V965.5H1411.5V966.5H1412.5V966.5H1413.5V966.5H1414.5V966.5H1415.5V966.5H1416.5V966.5H1417.5V966.5H1418.5V966.5H1419.5V966.5H1420.5V966.5H1421.5V966.5H1422.5V966.5H1423.5V966.5H1424.5V966.5H1425.5V966.5H1426.5V966.5H1427.5V966.5H1428.5V966.5H1429.5V966.5H1430.5V966.5H1431.5V966.5H1432.5V966.5H1433.5V966.5H1434.5V966.5H1435.5V966.5H1436.5V966.5H1437.5V966.5H1438.5V966.5H1439.5V966.5H1440.5V966.5H1441.5V966.5H1442.5V966.5H1443.5V966.5H1444.5V966.5H1445.5V966.5H1446.5V966.5H1447.5V966.5H1448.5V966.5H1449.5V966.5H1450.5V966.5H1451.5V966.5H1452.5V966.5H1453.5V966.5H1454.5V966.5H1455.5V966.5H1456.5V966.5H1457.5V966.5H1458.5V966.5H1459.5V966.5H1460.5V966.5H1461.5V966.5H1462.5V966.5H1463.5V966.5H1464.5V966.5H1465.5V966.5H1466.5V966.5H1467.5V966.5H1468.5V966.5H1469.5V966.5H1470.5V966.5H1471.5V966.5H1472.5V966.5H1473.5V966.5H1474.5V966.5H1475.5V966.5H1476.5V966.5H1477.5V966.5H1478.5V966.5H1479.5V966.5H1480.5V966.5H1481.5V966.5H1482.5V966.5H1483.5V966.5H1484.5V966.5H1485.5V966.5H1486.5V966.5H1487.5V966.5H1488.5V966.5H1489.5V966.5H1490.5V966.5H1491.5V966.5H1492.5V966.5H1493.5V966.5H1494.5V966.5H1495.5V966.5H1496.5V966.5H1497.5V966.5H1498.5V966.5H1499.5V966.5H1500.5V966.5H1501.5V966.5V966.5H1502.5V966.5H1503.5V966.5H1504.5V966.5H1505.5V966.5H1506.5V966.5H1507.5V966.5H1508.5V966.5H1509.5V966.5H1510.5V966.5H1511.5V966.5H1512.5V966.5H1513.5V966.5H1514.5V966.5H1515.5V966.5H1516.5V966.5H1517.5V966.5H1518.5V966.5H1519.5V966.5H1520.5V966.5H1521.5V966.5H1522.5V966.5H1523.5V966.5H1524.5V966.5H1525.5V966.5H1526.5V966.5H1527.5V966.5H1528.5V966.5H1529.5V966.5H1530.5V966.5H1531.5V966.5H1532.5V966.5H1533.5V966.5H1534.5V966.5H1535.5V966.5H1536.5V966.5H1537.5V966.5H1538.5V966.5H1539.5V966.5H1540.5V966.5H1541.5V966.5H1542.5V966.5H1543.5V966.5H1544.5V966.5H1545.5V966.5H1546.5V966.5H1547.5V966.5H1548.5V966.5H1549.5V966.5H1550.5V966.5H1551.5V966.5H1552.5V966.5H1553.5V966.5H1554.5V966.5H1555.5V966.5H1556.5V966.5H1557.5V966.5H1558.5V966.5H1559.5V966.5H1560.5V966.5H1561.5V966.5H1562.5V966.5H1563.5V966.5H1564.5V966.5H1565.5V966.5H1566.5V966.5H1567.5V966.5H1568.5V966.5H1569.5V966.5H1570.5V966.5H1571.5V966.5H1572.5V966.5H1573.5V966.5H1574.5V966.5H1575.5V966.5H1576.5V966.5H1577.5V966.5H1578.5V966.5H1579.5V966.5H1580.5V966.5H1581.5V966.5H1582.5V966.5H1583.5V966.5H1584.5V966.5H1585.5V966.5H1586.5V966.5H1587.5V966.5H1588.5V966.5H1589.5V966.5H1590.5V966.5H1591.5V966.5H1592.5V966.5H1593.5V966.5H1594.5V966.5H1595.5V966.5H1596.5V966.5H1597.5V966.5H1598.5V966.5H1599.5V966.5H1600.5V966.5H1601.5V966.5H1602.5V966.5H1603.5V966.5H1604.5V966.5H1605.5V966.5H1606.5V966.5H1607.5V966.5H1608.5V966.5H1609.5V966.5H1610.5V966.5H1611.5V966.5H1612.5V966.5H1613.5V966.5H1614.5V966.5H1615.5V966.5H1616.5V966.5H1617.5V966.5H1618.5V966.5H1619.5V966.5H1620.5V966.5H1621.5V966.5H1622.5V966.5H1623.5V966.5H1624.5V966.5H1625.5V966.5H1626.5V966.5H1627.5V966.5H1628.5V966.5H1629.5V966.5H1630.5V966.5H1631.5V966.5H1632.5V966.5H1633.5V966.5H1634.5V966.5H1635.5V966.5H1636.5V966.5H1637.5V966.5H1638.5V966.5H1639.5V966.5H1640.5V966.5H1641.5V966.5H1642.5V966.5H1643.5V966.5H1644.5V966.5H1645.5V966.5H1646.5V966.5H1647.5V966.5H1648.5V966.5H1649.5V966.5H1650.5V966.5H1651.5V966.5H1652.5V966.5H1653.5V966.5H1654.5V966.5H1655.5V966.5H1656.5V966.5H1657.5V966.5H1658.5V966.5H1659.5V966.5H1660.5V966.5H1661.5V966.5H1662.5V966.5H1663.5V966.5H1664.5V966.5H1665.5V966.5H1666.5V966.5H1667.5V966.5H1668.5V966.5H1669.5V966.5H1670.5V966.5H1671.5V966.5H1672.5V966.5H1673.5V966.5H1674.5V966.5H1675.5V966.5H1676.5V966.5H1677.5V966.5H1678.5V966.5H1679.5V966.5H1680.5V966.5H1681.5V966.5H1682.5V966.5H1683.5V966.5H1684.5V966.5H1685.5V966.5H1686.5V966.5H1687.5V966.5H1688.5V966.5H1689.5V966.5H1690.5V966.5H1691.5V966.5H1692.5V966.5H1693.5V966.5H1694.5V966.5H1695.5V966.5H1696.5V966.5H1697.5V966.5H1698.5V966.5H1699.5V966.5H1700.5V966.5H1701.5V965.5H1702.5V965.5H1703.5V965.5H1704.5V965.5H1705.5V965.5H1706.5V965.5H1707.5V965.5H1708.5V965.5H1709.5V965.5H1710.5V965.5H1711.5V965.5H1712.5V965.5H1713.5V965.5H1714.5V965.5H1715.5V965.5H1716.5V965.5H1717.5V965.5H1718.5V965.5H1719.5V965.5H1720.5V965.5H1721.5V965.5H1722.5V965.5H1723.5V965.5H1724.5V965.5H1725.5V965.5H1726.5V965.5H1727.5V965.5H1728.5V965.5H1729.5V965.5H1730.5V965.5H1731.5V965.5H1732.5V965.5H1733.5V965.5H1734.5V965.5H1735.5V965.5H1736.5V965.5H1737.5V965.5H1738.5V965.5H1739.5V965.5H1740.5V965.5H1741.5V965.5H1742.5V965.5H1743.5V965.5H1744.5V965.5H1745.5V965.5H1746.5V965.5H1747.5V965.5H1748.5V965.5H1749.5V965.5H1750.5V965.5V965.5H1751.5" fill="none" stroke="#76309a" stroke-width="1.3" stroke-linecap="square"/>
 <path d="M3.5 429.5V429.5H4.5V429.5H5.5V429.5H6.5V429.5H7.5V429.5H8.5V429.5H9.5V429.5H10.5V429.5H11.5V429.5H12.5V429.5H13.5V429.5H14.5V429.5H15.5V429.5H16.5V429.5H17.5V429.5H18.5V429.5H19.5V429.5H20.5V429.5H21.5V429.5H22.5V429.5H23.5V429.5H24.5V429.5H25.5V429.5H26.5V429.5H27.5V429.5H28.5V429.5H29.5V429.5H30.5V429.5H31.5V429.5H32.5V429.5H33.5V429.5H34.5V429.5H35.5V429.5H36.5V429.5H37.5V429.5H38.5V429.5H39.5V429.5H40.5V429.5H41.5V429.5H42.5V429.5H43.5V429.5H44.5V429.5H45.5V429.5H46.5V429.5H47.5V429.5H48.5V429.5H49.5V429.5V429.5H50.5V429.5H51.5V429.5H52.5V429.5H53.5V429.5H54.5V429.5H55.5V429.5H56.5V429.5H57.5V429.5H58.5V429.5H59.5V429.5H60.5V429.5H61.5V429.5H62.5V429.5H63.5V429.5H64.5V429.5H65.5V429.5H66.5V429.5H67.5V429.5H68.5V429.5H69.5V429.5H70.5V429.5H71.5V429.5H72.5V429.5H73.5V429.5H74.5V429.5H75.5V429.5H76.5V429.5H77.5V429.5H78.5V429.5H79.5V429.5H80.5V429.5H81.5V429.5H82.5V429.5H83.5V429.5H84.5V429.5H85.5V429.5H86.5V429.5H87.5V429.5H88.5V429.5H89.5V429.5H90.5V429.5H91.5V429.5H92.5V429.5H93.5V429.5H94.5V429.5H95.5V429.5H96.5V429.5H97.5V429.5H98.5V429.5H99.5V429.5V429.5H100.5V429.5H101.5V429.5H102.5V429.5H103.5V429.5H104.5V429.5H105.5V429.5H106.5V429.5H107.5V429.5H108.5V429.5H109.5V429.5H110.5V429.5H111.5V429.5H112.5V429.5H113.5V429.5H114.5V429.5H115.5V429.5H116.5V429.5H117.5V429.5H118.5V429.5H119.5V429.5H120.5V429.5H121.5V429.5H122.5V429.5H123.5V429.5H124.5V429.5H125.5V429.5H126.5V429.5H127.5V429.5H128.5V429.5H129.5V429.5H130.5V429.5H131.5V429.5H132.5V429.5H133.5V429.5H134.5V429.5H135.5V429.5H136.5V429.5H137.5V429.5H138.5V429.5H139.5V429.5H140.5V429.5H141.5V429.5H142.5V429.5H143.5V429.5H144.5V429.5H145.5V429.5H146.5V429.5H147.5V429.5H148.5V429.5H149.5V429.5V429.5H150.5V429.5H151.5V429.5H152.5V429.5H153.5V429.5H154.5V429.5H155.5V429.5H156.5V429.5H157.5V429.5H158.5V429.5H159.5V429.5H160.5V429.5H161.5V429.5H162.5V429.5H163.5V429.5H164.5V429.5H165.5V429.5H166.5V429.5H167.5V429.5H168.5V429.5H169.5V429.5H170.5V429.5H171.5V429.5H172.5V429.5H173.5V429.5H174.5V429.5H175.5V429.5H176.5V429.5H177.5V429.5H178.5V429.5H179.5V429.5H180.5V429.5H181.5V429.5H182.5V429.5H183.5V429.5H184.5V429.5H185.5V429.5H186.5V429.5H187.5V429.5H188.5V429.5H189.5V429.5H190.5V429.5H191.5V429.5H192.5V429.5H193.5V429.5H194.5V429.5H195.5V429.5H196.5V429.5H197.5V429.5H198.5V429.5H199.5V429.5H200.5V429.5H201.5V429.5V429.5H202.5V428.5H203.5V428.5H204.5V427.5H205.5V426.5H206.5V426.5H207.5V425.5H208.5V425.5H209.5V424.5H210.5V424.5H211.5V423.5H212.5V423.5H213.5V422.5H214.5V422.5V422.5H215.5V421.5H216.5V421.5H217.5V420.5H218.5V420.5H219.5V419.5H220.5V419.5H221.5V418.5H222.5V418.5H223.5V417.5H224.5V417.5H225.5V416.5H226.5V416.5H227.5V415.5H228.5V415.5H229.5V415.5V414.5H230.5V414.5H231.5V413.5H232.5V413.5H233.5V413.5H234.5V412.5H235.5V412.5H236.5V411.5H237.5V411.5H238.5V410.5H239.5V410.5V410.5H240.5V410.5H241.5V410.5H242.5V409.5H243.5V409.5H244.5V409.5H245.5V409.5H246.5V408.5H247.5V408.5H248.5V408.5H249.5V408.5H250.5V408.5H251.5V407.5V407.5H252.5V407.5H253.5V407.5H254.5V407.5H255.5V407.5H256.5V407.5H257.5V407.5H258.5V407.5H259.5V407.5H260.5V407.5H261.5V407.5H262.5V407.5H263.5V407.5H264.5V407.5H265.5V407.5H266.5V407.5H267.5V407.5H268.5V407.5H269.5V407.5H270.5V407.5H271.5V407.5H272.5V407.5H273.5V407.5H274.5V407.5V407.5H275.5V407.5H276.5V407.5H277.5V407.5H278.5V407.5H279.5V407.5H280.5V407.5H281.5V407.5H282.5V408.5H283.5V408.5H284.5V408.5H285.5V408.5H286.5V408.5H287.5V408.5H288.5V408.5H289.5V408.5H290.5V408.5H291.5V408.5H292.5V409.5H293.5V409.5H294.5V409.5H295.5V409.5H296.5V409.5H297.5V409.5V409.5H298.5V409.5H299.5V409.5H300.5V409.5H301.5V409.5H302.5V409.5H303.5V410.5H304.5V410.5H305.5V410.5H306.5V410.5H307.5V410.5H308.5V410.5H309.5V410.5H310.5V410.5H311.5V410.5H312.5V410.5H313.5V411.5H314.5V411.5H315.5V411.5H316.5V411.5H317.5V411.5H318.5V411.5H319.5V411.5H320.5V411.5H321.5V411.5H322.5V411.5H323.5V412.5H324.5V412.5H325.5V412.5V412.5H326.5V412.5H327.5V412.5H328.5V412.5H329.5V412.5H330.5V412.5H331.5V412.5H332.5V412.5H333.5V412.5H334.5V412.5H335.5V412.5H336.5V412.5H337.5V412.5H338.5V412.5H339.5V412.5H340.5V412.5H341.5V412.5H342.5V412.5H343.5V412.5H344.5V412.5H345.5V412.5H346.5V412.5H347.5V412.5H348.5V412.5V412.5H349.5V412.5H350.5V412.5H351.5V412.5H352.5V412.5H353.5V412.5H354.5V412.5H355.5V412.5H356.5V412.5H357.5V412.5H358.5V412.5H359.5V412.5H360.5V412.5H361.5V412.5H362.5V412.5H363.5V412.5H364.5V412.5H365.5V412.5H366.5V412.5H367.5V412.5H368.5V411.5H369.5V411.5H370.5V411.5H371.5V411.5H372.5V411.5H373.5V411.5H374.5V411.5H375.5V411.5H376.5V411.5H377.5V411.5H378.5V411.5H379.5V411.5H380.5V411.5H381.5V411.5H382.5V411.5H383.5V411.5H384.5V411.5H385.5V411.5H386.5V411.5H387.5V411.5H388.5V411.5H389.5V411.5V411.5H390.5V411.5H391.5V410.5H392.5V410.5H393.5V410.5H394.5V410.5H395.5V410.5H396.5V410.5H397.5V410.5H398.5V410.5H399.5V410.5H400.5V410.5H401.5V410.5H402.5V410.5H403.5V410.5H404.5V410.5H405.5V409.5H406.5V409.5H407.5V409.5H408.5V409.5H409.5V409.5H410.5V409.5H411.5V409.5H412.5V409.5V409.5H413.5V409.5H414.5V409.5H415.5V409.5H416.5V409.5H417.5V409.5H418.5V409.5H419.5V409.5H420.5V408.5H421.5V408.5H422.5V408.5H423.5V408.5H424.5V408.5V408.5H425.5V408.5H426.5V408.5H427.5V408.5H428.5V408.5H429.5V408.5H430.5V408.5H431.5V408.5H432.5V408.5H433.5V408.5H434.5V408.5H435.5V408.5H436.5V408.5H437.5V408.5H438.5V408.5H439.5V408.5H440.5V408.5H441.5V407.5H442.5V407.5H443.5V407.5H444.5V407.5H445.5V407.5H446.5V407.5H447.5V407.5H448.5V407.5H449.5V407.5H450.5V407.5H451.5V407.5H452.5V407.5H453.5V407.5H454.5V407.5H455.5V407.5H456.5V407.5H457.5V407.5H458.5V407.5H459.5V407.5H460.5V407.5H461.5V407.5H462.5V407.5V406.5H463.5V406.5H464.5V406.5H465.5V406.5H466.5V406.5H467.5V405.5H468.5V405.5H469.5V405.5H470.5V405.5H471.5V405.5H472.5V404.5H473.5V404.5H474.5V404.5V404.5H475.5V404.5H476.5V404.5H477.5V404.5H478.5V404.5H479.5V404.5H480.5V404.5H481.5V404.5H482.5V404.5H483.5V404.5H484.5V404.5H485.5V404.5H486.5V404.5H487.5V404.5H488.5V404.5H489.5V404.5H490.5V404.5H491.5V404.5H492.5V404.5H493.5V404.5H494.5V404.5H495.5V404.5H496.5V404.5H497.5V404.5H498.5V404.5H499.5V404.5H500.5V404.5H501.5V404.5H502.5V404.5H503.5V404.5H504.5V404.5H505.5V404.5H506.5V404.5H507.5V404.5H508.5V404.5H509.5V404.5H510.5V404.5H511.5V404.5H512.5V404.5H513.5V404.5H514.5V404.5H515.5V404.5H516.5V404.5H517.5V404.5H518.5V404.5H519.5V404.5H520.5V404.5H521.5V404.5H522.5V404.5H523.5V404.5H524.5V404.5H525.5V404.5H526.5V404.5H527.5V404.5H528.5V404.5H529.5V404.5H530.5V404.5H531.5V404.5H532.5V404.5H533.5V404.5H534.5V404.5H535.5V404.5H536.5V404.5H537.5V404.5H538.5V404.5H539.5V404.5H540.5V404.5H541.5V404.5H542.5V404.5H543.5V404.5H544.5V404.5H545.5V404.5H546.5V404.5H547.5V404.5H548.5V404.5H549.5V404.5H550.5V404.5H551.5V404.5H552.5V404.5H553.5V404.5H554.5V404.5H555.5V404.5H556.5V404.5H557.5V404.5H558.5V404.5H559.5V404.5H560.5V404.5H561.5V404.5H562.5V404.5H563.5V404.5H564.5V404.5H565.5V404.5H566.5V404.5H567.5V404.5H568.5V404.5H569.5V404.5H570.5V404.5H571.5V404.5H572.5V404.5H573.5V404.5H574.5V404.5H575.5V404.5H576.5V404.5H577.5V404.5H578.5V404.5H579.5V404.5H580.5V404.5H581.5V404.5H582.5V404.5H583.5V404.5H584.5V404.5H585.5V404.5H586.5V404.5H587.5V404.5H588.5V404.5H589.5V404.5H590.5V404.5H591.5V404.5H592.5V404.5H593.5V404.5H594.5V404.5H595.5V404.5H596.5V404.5H597.5V404.5H598.5V404.5H599.5V404.5V404.5H600.5V404.5H601.5V405.5H602.5V405.5V405.5H603.5V405.5H604.5V405.5H605.5V405.5H606.5V405.5H607.5V405.5H608.5V405.5H609.5V405.5H610.5V405.5H611.5V405.5H612.5V405.5H613.5V405.5H614.5V405.5H615.5V405.5H616.5V405.5H617.5V405.5H618.5V405.5H619.5V405.5H620.5V405.5H621.5V405.5H622.5V405.5H623.5V405.5H624.5V405.5H625.5V405.5H626.5V405.5H627.5V405.5H628.5V405.5H629.5V405.5H630.5V405.5H631.5V405.5H632.5V405.5H633.5V405.5H634.5V405.5H635.5V405.5H636.5V405.5H637.5V405.5H638.5V405.5H639.5V405.5H640.5V405.5H641.5V405.5H642.5V405.5H643.5V405.5H644.5V405.5H645.5V405.5H646.5V405.5H647.5V405.5H648.5V405.5H649.5V405.5H650.5V405.5H651.5V405.5H652.5V405.5H653.5V405.5H654.5V405.5V405.5H655.5V404.5H656.5V404.5H657.5V403.5H658.5V403.5V403.5H659.5V403.5H660.5V403.5H661.5V403.5H662.5V403.5H663.5V403.5H664.5V403.5H665.5V404.5H666.5V404.5H667.5V404.5V404.5H668.5V404.5H669.5V404.5H670.5V404.5H671.5V404.5H672.5V404.5H673.5V404.5H674.5V404.5H675.5V404.5H676.5V404.5H677.5V404.5H678.5V404.5H679.5V404.5H680.5V404.5H681.5V404.5H682.5V404.5H683.5V404.5H684.5V404.5H685.5V404.5H686.5V404.5H687.5V404.5H688.5V404.5H689.5V405.5H690.5V405.5H691.5V405.5H692.5V405.5H693.5V405.5H694.5V405.5H695.5V405.5H696.5V405.5H697.5V405.5H698.5V405.5H699.5V405.5H700.5V405.5H701.5V405.5H702.5V405.5H703.5V405.5H704.5V405.5V405.5H705.5V405.5H706.5V405.5H707.5V405.5H708.5V405.5H709.5V405.5H710.5V405.5H711.5V405.5H712.5V405.5H713.5V405.5H714.5V405.5H715.5V405.5H716.5V405.5H717.5V405.5H718.5V405.5H719.5V405.5H720.5V405.5H721.5V405.5H722.5V405.5H723.5V405.5H724.5V405.5H725.5V405.5H726.5V406.5H727.5V406.5H728.5V406.5H729.5V406.5H730.5V406.5H731.5V406.5H732.5V406.5H733.5V406.5H734.5V406.5H735.5V406.5H736.5V406.5H737.5V406.5V406.5H738.5V406.5H739.5V406.5H740.5V405.5H741.5V405.5H742.5V405.5H743.5V405.5H744.5V405.5H745.5V405.5H746.5V405.5H747.5V405.5H748.5V405.5H749.5V405.5H750.5V405.5H751.5V405.5H752.5V405.5H753.5V404.5H754.5V404.5H755.5V404.5H756.5V404.5H757.5V404.5H758.5V404.5H759.5V404.5V404.5H760.5V404.5H761.5V404.5H762.5V404.5H763.5V404.5H764.5V404.5H765.5V404.5H766.5V404.5H767.5V404.5H768.5V404.5H769.5V404.5H770.5V404.5H771.5V404.5H772.5V404.5H773.5V404.5H774.5V404.5H775.5V404.5H776.5V404.5H777.5V404.5H778.5V404.5H779.5V404.5H780.5V404.5H781.5V404.5H782.5V404.5H783.5V403.5H784.5V403.5H785.5V403.5H786.5V403.5H787.5V403.5H788.5V403.5H789.5V403.5H790.5V403.5H791.5V403.5H792.5V403.5H793.5V403.5H794.5V403.5H795.5V403.5H796.5V403.5H797.5V403.5H798.5V403.5H799.5V403.5H800.5V403.5H801.5V403.5H802.5V403.5H803.5V403.5H804.5V403.5H805.5V403.5H806.5V403.5H807.5V403.5H808.5V403.5H809.5V403.5H810.5V403.5H811.5V403.5H812.5V403.5H813.5V403.5H814.5V403.5H815.5V403.5H816.5V403.5H817.5V403.5V403.5H818.5V403.5H819.5V403.5H820.5V403.5H821.5V403.5H822.5V403.5H823.5V403.5H824.5V403.5H825.5V403.5H826.5V403.5H827.5V403.5H828.5V403.5H829.5V403.5H830.5V403.5H831.5V403.5H832.5V403.5H833.5V403.5H834.5V403.5H835.5V403.5H836.5V403.5H837.5V403.5H838.5V403.5H839.5V403.5H840.5V403.5H841.5V403.5H842.5V403.5H843.5V403.5H844.5V403.5H845.5V403.5H846.5V403.5H847.5V403.5H848.5V403.5H849.5V403.5H850.5V403.5H851.5V403.5H852.5V403.5H853.5V403.5H854.5V403.5H855.5V403.5H856.5V403.5H857.5V403.5H858.5V403.5H859.5V403.5H860.5V403.5H861.5V403.5H862.5V403.5H863.5V403.5H864.5V403.5H865.5V403.5H866.5V403.5H867.5V403.5H868.5V403.5H869.5V403.5H870.5V403.5H871.5V403.5H872.5V403.5H873.5V403.5H874.5V403.5H875.5V403.5H876.5V403.5H877.5V403.5H878.5V403.5H879.5V403.5V403.5H880.5V403.5H881.5V403.5H882.5V403.5H883.5V404.5H884.5V404.5H885.5V404.5H886.5V404.5H887.5V405.5H888.5V405.5H889.5V405.5V405.5H890.5V405.5H891.5V405.5H892.5V405.5H893.5V405.5H894.5V405.5H895.5V404.5H896.5V404.5H897.5V404.5H898.5V404.5H899.5V404.5V404.5H900.5V404.5H901.5V404.5H902.5V404.5H903.5V404.5H904.5V405.5H905.5V405.5H906.5V405.5H907.5V405.5H908.5V405.5H909.5V405.5V405.5H910.5V405.5H911.5V405.5H912.5V405.5H913.5V405.5H914.5V405.5H915.5V405.5H916.5V405.5H917.5V405.5H918.5V405.5H919.5V405.5H920.5V405.5H921.5V405.5H922.5V405.5H923.5V405.5H924.5V405.5H925.5V405.5H926.5V405.5H927.5V405.5H928.5V405.5H929.5V405.5H930.5V405.5H931.5V405.5H932.5V405.5H933.5V405.5H934.5V405.5H935.5V405.5H936.5V405.5H937.5V405.5H938.5V405.5H939.5V405.5H940.5V405.5H941.5V405.5H942.5V405.5H943.5V405.5H944.5V405.5V405.5H945.5V405.5H946.5V406.5H947.5V406.5V406.5H948.5V406.5H949.5V406.5H950.5V406.5H951.5V406.5H952.5V406.5H953.5V406.5H954.5V406.5H955.5V406.5H956.5V406.5H957.5V406.5H958.5V406.5H959.5V406.5H960.5V406.5H961.5V406.5H962.5V406.5H963.5V406.5H964.5V406.5H965.5V406.5H966.5V406.5H967.5V406.5H968.5V406.5H969.5V406.5H970.5V406.5H971.5V406.5H972.5V406.5H973.5V406.5H974.5V406.5H975.5V406.5H976.5V406.5H977.5V406.5H978.5V406.5H979.5V406.5H980.5V406.5H981.5V406.5H982.5V406.5H983.5V406.5H984.5V406.5H985.5V406.5H986.5V406.5H987.5V406.5H988.5V406.5H989.5V406.5V406.5H990.5V406.5H991.5V407.5H992.5V407.5V407.5H993.5V407.5H994.5V407.5H995.5V407.5H996.5V407.5H997.5V407.5H998.5V407.5H999.5V407.5H1000.5V407.5H1001.5V407.5H1002.5V407.5H1003.5V407.5H1004.5V407.5H1005.5V407.5H1006.5V407.5H1007.5V407.5H1008.5V407.5H1009.5V407.5H1010.5V408.5H1011.5V408.5H1012.5V408.5H1013.5V408.5H1014.5V408.5H1015.5V408.5H1016.5V408.5H1017.5V408.5H1018.5V408.5H1019.5V408.5V408.5H1020.5V408.5H1021.5V408.5H1022.5V408.5H1023.5V408.5H1024.5V408.5H1025.5V408.5H1026.5V408.5H1027.5V408.5H1028.5V408.5H1029.5V408.5H1030.5V408.5H1031.5V408.5H1032.5V408.5H1033.5V408.5H1034.5V408.5H1035.5V408.5H1036.5V408.5H1037.5V408.5H1038.5V408.5H1039.5V408.5H1040.5V408.5H1041.5V408.5H1042.5V408.5H1043.5V408.5H1044.5V408.5H1045.5V408.5H1046.5V408.5H1047.5V408.5H1048.5V408.5H1049.5V408.5H1050.5V408.5H1051.5V408.5H1052.5V408.5H1053.5V408.5H1054.5V408.5H1055.5V408.5H1056.5V408.5H1057.5V408.5H1058.5V408.5H1059.5V408.5H1060.5V408.5H1061.5V408.5H1062.5V408.5H1063.5V408.5H1064.5V408.5H1065.5V408.5H1066.5V408.5H1067.5V408.5H1068.5V408.5H1069.5V408.5H1070.5V408.5H1071.5V408.5H1072.5V408.5H1073.5V408.5H1074.5V408.5H1075.5V408.5H1076.5V408.5H1077.5V408.5H1078.5V408.5H1079.5V408.5V408.5H1080.5V408.5H1081.5V407.5H1082.5V407.5H1083.5V407.5H1084.5V407.5V407.5H1085.5V407.5H1086.5V407.5H1087.5V407.5H1088.5V407.5H1089.5V407.5H1090.5V407.5H1091.5V407.5H1092.5V407.5H1093.5V407.5H1094.5V407.5H1095.5V407.5H1096.5V407.5H1097.5V407.5H1098.5V407.5H1099.5V407.5H1100.5V407.5H1101.5V407.5H1102.5V407.5H1103.5V407.5H1104.5V407.5H1105.5V407.5H1106.5V407.5H1107.5V407.5H1108.5V407.5H1109.5V407.5H1110.5V407.5H1111.5V407.5H1112.5V407.5H1113.5V407.5H1114.5V407.5H1115.5V407.5H1116.5V407.5H1117.5V407.5H1118.5V407.5H1119.5V407.5H1120.5V407.5H1121.5V407.5H1122.5V407.5H1123.5V407.5H1124.5V407.5V407.5H1125.5V407.5H1126.5V406.5H1127.5V406.5V406.5H1128.5V406.5H1129.5V406.5H1130.5V406.5H1131.5V406.5H1132.5V406.5H1133.5V406.5H1134.5V406.5H1135.5V406.5H1136.5V406.5H1137.5V406.5H1138.5V406.5H1139.5V406.5H1140.5V406.5H1141.5V405.5H1142.5V405.5H1143.5V405.5H1144.5V405.5H1145.5V405.5H1146.5V405.5H1147.5V405.5H1148.5V405.5H1149.5V405.5H1150.5V405.5H1151.5V405.5H1152.5V405.5H1153.5V405.5H1154.5V405.5V405.5H1155.5V405.5H1156.5V405.5H1157.5V405.5H1158.5V405.5H1159.5V405.5H1160.5V405.5H1161.5V405.5H1162.5V405.5H1163.5V405.5H1164.5V405.5H1165.5V405.5H1166.5V405.5H1167.5V405.5H1168.5V405.5H1169.5V405.5H1170.5V405.5H1171.5V405.5H1172.5V405.5H1173.5V405.5H1174.5V405.5H1175.5V405.5H1176.5V405.5H1177.5V405.5H1178.5V405.5H1179.5V405.5H1180.5V405.5H1181.5V405.5H1182.5V405.5H1183.5V405.5H1184.5V405.5H1185.5V405.5H1186.5V405.5H1187.5V405.5V405.5H1188.5V405.5H1189.5V405.5H1190.5V405.5H1191.5V405.5H1192.5V406.5H1193.5V406.5H1194.5V406.5H1195.5V406.5H1196.5V406.5H1197.5V406.5H1198.5V406.5H1199.5V406.5H1200.5V406.5H1201.5V406.5H1202.5V407.5V407.5H1203.5V407.5H1204.5V407.5H1205.5V407.5H1206.5V407.5H1207.5V407.5H1208.5V408.5H1209.5V408.5V408.5H1210.5V408.5H1211.5V408.5H1212.5V408.5H1213.5V408.5H1214.5V408.5H1215.5V408.5H1216.5V408.5H1217.5V408.5H1218.5V408.5H1219.5V408.5H1220.5V408.5H1221.5V408.5H1222.5V408.5H1223.5V408.5H1224.5V408.5H1225.5V408.5H1226.5V408.5H1227.5V408.5H1228.5V408.5H1229.5V408.5H1230.5V408.5H1231.5V408.5H1232.5V408.5H1233.5V409.5H1234.5V409.5H1235.5V409.5H1236.5V409.5H1237.5V409.5H1238.5V409.5H1239.5V409.5H1240.5V409.5H1241.5V409.5V405.5H1242.5V403.5V403.5H1243.5V402.5H1244.5V401.5H1245.5V400.5H1246.5V400.5V400.5H1247.5V400.5H1248.5V400.5H1249.5V400.5V400.5H1250.5V401.5H1251.5V401.5H1252.5V402.5H1253.5V402.5H1254.5V403.5H1255.5V403.5H1256.5V404.5H1257.5V405.5H1258.5V405.5H1259.5V406.5V406.5H1260.5V406.5H1261.5V407.5H1262.5V408.5H1263.5V408.5H1264.5V409.5H1265.5V410.5H1266.5V410.5H1267.5V411.5H1268.5V412.5H1269.5V413.5V413.5H1270.5V413.5H1271.5V414.5H1272.5V414.5H1273.5V415.5H1274.5V415.5H1275.5V416.5H1276.5V417.5H1277.5V417.5H1278.5V418.5H1279.5V418.5V418.5H1280.5V419.5H1281.5V419.5H1282.5V419.5H1283.5V419.5H1284.5V420.5H1285.5V420.5H1286.5V420.5H1287.5V420.5H1288.5V421.5H1289.5V421.5H1290.5V421.5H1291.5V421.5H1292.5V422.5H1293.5V422.5H1294.5V422.5H1295.5V422.5H1296.5V423.5H1297.5V423.5H1298.5V423.5H1299.5V424.5V424.5H1300.5V424.5H1301.5V424.5H1302.5V424.5H1303.5V424.5H1304.5V424.5V424.5H1305.5V424.5H1306.5V424.5H1307.5V425.5H1308.5V425.5H1309.5V425.5H1310.5V425.5H1311.5V425.5H1312.5V425.5H1313.5V426.5H1314.5V426.5H1315.5V426.5H1316.5V426.5H1317.5V426.5H1318.5V426.5H1319.5V427.5V427.5H1320.5V427.5H1321.5V427.5H1322.5V427.5H1323.5V427.5H1324.5V427.5H1325.5V427.5H1326.5V427.5H1327.5V427.5H1328.5V427.5H1329.5V427.5V427.5H1330.5V427.5H1331.5V427.5H1332.5V427.5H1333.5V427.5H1334.5V427.5H1335.5V428.5H1336.5V428.5H1337.5V428.5H1338.5V428.5H1339.5V428.5H1340.5V428.5H1341.5V428.5H1342.5V428.5H1343.5V428.5H1344.5V428.5H1345.5V428.5H1346.5V428.5H1347.5V429.5H1348.5V429.5H1349.5V429.5V429.5H1350.5V429.5H1351.5V429.5H1352.5V429.5H1353.5V429.5H1354.5V429.5H1355.5V429.5H1356.5V429.5H1357.5V429.5H1358.5V429.5H1359.5V429.5H1360.5V429.5H1361.5V429.5H1362.5V429.5H1363.5V429.5H1364.5V429.5H1365.5V429.5H1366.5V429.5H1367.5V429.5H1368.5V429.5H1369.5V429.5H1370.5V429.5H1371.5V429.5H1372.5V429.5H1373.5V429.5H1374.5V429.5H1375.5V429.5H1376.5V429.5H1377.5V429.5H1378.5V429.5H1379.5V429.5H1380.5V429.5H1381.5V429.5H1382.5V429.5H1383.5V429.5H1384.5V429.5H1385.5V429.5H1386.5V429.5H1387.5V429.5H1388.5V429.5H1389.5V429.5H1390.5V429.5H1391.5V429.5H1392.5V429.5H1393.5V429.5H1394.5V429.5H1395.5V429.5H1396.5V429.5H1397.5V429.5H1398.5V429.5H1399.5V429.5H1400.5V429.5H1401.5V429.5H1402.5V429.5H1403.5V429.5H1404.5V429.5H1405.5V429.5H1406.5V429.5H1407.5V429.5H1408.5V429.5H1409.5V429.5H1410.5V429.5H1411.5V429.5H1412.5V429.5H1413.5V429.5H1414.5V429.5H1415.5V429.5H1416.5V429.5H1417.5V429.5H1418.5V429.5H1419.5V429.5H1420.5V429.5H1421.5V429.5H1422.5V429.5H1423.5V429.5H1424.5V429.5H1425.5V429.5H1426.5V429.5H1427.5V429.5H1428.5V429.5H1429.5V429.5V429.5H1430.5V429.5H1431.5V429.5H1432.5V429.5H1433.5V429.5H1434.5V429.5H1435.5V429.5H1436.5V429.5H1437.5V429.5H1438.5V429.5H1439.5V429.5H1440.5V429.5H1441.5V429.5H1442.5V429.5H1443.5V429.5H1444.5V429.5H1445.5V429.5H1446.5V429.5H1447.5V429.5H1448.5V429.5H1449.5V429.5H1450.5V429.5H1451.5V429.5H1452.5V429.5H1453.5V429.5H1454.5V429.5H1455.5V429.5H1456.5V429.5H1457.5V429.5H1458.5V429.5H1459.5V429.5H1460.5V429.5H1461.5V429.5H1462.5V429.5H1463.5V429.5H1464.5V429.5H1465.5V429.5H1466.5V429.5H1467.5V429.5H1468.5V429.5H1469.5V429.5H1470.5V429.5H1471.5V429.5H1472.5V429.5H1473.5V429.5H1474.5V429.5H1475.5V429.5H1476.5V429.5H1477.5V429.5H1478.5V429.5H1479.5V429.5H1480.5V429.5H1481.5V429.5H1482.5V429.5H1483.5V429.5H1484.5V429.5H1485.5V429.5H1486.5V429.5H1487.5V429.5H1488.5V429.5H1489.5V429.5H1490.5V429.5H1491.5V429.5H1492.5V429.5H1493.5V429.5H1494.5V429.5H1495.5V429.5H1496.5V429.5H1497.5V429.5H1498.5V429.5H1499.5V429.5H1500.5V429.5H1501.5V429.5H1502.5V429.5H1503.5V429.5H1504.5V429.5H1505.5V429.5H1506.5V429.5H1507.5V429.5H1508.5V429.5H1509.5V429.5H1510.5V429.5H1511.5V429.5H1512.5V429.5H1513.5V429.5H1514.5V429.5H1515.5V429.5H1516.5V429.5H1517.5V429.5H1518.5V429.5H1519.5V429.5H1520.5V429.5H1521.5V429.5H1522.5V429.5H1523.5V429.5H1524.5V429.5H1525.5V429.5H1526.5V429.5H1527.5V429.5H1528.5V429.5H1529.5V429.5H1530.5V429.5H1531.5V429.5H1532.5V429.5H1533.5V429.5H1534.5V429.5H1535.5V429.5H1536.5V429.5H1537.5V429.5H1538.5V429.5H1539.5V429.5H1540.5V429.5H1541.5V429.5H1542.5V429.5H1543.5V429.5H1544.5V429.5H1545.5V429.5H1546.5V429.5H1547.5V429.5H1548.5V429.5H1549.5V429.5H1550.5V429.5H1551.5V429.5H1552.5V429.5H1553.5V429.5H1554.5V429.5H1555.5V429.5H1556.5V429.5H1557.5V429.5H1558.5V429.5H1559.5V429.5H1560.5V429.5H1561.5V429.5H1562.5V429.5H1563.5V429.5H1564.5V429.5H1565.5V429.5H1566.5V429.5H1567.5V429.5H1568.5V429.5H1569.5V429.5H1570.5V429.5H1571.5V429.5H1572.5V429.5H1573.5V429.5H1574.5V429.5H1575.5V429.5H1576.5V429.5H1577.5V429.5H1578.5V429.5H1579.5V429.5H1580.5V429.5H1581.5V429.5H1582.5V429.5H1583.5V429.5H1584.5V429.5H1585.5V429.5H1586.5V429.5H1587.5V429.5H1588.5V429.5H1589.5V429.5H1590.5V429.5H1591.5V429.5H1592.5V429.5H1593.5V429.5H1594.5V429.5H1595.5V429.5H1596.5V429.5H1597.5V429.5H1598.5V429.5H1599.5V429.5H1600.5V429.5H1601.5V429.5H1602.5V429.5H1603.5V429.5H1604.5V429.5H1605.5V429.5H1606.5V429.5H1607.5V429.5H1608.5V429.5H1609.5V429.5H1610.5V429.5H1611.5V429.5H1612.5V429.5H1613.5V429.5H1614.5V429.5H1615.5V429.5H1616.5V429.5H1617.5V429.5H1618.5V429.5H1619.5V429.5H1620.5V429.5H1621.5V429.5H1622.5V429.5H1623.5V429.5H1624.5V429.5H1625.5V429.5H1626.5V429.5H1627.5V429.5H1628.5V429.5H1629.5V429.5H1630.5V429.5H1631.5V429.5H1632.5V429.5H1633.5V429.5H1634.5V429.5H1635.5V429.5H1636.5V429.5H1637.5V429.5H1638.5V429.5H1639.5V429.5H1640.5V429.5H1641.5V429.5H1642.5V429.5H1643.5V429.5H1644.5V429.5H1645.5V429.5H1646.5V429.5H1647.5V429.5H1648.5V429.5H1649.5V429.5H1650.5V429.5H1651.5V429.5H1652.5V429.5H1653.5V429.5H1654.5V429.5H1655.5V429.5H1656.5V429.5H1657.5V429.5H1658.5V429.5H1659.5V429.5H1660.5V429.5H1661.5V429.5H1662.5V429.5H1663.5V429.5H1664.5V429.5H1665.5V429.5H1666.5V429.5H1667.5V429.5H1668.5V429.5H1669.5V429.5H1670.5V429.5H1671.5V429.5H1672.5V429.5H1673.5V429.5H1674.5V429.5H1675.5V429.5H1676.5V429.5H1677.5V429.5H1678.5V429.5H1679.5V429.5H1680.5V429.5H1681.5V429.5H1682.5V429.5H1683.5V429.5H1684.5V429.5H1685.5V429.5H1686.5V429.5H1687.5V429.5H1688.5V429.5H1689.5V429.5H1690.5V429.5H1691.5V429.5H1692.5V429.5H1693.5V429.5H1694.5V429.5H1695.5V429.5H1696.5V429.5H1697.5V429.5H1698.5V429.5H1699.5V429.5H1700.5V429.5H1701.5V429.5H1702.5V429.5H1703.5V429.5H1704.5V429.5H1705.5V429.5H1706.5V429.5H1707.5V429.5H1708.5V429.5H1709.5V429.5H1710.5V429.5H1711.5V429.5H1712.5V429.5H1713.5V429.5H1714.5V429.5H1715.5V429.5H1716.5V429.5H1717.5V429.5H1718.5V429.5H1719.5V429.5H1720.5V429.5H1721.5V429.5H1722.5V429.5H1723.5V429.5H1724.5V429.5H1725.5V429.5H1726.5V429.5H1727.5V429.5H1728.5V429.5H1729.5V429.5H1730.5V429.5H1731.5V429.5H1732.5V429.5H1733.5V429.5H1734.5V429.5H1735.5V429.5H1736.5V429.5H1737.5V429.5H1738.5V429.5H1739.5V429.5H1740.5V429.5H1741.5V429.5H1742.5V429.5H1743.5V429.5H1744.5V429.5H1745.5V429.5H1746.5V429.5H1747.5V429.5H1748.5V429.5H1749.5V429.5H1750.5V430.5V430.5H1751.5" fill="none" stroke="#8cd03a" stroke-width="1.2" stroke-linecap="square"/>
 <path d="M3.5 265.5V265.5H4.5V265.5H5.5V265.5H6.5V265.5H7.5V265.5H8.5V265.5H9.5V265.5H10.5V265.5H11.5V265.5H12.5V265.5H13.5V265.5H14.5V265.5H15.5V265.5H16.5V265.5H17.5V265.5H18.5V265.5H19.5V265.5H20.5V265.5H21.5V265.5H22.5V265.5H23.5V265.5H24.5V265.5H25.5V265.5H26.5V265.5H27.5V265.5H28.5V265.5H29.5V265.5H30.5V265.5H31.5V265.5H32.5V265.5H33.5V265.5H34.5V265.5H35.5V265.5H36.5V265.5H37.5V265.5H38.5V265.5H39.5V265.5H40.5V265.5H41.5V265.5H42.5V265.5H43.5V265.5H44.5V265.5H45.5V265.5H46.5V265.5H47.5V265.5H48.5V265.5H49.5V265.5H50.5V265.5H51.5V265.5H52.5V265.5H53.5V265.5H54.5V265.5H55.5V265.5V259.5V259.5H56.5V271.5V265.5V265.5H57.5V264.5H58.5V264.5H59.5V264.5V264.5H60.5V264.5H61.5V265.5H62.5V265.5V265.5H63.5V265.5H64.5V264.5H65.5V264.5V264.5H66.5V264.5H67.5V264.5H68.5V265.5H69.5V265.5V265.5H70.5V265.5H71.5V265.5H72.5V264.5H73.5V264.5V264.5H74.5V265.5H75.5V265.5H76.5V265.5H77.5V265.5V265.5H78.5V265.5H79.5V265.5H80.5V265.5H81.5V265.5H82.5V265.5V267.5V258.5V257.5H83.5V257.5H84.5V257.5H85.5V256.5V256.5H86.5V255.5H87.5V254.5H88.5V253.5H89.5V252.5H90.5V252.5V252.5H91.5V251.5H92.5V250.5H93.5V249.5H94.5V249.5H95.5V248.5H96.5V247.5H97.5V247.5H98.5V246.5H99.5V245.5V245.5H100.5V245.5H101.5V244.5H102.5V243.5H103.5V243.5H104.5V242.5H105.5V242.5H106.5V241.5H107.5V241.5H108.5V240.5H109.5V240.5H110.5V239.5V239.5H111.5V239.5H112.5V238.5H113.5V238.5H114.5V237.5H115.5V237.5H116.5V237.5H117.5V236.5H118.5V236.5H119.5V235.5H120.5V235.5H121.5V235.5H122.5V234.5H123.5V234.5V234.5H124.5V234.5H125.5V233.5H126.5V233.5H127.5V233.5H128.5V232.5H129.5V232.5H130.5V232.5H131.5V232.5H132.5V231.5H133.5V231.5H134.5V231.5H135.5V230.5H136.5V230.5V230.5H137.5V230.5H138.5V230.5H139.5V229.5H140.5V229.5H141.5V229.5H142.5V229.5H143.5V228.5H144.5V228.5H145.5V228.5H146.5V227.5H147.5V227.5H148.5V227.5H149.5V227.5V227.5H150.5V227.5H151.5V226.5H152.5V226.5H153.5V226.5H154.5V226.5H155.5V226.5H156.5V226.5H157.5V225.5H158.5V225.5H159.5V225.5H160.5V225.5H161.5V225.5H162.5V225.5V225.5H163.5V224.5H164.5V224.5H165.5V224.5H166.5V224.5H167.5V224.5H168.5V224.5H169.5V224.5H170.5V223.5H171.5V223.5H172.5V223.5H173.5V223.5H174.5V223.5H175.5V223.5V223.5H176.5V223.5H177.5V222.5H178.5V222.5H179.5V222.5H180.5V222.5H181.5V222.5H182.5V222.5H183.5V222.5H184.5V222.5H185.5V222.5H186.5V222.5H187.5V221.5H188.5V221.5V221.5H189.5V221.5H190.5V221.5H191.5V221.5H192.5V221.5H193.5V221.5H194.5V221.5H195.5V221.5H196.5V221.5H197.5V221.5V221.5H198.5V222.5H199.5V223.5H200.5V224.5H201.5V226.5H202.5V227.5V227.5H203.5V227.5H204.5V228.5H205.5V229.5H206.5V229.5H207.5V230.5H208.5V230.5V230.5H209.5V231.5H210.5V231.5H211.5V231.5H212.5V231.5H213.5V232.5H214.5V232.5H215.5V232.5H216.5V232.5H217.5V233.5H218.5V233.5H219.5V233.5H220.5V233.5H221.5V234.5V234.5H222.5V234.5H223.5V234.5H224.5V235.5H225.5V235.5H226.5V235.5H227.5V235.5H228.5V236.5H229.5V236.5H230.5V236.5H231.5V237.5H232.5V237.5H233.5V237.5H234.5V237.5V237.5H235.5V238.5H236.5V238.5H237.5V238.5H238.5V239.5H239.5V239.5H240.5V239.5H241.5V239.5H242.5V240.5H243.5V240.5H244.5V240.5H245.5V240.5H246.5V241.5H247.5V241.5H248.5V241.5H249.5V241.5V241.5H250.5V241.5H251.5V241.5H252.5V241.5H253.5V242.5H254.5V242.5H255.5V242.5H256.5V242.5H257.5V242.5H258.5V242.5H259.5V242.5H260.5V242.5H261.5V242.5H262.5V242.5V242.5H263.5V242.5H264.5V242.5H265.5V242.5H266.5V242.5H267.5V242.5H268.5V242.5H269.5V242.5H270.5V242.5H271.5V242.5H272.5V242.5H273.5V242.5H274.5V242.5H275.5V243.5V243.5H276.5V243.5H277.5V243.5H278.5V243.5H279.5V243.5H280.5V243.5H281.5V243.5H282.5V243.5H283.5V243.5V243.5H284.5V242.5H285.5V242.5H286.5V241.5H287.5V240.5V241.5H288.5V241.5H289.5V239.5H290.5V239.5H291.5V240.5H292.5V239.5H293.5V239.5H294.5V238.5V238.5H295.5V238.5H296.5V238.5H297.5V238.5H298.5V238.5H299.5V237.5H300.5V238.5V238.5H301.5V239.5H302.5V241.5V241.5H303.5V240.5H304.5V238.5H305.5V238.5H306.5V236.5H307.5V236.5H308.5V235.5V234.5H309.5V235.5H310.5V238.5H311.5V237.5H312.5V238.5H313.5V240.5H314.5V241.5H315.5V241.5H316.5V242.5V242.5H317.5V241.5H318.5V240.5H319.5V239.5H320.5V239.5H321.5V238.5H322.5V237.5V238.5H323.5V238.5H324.5V236.5H325.5V236.5H326.5V235.5H327.5V235.5H328.5V234.5H329.5V235.5H330.5V235.5H331.5V233.5H332.5V234.5H333.5V233.5H334.5V233.5V233.5H335.5V235.5H336.5V236.5H337.5V236.5H338.5V237.5V237.5H339.5V237.5H340.5V236.5H341.5V237.5H342.5V235.5H343.5V236.5H344.5V236.5H345.5V234.5H346.5V235.5V236.5H347.5V236.5H348.5V237.5H349.5V237.5V228.5H350.5V223.5V225.5H351.5V230.5H352.5V235.5V236.5H353.5V235.5H354.5V236.5H355.5V237.5H356.5V237.5H357.5V236.5H358.5V237.5H359.5V237.5V237.5H360.5V237.5H361.5V236.5H362.5V237.5H363.5V236.5H364.5V236.5H365.5V234.5H366.5V236.5H367.5V234.5H368.5V234.5H369.5V234.5H370.5V234.5H371.5V233.5H372.5V234.5H373.5V233.5H374.5V232.5V232.5H375.5V233.5H376.5V233.5H377.5V234.5H378.5V235.5H379.5V237.5H380.5V237.5V236.5H381.5V232.5H382.5V230.5H383.5V230.5V233.5H384.5V234.5H385.5V237.5V237.5H386.5V236.5H387.5V237.5H388.5V237.5H389.5V236.5H390.5V235.5H391.5V234.5H392.5V235.5H393.5V233.5H394.5V234.5H395.5V233.5V234.5H396.5V232.5H397.5V232.5H398.5V231.5H399.5V230.5H400.5V229.5H401.5V228.5V228.5H402.5V230.5H403.5V230.5H404.5V233.5H405.5V233.5H406.5V235.5H407.5V237.5H408.5V237.5V237.5H409.5V237.5H410.5V236.5H411.5V236.5H412.5V236.5H413.5V235.5H414.5V234.5H415.5V235.5V234.5H416.5V233.5H417.5V232.5H418.5V233.5H419.5V232.5H420.5V230.5H421.5V230.5V230.5H422.5V230.5H423.5V230.5H424.5V231.5H425.5V232.5H426.5V233.5H427.5V233.5H428.5V234.5H429.5V235.5H430.5V235.5H431.5V235.5H432.5V235.5V235.5H433.5V234.5H434.5V234.5H435.5V233.5H436.5V232.5H437.5V232.5H438.5V232.5H439.5V230.5H440.5V231.5H441.5V230.5V230.5H442.5V231.5H443.5V230.5H444.5V231.5H445.5V231.5H446.5V232.5H447.5V232.5H448.5V234.5H449.5V234.5H450.5V234.5H451.5V234.5H452.5V235.5H453.5V235.5V237.5H454.5V240.5H455.5V241.5V240.5H456.5V240.5H457.5V239.5H458.5V237.5H459.5V237.5H460.5V235.5V236.5H461.5V234.5H462.5V233.5H463.5V231.5H464.5V231.5H465.5V230.5H466.5V230.5V230.5H467.5V231.5H468.5V232.5H469.5V233.5H470.5V233.5H471.5V234.5V224.5V224.5H472.5V236.5V236.5H473.5V237.5H474.5V236.5H475.5V237.5H476.5V237.5V237.5H477.5V236.5H478.5V236.5H479.5V234.5H480.5V234.5H481.5V234.5H482.5V234.5V234.5H483.5V234.5H484.5V236.5H485.5V237.5H486.5V236.5H487.5V238.5H488.5V239.5V237.5H489.5V235.5H490.5V234.5H491.5V233.5H492.5V231.5H493.5V231.5V230.5H494.5V229.5H495.5V230.5H496.5V229.5H497.5V230.5H498.5V229.5H499.5V229.5V228.5H500.5V231.5H501.5V230.5H502.5V231.5H503.5V232.5H504.5V233.5H505.5V234.5V230.5H506.5V230.5V230.5H507.5V229.5H508.5V229.5H509.5V230.5H510.5V229.5H511.5V230.5H512.5V230.5V229.5H513.5V229.5H514.5V229.5H515.5V228.5H516.5V226.5H517.5V226.5V227.5H518.5V228.5H519.5V229.5H520.5V229.5H521.5V231.5V231.5H522.5V231.5H523.5V231.5H524.5V231.5H525.5V231.5H526.5V230.5H527.5V231.5V231.5H528.5V228.5H529.5V228.5H530.5V227.5H531.5V227.5V228.5H532.5V228.5H533.5V230.5H534.5V231.5H535.5V231.5H536.5V232.5H537.5V233.5V232.5H538.5V232.5H539.5V233.5H540.5V231.5H541.5V232.5H542.5V231.5V232.5H543.5V232.5H544.5V232.5H545.5V234.5H546.5V234.5V234.5H547.5V233.5H548.5V232.5H549.5V233.5H550.5V231.5H551.5V231.5V231.5H552.5V231.5H553.5V231.5H554.5V232.5H555.5V231.5H556.5V231.5H557.5V232.5V232.5H558.5V231.5H559.5V228.5H560.5V228.5H561.5V226.5H562.5V226.5V228.5H563.5V228.5H564.5V228.5H565.5V230.5H566.5V230.5H567.5V233.5H568.5V233.5H569.5V235.5H570.5V235.5V234.5H571.5V234.5H572.5V234.5H573.5V233.5H574.5V232.5H575.5V232.5H576.5V231.5H577.5V231.5H578.5V231.5V230.5H579.5V230.5H580.5V230.5H581.5V230.5H582.5V230.5H583.5V230.5H584.5V230.5H585.5V229.5H586.5V229.5H587.5V230.5V229.5H588.5V230.5H589.5V230.5H590.5V230.5H591.5V229.5H592.5V230.5V231.5H593.5V231.5H594.5V232.5H595.5V233.5H596.5V234.5H597.5V234.5V234.5H598.5V235.5H599.5V234.5H600.5V234.5H601.5V234.5H602.5V233.5H603.5V233.5H604.5V234.5H605.5V233.5H606.5V234.5H607.5V233.5V234.5H608.5V233.5H609.5V232.5H610.5V232.5H611.5V232.5H612.5V230.5H613.5V230.5H614.5V229.5V230.5H615.5V231.5H616.5V231.5H617.5V232.5H618.5V234.5H619.5V235.5V235.5H620.5V233.5H621.5V233.5H622.5V233.5H623.5V233.5H624.5V231.5V232.5H625.5V230.5H626.5V230.5H627.5V230.5H628.5V230.5H629.5V228.5H630.5V228.5V227.5H631.5V230.5H632.5V229.5H633.5V230.5H634.5V231.5H635.5V231.5V232.5H636.5V231.5H637.5V232.5H638.5V234.5H639.5V233.5H640.5V234.5V234.5H641.5V233.5H642.5V232.5H643.5V233.5H644.5V231.5H645.5V231.5H646.5V231.5H647.5V230.5H648.5V229.5H649.5V230.5H650.5V230.5V230.5H651.5V231.5H652.5V230.5H653.5V231.5H654.5V231.5V235.5V234.5H655.5V223.5V225.5H656.5V229.5H657.5V233.5H658.5V233.5V234.5H659.5V234.5H660.5V236.5H661.5V235.5H662.5V237.5V237.5H663.5V237.5H664.5V237.5H665.5V237.5H666.5V237.5H667.5V236.5H668.5V237.5H669.5V237.5V236.5H670.5V236.5H671.5V235.5V235.5H672.5V234.5H673.5V234.5H674.5V234.5H675.5V235.5H676.5V234.5H677.5V235.5H678.5V235.5H679.5V233.5H680.5V234.5H681.5V233.5H682.5V234.5V233.5H683.5V235.5H684.5V234.5H685.5V236.5H686.5V235.5H687.5V236.5V235.5H688.5V236.5H689.5V235.5H690.5V236.5H691.5V235.5H692.5V235.5H693.5V237.5H694.5V236.5H695.5V235.5H696.5V235.5H697.5V237.5H698.5V236.5H699.5V236.5H700.5V235.5H701.5V236.5H702.5V235.5H703.5V235.5H704.5V236.5V235.5H705.5V235.5H706.5V233.5H707.5V233.5H708.5V233.5V232.5H709.5V234.5H710.5V234.5H711.5V234.5H712.5V234.5H713.5V235.5H714.5V234.5V234.5H715.5V234.5H716.5V234.5H717.5V234.5H718.5V233.5H719.5V233.5H720.5V232.5H721.5V233.5V233.5H722.5V234.5H723.5V236.5H724.5V237.5H725.5V238.5H726.5V238.5V237.5H727.5V238.5H728.5V238.5H729.5V237.5H730.5V236.5H731.5V236.5V236.5H732.5V235.5H733.5V235.5H734.5V235.5H735.5V236.5H736.5V236.5H737.5V237.5H738.5V235.5H739.5V236.5H740.5V236.5V236.5H741.5V235.5H742.5V236.5H743.5V236.5H744.5V237.5H745.5V236.5H746.5V238.5H747.5V237.5H748.5V238.5H749.5V237.5V238.5H750.5V238.5H751.5V237.5H752.5V238.5H753.5V236.5H754.5V237.5H755.5V236.5H756.5V237.5H757.5V237.5H758.5V236.5H759.5V236.5V238.5H760.5V241.5H761.5V244.5V243.5H762.5V243.5H763.5V243.5H764.5V244.5H765.5V243.5H766.5V243.5V240.5V240.5H767.5V240.5H768.5V240.5H769.5V242.5H770.5V242.5H771.5V241.5H772.5V242.5V241.5H773.5V241.5H774.5V240.5V241.5H775.5V241.5H776.5V241.5H777.5V242.5V243.5H778.5V241.5H779.5V241.5H780.5V242.5H781.5V241.5H782.5V240.5H783.5V241.5H784.5V242.5H785.5V241.5V241.5H786.5V241.5H787.5V241.5H788.5V242.5V241.5H789.5V242.5H790.5V240.5H791.5V240.5H792.5V239.5V238.5H793.5V239.5H794.5V238.5H795.5V239.5H796.5V239.5H797.5V240.5H798.5V240.5V239.5H799.5V239.5H800.5V238.5H801.5V237.5H802.5V238.5V239.5H803.5V237.5H804.5V238.5H805.5V238.5H806.5V238.5H807.5V238.5V238.5H808.5V239.5H809.5V239.5H810.5V241.5H811.5V241.5V241.5H812.5V240.5H813.5V240.5H814.5V238.5H815.5V237.5H816.5V238.5V238.5H817.5V238.5H818.5V239.5H819.5V238.5H820.5V239.5H821.5V240.5H822.5V240.5H823.5V239.5H824.5V240.5V238.5H825.5V238.5H826.5V236.5V235.5H827.5V235.5H828.5V235.5H829.5V235.5H830.5V236.5H831.5V235.5V236.5H832.5V236.5H833.5V236.5H834.5V236.5H835.5V238.5V237.5H836.5V237.5H837.5V237.5H838.5V237.5H839.5V236.5H840.5V236.5H841.5V237.5V238.5H842.5V237.5H843.5V238.5H844.5V239.5V238.5H845.5V238.5H846.5V238.5H847.5V238.5H848.5V238.5H849.5V239.5H850.5V238.5H851.5V239.5H852.5V238.5H853.5V238.5H854.5V238.5H855.5V237.5H856.5V238.5H857.5V237.5H858.5V238.5H859.5V237.5V237.5H860.5V238.5H861.5V237.5H862.5V239.5H863.5V238.5H864.5V238.5H865.5V239.5V238.5H866.5V238.5H867.5V237.5H868.5V238.5H869.5V237.5V237.5H870.5V236.5H871.5V238.5H872.5V237.5H873.5V236.5H874.5V237.5V236.5H875.5V237.5H876.5V239.5H877.5V241.5H878.5V241.5V242.5H879.5V241.5H880.5V239.5H881.5V240.5H882.5V239.5H883.5V239.5H884.5V238.5H885.5V238.5H886.5V238.5V239.5H887.5V239.5H888.5V238.5H889.5V239.5H890.5V239.5H891.5V240.5H892.5V240.5H893.5V241.5H894.5V241.5V241.5H895.5V240.5H896.5V241.5H897.5V242.5H898.5V241.5H899.5V241.5H900.5V241.5H901.5V242.5H902.5V242.5H903.5V241.5V241.5H904.5V242.5H905.5V241.5H906.5V239.5H907.5V240.5H908.5V239.5H909.5V238.5H910.5V239.5H911.5V238.5V237.5H912.5V239.5H913.5V239.5H914.5V241.5H915.5V240.5H916.5V240.5H917.5V241.5V241.5H918.5V241.5H919.5V241.5H920.5V241.5H921.5V241.5H922.5V240.5H923.5V240.5H924.5V240.5H925.5V241.5H926.5V240.5H927.5V240.5V241.5H928.5V240.5H929.5V240.5H930.5V240.5H931.5V241.5H932.5V241.5H933.5V240.5H934.5V241.5H935.5V241.5H936.5V242.5H937.5V242.5V243.5H938.5V242.5H939.5V244.5H940.5V244.5V243.5H941.5V243.5H942.5V244.5H943.5V243.5H944.5V243.5H945.5V242.5H946.5V241.5H947.5V241.5V241.5H948.5V242.5H949.5V242.5H950.5V243.5H951.5V244.5H952.5V244.5H953.5V245.5V245.5H954.5V245.5H955.5V245.5H956.5V245.5H957.5V245.5H958.5V246.5H959.5V245.5H960.5V246.5H961.5V245.5H962.5V245.5H963.5V245.5H964.5V245.5V245.5H965.5V245.5H966.5V245.5H967.5V246.5H968.5V246.5H969.5V245.5H970.5V245.5H971.5V246.5V245.5H972.5V246.5H973.5V246.5H974.5V246.5H975.5V246.5H976.5V245.5H977.5V247.5H978.5V245.5H979.5V246.5H980.5V245.5H981.5V246.5H982.5V246.5H983.5V246.5H984.5V246.5H985.5V246.5H986.5V246.5H987.5V246.5H988.5V246.5H989.5V245.5H990.5V245.5H991.5V246.5H992.5V245.5V245.5H993.5V247.5H994.5V246.5H995.5V246.5H996.5V245.5H997.5V246.5H998.5V246.5H999.5V247.5V247.5H1000.5V248.5H1001.5V248.5H1002.5V248.5H1003.5V248.5H1004.5V247.5H1005.5V249.5H1006.5V249.5V249.5H1007.5V249.5H1008.5V248.5H1009.5V249.5H1010.5V247.5H1011.5V247.5H1012.5V247.5H1013.5V247.5V247.5H1014.5V248.5H1015.5V247.5H1016.5V248.5H1017.5V248.5H1018.5V247.5H1019.5V247.5H1020.5V248.5H1021.5V249.5H1022.5V249.5H1023.5V249.5H1024.5V249.5H1025.5V249.5H1026.5V249.5H1027.5V249.5V250.5H1028.5V249.5H1029.5V249.5H1030.5V250.5H1031.5V250.5H1032.5V249.5H1033.5V248.5H1034.5V249.5H1035.5V250.5H1036.5V250.5H1037.5V249.5H1038.5V249.5H1039.5V250.5H1040.5V250.5H1041.5V250.5H1042.5V250.5H1043.5V249.5H1044.5V249.5H1045.5V250.5H1046.5V250.5H1047.5V249.5H1048.5V250.5H1049.5V250.5H1050.5V250.5H1051.5V249.5H1052.5V250.5H1053.5V250.5H1054.5V249.5V249.5H1055.5V247.5H1056.5V247.5V247.5H1057.5V246.5H1058.5V246.5H1059.5V246.5H1060.5V247.5H1061.5V246.5H1062.5V247.5H1063.5V247.5H1064.5V247.5H1065.5V247.5H1066.5V247.5H1067.5V247.5H1068.5V247.5H1069.5V246.5V246.5H1070.5V247.5H1071.5V245.5H1072.5V245.5H1073.5V244.5H1074.5V244.5H1075.5V245.5H1076.5V245.5H1077.5V245.5H1078.5V245.5H1079.5V243.5H1080.5V244.5H1081.5V244.5H1082.5V244.5H1083.5V244.5V243.5H1084.5V244.5H1085.5V243.5H1086.5V244.5H1087.5V244.5H1088.5V245.5H1089.5V244.5H1090.5V243.5H1091.5V244.5H1092.5V244.5H1093.5V243.5H1094.5V243.5H1095.5V243.5H1096.5V243.5H1097.5V244.5H1098.5V244.5H1099.5V243.5H1100.5V243.5H1101.5V243.5H1102.5V244.5H1103.5V244.5H1104.5V243.5V243.5H1105.5V243.5H1106.5V243.5H1107.5V244.5H1108.5V243.5H1109.5V242.5H1110.5V243.5H1111.5V243.5H1112.5V243.5H1113.5V242.5H1114.5V243.5H1115.5V242.5H1116.5V243.5H1117.5V243.5V244.5H1118.5V243.5H1119.5V243.5H1120.5V244.5H1121.5V242.5H1122.5V242.5H1123.5V243.5H1124.5V241.5H1125.5V243.5H1126.5V242.5V242.5H1127.5V241.5H1128.5V242.5H1129.5V242.5H1130.5V242.5H1131.5V242.5H1132.5V241.5H1133.5V242.5H1134.5V243.5H1135.5V242.5H1136.5V242.5H1137.5V241.5H1138.5V242.5H1139.5V243.5H1140.5V243.5H1141.5V242.5H1142.5V241.5H1143.5V242.5H1144.5V243.5H1145.5V242.5V242.5H1146.5V243.5H1147.5V244.5H1148.5V244.5H1149.5V244.5H1150.5V243.5H1151.5V245.5V243.5H1152.5V244.5H1153.5V243.5H1154.5V243.5H1155.5V242.5V243.5H1156.5V243.5H1157.5V242.5H1158.5V244.5H1159.5V244.5H1160.5V244.5H1161.5V243.5H1162.5V244.5H1163.5V244.5H1164.5V245.5H1165.5V245.5V245.5H1166.5V243.5H1167.5V242.5H1168.5V241.5H1169.5V241.5H1170.5V241.5V241.5H1171.5V243.5H1172.5V242.5H1173.5V243.5V242.5H1174.5V243.5H1175.5V241.5H1176.5V242.5H1177.5V242.5H1178.5V242.5H1179.5V240.5H1180.5V240.5H1181.5V241.5H1182.5V241.5H1183.5V240.5V240.5H1184.5V240.5H1185.5V241.5H1186.5V243.5H1187.5V243.5H1188.5V243.5V242.5H1189.5V243.5H1190.5V243.5H1191.5V243.5H1192.5V244.5H1193.5V243.5H1194.5V244.5H1195.5V243.5H1196.5V244.5H1197.5V245.5H1198.5V244.5H1199.5V243.5H1200.5V243.5H1201.5V245.5H1202.5V244.5H1203.5V244.5H1204.5V245.5V245.5H1205.5V245.5H1206.5V246.5H1207.5V244.5H1208.5V245.5H1209.5V244.5H1210.5V245.5H1211.5V245.5H1212.5V244.5H1213.5V245.5H1214.5V246.5H1215.5V245.5V244.5H1216.5V245.5H1217.5V244.5H1218.5V244.5H1219.5V244.5H1220.5V244.5H1221.5V242.5H1222.5V242.5H1223.5V241.5H1224.5V241.5V241.5H1225.5V242.5H1226.5V241.5H1227.5V242.5H1228.5V243.5H1229.5V244.5H1230.5V245.5H1231.5V245.5V244.5H1232.5V244.5H1233.5V244.5H1234.5V244.5H1235.5V244.5H1236.5V244.5H1237.5V242.5H1238.5V241.5H1239.5V243.5H1240.5V242.5V239.5H1241.5V236.5V218.5H1242.5V150.5V148.5H1243.5V138.5V137.5H1244.5V136.5V138.5H1245.5V141.5V143.5H1246.5V148.5H1247.5V149.5V152.5H1248.5V158.5H1249.5V163.5H1250.5V167.5V168.5H1251.5V173.5H1252.5V179.5H1253.5V185.5H1254.5V186.5V190.5H1255.5V194.5H1256.5V199.5H1257.5V203.5V204.5H1258.5V208.5H1259.5V212.5H1260.5V216.5H1261.5V220.5V220.5H1262.5V223.5H1263.5V225.5H1264.5V228.5H1265.5V231.5H1266.5V233.5H1267.5V235.5V236.5H1268.5V237.5H1269.5V238.5H1270.5V240.5H1271.5V241.5H1272.5V243.5H1273.5V244.5H1274.5V245.5V245.5H1275.5V246.5H1276.5V246.5H1277.5V247.5H1278.5V248.5H1279.5V249.5V249.5H1280.5V249.5H1281.5V250.5H1282.5V250.5H1283.5V251.5H1284.5V251.5V251.5H1285.5V251.5H1286.5V251.5H1287.5V251.5H1288.5V251.5V250.5H1289.5V250.5H1290.5V250.5H1291.5V249.5H1292.5V249.5V249.5H1293.5V249.5H1294.5V249.5H1295.5V249.5H1296.5V249.5H1297.5V249.5H1298.5V249.5H1299.5V249.5V249.5H1300.5V250.5H1301.5V250.5H1302.5V250.5H1303.5V250.5H1304.5V250.5H1305.5V250.5H1306.5V250.5H1307.5V250.5H1308.5V250.5H1309.5V250.5H1310.5V250.5H1311.5V250.5H1312.5V250.5H1313.5V250.5V250.5H1314.5V250.5H1315.5V251.5H1316.5V251.5H1317.5V251.5H1318.5V251.5H1319.5V251.5H1320.5V251.5H1321.5V251.5H1322.5V251.5H1323.5V251.5H1324.5V251.5H1325.5V251.5H1326.5V251.5H1327.5V251.5V251.5H1328.5V252.5H1329.5V252.5H1330.5V252.5H1331.5V252.5H1332.5V252.5H1333.5V252.5H1334.5V252.5H1335.5V252.5H1336.5V252.5H1337.5V252.5H1338.5V253.5H1339.5V253.5H1340.5V253.5H1341.5V253.5V253.5H1342.5V253.5H1343.5V253.5H1344.5V253.5H1345.5V253.5H1346.5V253.5H1347.5V253.5H1348.5V253.5H1349.5V253.5H1350.5V253.5H1351.5V253.5H1352.5V253.5H1353.5V253.5H1354.5V254.5V254.5H1355.5V254.5H1356.5V254.5H1357.5V254.5H1358.5V254.5H1359.5V254.5H1360.5V254.5H1361.5V254.5H1362.5V254.5H1363.5V254.5H1364.5V254.5H1365.5V254.5H1366.5V254.5H1367.5V254.5H1368.5V254.5V254.5H1369.5V253.5H1370.5V253.5H1371.5V252.5V252.5H1372.5V253.5H1373.5V254.5H1374.5V255.5V255.5H1375.5V255.5H1376.5V255.5H1377.5V255.5H1378.5V255.5H1379.5V255.5H1380.5V256.5H1381.5V256.5V256.5H1382.5V256.5H1383.5V256.5H1384.5V256.5H1385.5V256.5H1386.5V256.5H1387.5V256.5H1388.5V256.5H1389.5V256.5V256.5H1390.5V257.5H1391.5V258.5H1392.5V258.5H1393.5V258.5V258.5H1394.5V258.5H1395.5V258.5H1396.5V258.5H1397.5V258.5H1398.5V258.5H1399.5V258.5H1400.5V258.5H1401.5V258.5H1402.5V258.5H1403.5V258.5H1404.5V258.5V258.5H1405.5V258.5H1406.5V257.5H1407.5V256.5H1408.5V256.5H1409.5V255.5V255.5H1410.5V255.5H1411.5V255.5H1412.5V256.5H1413.5V256.5H1414.5V256.5H1415.5V257.5H1416.5V257.5H1417.5V257.5V257.5H1418.5V257.5H1419.5V257.5H1420.5V257.5H1421.5V257.5H1422.5V257.5H1423.5V257.5H1424.5V257.5H1425.5V257.5H1426.5V257.5H1427.5V257.5H1428.5V257.5H1429.5V257.5H1430.5V257.5H1431.5V257.5H1432.5V257.5H1433.5V257.5H1434.5V257.5H1435.5V257.5H1436.5V257.5H1437.5V257.5H1438.5V257.5V257.5H1439.5V257.5H1440.5V257.5H1441.5V257.5H1442.5V257.5H1443.5V257.5H1444.5V257.5H1445.5V257.5H1446.5V257.5H1447.5V257.5H1448.5V257.5H1449.5V257.5H1450.5V257.5H1451.5V257.5H1452.5V257.5H1453.5V257.5H1454.5V257.5H1455.5V257.5H1456.5V257.5H1457.5V257.5H1458.5V257.5H1459.5V257.5H1460.5V257.5H1461.5V258.5H1462.5V258.5H1463.5V258.5H1464.5V258.5H1465.5V258.5H1466.5V258.5H1467.5V258.5H1468.5V258.5H1469.5V258.5H1470.5V258.5H1471.5V258.5H1472.5V258.5H1473.5V258.5H1474.5V258.5H1475.5V258.5H1476.5V258.5H1477.5V258.5H1478.5V258.5H1479.5V258.5V258.5H1480.5V258.5H1481.5V258.5H1482.5V258.5H1483.5V258.5H1484.5V258.5H1485.5V258.5H1486.5V258.5H1487.5V258.5H1488.5V258.5H1489.5V258.5H1490.5V258.5H1491.5V258.5H1492.5V258.5H1493.5V258.5H1494.5V258.5H1495.5V258.5H1496.5V258.5H1497.5V258.5H1498.5V258.5H1499.5V258.5H1500.5V258.5H1501.5V258.5H1502.5V258.5H1503.5V258.5H1504.5V258.5H1505.5V258.5H1506.5V258.5H1507.5V258.5H1508.5V258.5H1509.5V258.5H1510.5V258.5H1511.5V258.5H1512.5V258.5H1513.5V258.5H1514.5V258.5H1515.5V258.5H1516.5V258.5H1517.5V258.5H1518.5V258.5H1519.5V258.5H1520.5V258.5H1521.5V258.5H1522.5V258.5H1523.5V258.5H1524.5V258.5H1525.5V258.5H1526.5V258.5H1527.5V258.5H1528.5V258.5H1529.5V258.5H1530.5V258.5H1531.5V258.5H1532.5V258.5V258.5H1533.5V259.5H1534.5V259.5H1535.5V260.5H1536.5V260.5H1537.5V261.5H1538.5V261.5V261.5H1539.5V261.5H1540.5V260.5H1541.5V260.5H1542.5V260.5H1543.5V260.5H1544.5V260.5V260.5H1545.5V260.5H1546.5V260.5H1547.5V260.5H1548.5V260.5H1549.5V260.5H1550.5V260.5H1551.5V260.5H1552.5V260.5H1553.5V260.5H1554.5V260.5H1555.5V260.5H1556.5V260.5H1557.5V260.5H1558.5V260.5H1559.5V260.5H1560.5V260.5H1561.5V260.5H1562.5V260.5H1563.5V260.5H1564.5V260.5H1565.5V260.5H1566.5V260.5H1567.5V260.5H1568.5V260.5H1569.5V260.5H1570.5V260.5H1571.5V260.5H1572.5V260.5H1573.5V260.5H1574.5V260.5H1575.5V260.5H1576.5V260.5H1577.5V260.5H1578.5V260.5H1579.5V260.5H1580.5V260.5H1581.5V260.5H1582.5V260.5H1583.5V260.5H1584.5V260.5H1585.5V260.5H1586.5V260.5H1587.5V260.5H1588.5V260.5H1589.5V260.5H1590.5V260.5H1591.5V260.5H1592.5V260.5H1593.5V260.5V260.5H1594.5V260.5H1595.5V261.5H1596.5V262.5H1597.5V262.5H1598.5V263.5H1599.5V263.5V263.5H1600.5V263.5H1601.5V263.5H1602.5V264.5H1603.5V264.5V264.5H1604.5V264.5H1605.5V264.5H1606.5V264.5H1607.5V264.5H1608.5V264.5H1609.5V264.5H1610.5V264.5H1611.5V264.5H1612.5V264.5H1613.5V264.5H1614.5V264.5H1615.5V264.5H1616.5V264.5H1617.5V264.5V264.5H1618.5V263.5H1619.5V263.5V263.5H1620.5V263.5H1621.5V263.5H1622.5V263.5H1623.5V262.5H1624.5V262.5H1625.5V262.5H1626.5V262.5H1627.5V262.5H1628.5V262.5H1629.5V262.5H1630.5V262.5V262.5H1631.5V262.5H1632.5V262.5H1633.5V261.5H1634.5V261.5H1635.5V261.5H1636.5V261.5H1637.5V261.5H1638.5V261.5V261.5H1639.5V261.5H1640.5V261.5H1641.5V261.5H1642.5V261.5H1643.5V261.5H1644.5V261.5H1645.5V261.5H1646.5V261.5H1647.5V261.5H1648.5V261.5H1649.5V261.5H1650.5V261.5H1651.5V261.5H1652.5V261.5H1653.5V261.5H1654.5V261.5H1655.5V261.5H1656.5V261.5H1657.5V261.5H1658.5V261.5H1659.5V261.5H1660.5V261.5H1661.5V261.5H1662.5V261.5H1663.5V261.5H1664.5V261.5H1665.5V261.5H1666.5V261.5H1667.5V261.5H1668.5V261.5H1669.5V261.5H1670.5V261.5H1671.5V261.5H1672.5V261.5H1673.5V261.5V261.5H1674.5V261.5H1675.5V262.5H1676.5V263.5H1677.5V263.5V263.5H1678.5V263.5H1679.5V262.5H1680.5V262.5H1681.5V262.5H1682.5V261.5H1683.5V261.5H1684.5V261.5V261.5H1685.5V261.5H1686.5V261.5H1687.5V261.5H1688.5V261.5H1689.5V261.5H1690.5V261.5H1691.5V261.5H1692.5V261.5H1693.5V261.5H1694.5V261.5H1695.5V261.5H1696.5V261.5H1697.5V261.5H1698.5V261.5H1699.5V261.5H1700.5V261.5H1701.5V261.5H1702.5V261.5H1703.5V261.5H1704.5V261.5H1705.5V261.5H1706.5V261.5H1707.5V261.5H1708.5V261.5H1709.5V261.5H1710.5V261.5H1711.5V261.5H1712.5V261.5H1713.5V261.5H1714.5V261.5H1715.5V261.5H1716.5V261.5H1717.5V261.5H1718.5V261.5H1719.5V261.5H1720.5V261.5H1721.5V261.5H1722.5V261.5H1723.5V261.5H1724.5V261.5H1725.5V261.5H1726.5V261.5H1727.5V261.5H1728.5V261.5H1729.5V261.5H1730.5V261.5H1731.5V261.5H1732.5V261.5H1733.5V261.5H1734.5V261.5H1735.5V261.5H1736.5V261.5H1737.5V261.5H1738.5V261.5H1739.5V261.5H1740.5V261.5H1741.5V261.5H1742.5V261.5H1743.5V261.5H1744.5V261.5H1745.5V261.5H1746.5V261.5H1747.5V261.5H1748.5V261.5H1749.5V261.5H1750.5V261.5V261.5H1751.5" fill="none" stroke="#f2ee00" stroke-width="1.2" stroke-linecap="square"/>
 </g>
 <!-- trigger marker -->
 <path d="M45 58H65L55 67Z" fill="#f7931e"/>
 <path d="M45.5 68.5H64.5V88.5H59L55 95L51 88.5H45.5Z" fill="#000" stroke="#f7931e" stroke-width="2.2"/>
 <text x="55" y="84" font-size="15" fill="#f7931e" stroke="#f7931e" stroke-width="0.7" text-anchor="middle" font-family="Liberation Sans">T</text>
 <!-- channel badges -->
 <path d="M9 161.5H78L84 174.5L78 187.5H9Q6.5 187.5 6.5 185V164Q6.5 161.5 9 161.5Z" fill="#1e1b08" stroke="#eee22a" stroke-width="1.6"/>
 <line x1="33" y1="161.5" x2="33" y2="187.5" stroke="#eee22a" stroke-width="1.6"/>
 <path d="M9 396H78L83.5 408.5L78 421H9Q6.5 421 6.5 418.5V398.5Q6.5 396 9 396Z" fill="#141a08" stroke="#8fd035" stroke-width="1.6"/>
 <line x1="33" y1="396" x2="33" y2="421" stroke="#8fd035" stroke-width="1.6"/>
 <path d="M9.5 722.5H30.5L42 735L30.5 747.3H9.5Q6.5 747.3 6.5 744.3V725.5Q6.5 722.5 9.5 722.5Z" fill="#1c1208" stroke="#e8892a" stroke-width="1.4"/>
 <line x1="3" y1="734.8" x2="6" y2="734.8" stroke="#e8892a" stroke-width="1"/>
 <line x1="42.5" y1="734.5" x2="55" y2="734.5" stroke="#e8892a" stroke-width="1.2"/>
 <path d="M10 948H30L42.5 961L30 974H10Q6 974 6 970V952Q6 948 10 948Z" fill="#722f8e"/>
 
 <!-- side handle -->
 <circle cx="1762" cy="504" r="2" fill="#c8c8c8"/>
 <circle cx="1762" cy="512.5" r="2" fill="#c8c8c8"/>
 <circle cx="1762" cy="521" r="2" fill="#c8c8c8"/>
</svg>

<div class="abs" style="left:11px;top:166px;font-size:12.5px;color:#eee22a;line-height:16px;letter-spacing:-0.3px">C 1</div>
<div class="abs" style="left:45px;top:166px;font-size:13px;color:#eee22a;line-height:16px">20 V</div>
<div class="abs" style="left:101px;top:162px;font-size:19.5px;color:#eee22a;line-height:22px">U_loop,coil</div>
<div class="abs" style="left:11px;top:400px;font-size:12.5px;color:#8fd035;line-height:16px;letter-spacing:-0.3px">C 4</div>
<div class="abs" style="left:35px;top:400px;font-size:12.3px;color:#8fd035;line-height:16px;letter-spacing:-0.2px">200 mV</div>
<div class="abs" style="left:101px;top:396px;font-size:19.5px;color:#8fd035;line-height:22px">U_Photod</div>
<div class="abs" style="left:13.5px;top:726px;font-size:12.5px;color:#e8892a;line-height:16px">M 1</div>
<div class="abs" style="left:53px;top:723px;font-size:18px;color:#e8892a;line-height:22px">B_t</div>
<div class="abs" style="left:13px;top:953px;font-size:12.5px;color:#fff;line-height:16px">M 2</div>
<div class="abs" style="left:54px;top:950px;font-size:18px;color:#7a3597;line-height:22px">I_p</div>

<div class="tl" style="left:15.5px">0 s</div>
<div class="tl" style="left:190.4px">4 ms</div>
<div class="tl" style="left:365.3px">8 ms</div>
<div class="tl" style="left:540.2px">12 ms</div>
<div class="tl" style="left:715.1px">16 ms</div>
<div class="tl" style="left:889.9px">20 ms</div>
<div class="tl" style="left:1064.8px">24 ms</div>
<div class="tl" style="left:1239.7px">28 ms</div>
<div class="tl" style="left:1414.6px">32 ms</div>
<div class="tl" style="left:1589.5px">36 ms</div>
<svg width="1920" height="1080" viewBox="0 0 1920 1080" style="pointer-events:none">
 <path d="M1710 65H1741Q1744 65 1744 68V98Z" fill="#4d4d4d"/>
 <circle cx="1737" cy="71.2" r="4.3" fill="none" stroke="#a0a0a0" stroke-width="1.5"/>
 <line x1="1734" y1="74.6" x2="1728.2" y2="80.2" stroke="#a0a0a0" stroke-width="2.4" stroke-linecap="round"/>
</svg>

<div id="rpanel"></div>
<div class="abs" style="left:1802px;top:30px;font-size:15px;font-weight:bold;color:#e6e6e6;line-height:18px;letter-spacing:1.05px">Add New...</div>
<div class="btn" style="left:1778px;top:54px">Cursors</div>
<div class="btn" style="left:1850px;top:54px">Callout</div>
<div class="btn" style="left:1778px;top:100px">Measure</div>
<div class="btn" style="left:1850px;top:100px">Search</div>
<div class="btn" style="left:1778px;top:146px">Results<br>Table</div>
<div class="btn" style="left:1850px;top:146px">Plot</div>
<div class="sep" style="left:1773px;top:189px;width:143px"></div>
<div class="btn" style="left:1778px;top:196px"><svg style="position:absolute;left:0;top:0" width="63" height="37" viewBox="0 0 63 37"><rect x="18.5" y="5" width="22.5" height="20" fill="none" stroke="#b0b0b0" stroke-width="2" stroke-dasharray="3 2.2"/><circle cx="31.5" cy="13.5" r="4.6" fill="none" stroke="#c4c4c4" stroke-width="2"/><line x1="28" y1="17" x2="23.5" y2="20.8" stroke="#c4c4c4" stroke-width="2.6" stroke-linecap="round"/><path d="M36 19.5L44.5 26.5L40.8 27L42.8 30.5L41 31.5L39 28L36.5 30.5Z" fill="#c4c4c4"/></svg></div>
<div class="btn" style="left:1850px;top:196px">More...</div>
<div class="sep" style="left:1773px;top:241px;width:143px"></div>

<!-- bottom bar -->
<div class="chb" style="left:3px"><div class="h" style="background:#4d4720;color:#eeee30">Ch 1</div><div class="hl"></div><div class="b">5 V/div</div><div class="b">1 MΩ</div><div class="b">200 kHz</div><div class="bw">B<sub style="font-size:9px">w</sub></div></div>
<div class="chb" style="left:98px;background:#8a8a8a"><div class="h" style="background:#23807f;color:#161616">Ch 2</div><div class="hl" style="background:#777"></div><div class="b">250 mV/div</div><div class="b">1 MΩ</div><div class="b">200 kHz</div><div class="bw">B<sub style="font-size:9px">w</sub></div></div>
<div class="chb" style="left:193px;background:#8a8a8a"><div class="h" style="background:#8c3845;color:#c6b1b4">Ch 3</div><div class="hl" style="background:#777"></div><div class="b" style="color:#262626">450 mV/div</div><div class="b" style="color:#262626">1 MΩ</div><div class="b" style="color:#262626">200 kHz</div><div class="bw">B<sub style="font-size:9px">w</sub></div></div>
<div class="chb" style="left:288px"><div class="h" style="background:#33421f;color:#90d040">Ch 4</div><div class="hl"></div><div class="b">200 mV/div</div><div class="b">1 MΩ</div><div class="b">200 kHz</div><div class="bw">B<sub style="font-size:9px">w</sub></div></div>
<div class="chb" style="left:383px"><div class="h" style="background:#4a321d;color:#f39a2e">Math 1</div><div class="hl"></div><div class="b">73.8 mT/div</div><div class="b">Intg(Ch2)…</div></div>
<div class="chb" style="left:478px"><div class="h" style="background:#6c2d8c;color:#fff">Math 2</div><div class="hl"></div><div class="b">666.89 A/div</div><div class="b">-Intg(Ch3…</div></div>

<div class="sbtn" style="left:1023px"><div class="bar" style="background:#f7931e"></div><div style="position:absolute;left:0;right:0;top:32px;font-size:19px;color:#eee">5</div></div>
<div class="sbtn" style="left:1068px"><div class="bar" style="background:#2727d0"></div><div style="position:absolute;left:0;right:0;top:32px;font-size:19px;color:#eee">6</div></div>
<div class="vsep" style="left:1118px"></div>
<div class="sbtn" style="left:1129px"><div class="bar" style="background:#b3222a"></div><div style="position:absolute;left:0;right:0;top:19px;font-size:15px;line-height:16px;color:#eee">Add<br>New<br>Math</div></div>
<div class="sbtn" style="left:1174px"><div class="bar" style="background:#c5c9d8"></div><div style="position:absolute;left:0;right:0;top:19px;font-size:15px;line-height:16px;color:#eee">Add<br>New<br>Ref</div></div>
<div class="sbtn" style="left:1219px"><div class="bar" style="background:#c04cf0"></div><div style="position:absolute;left:0;right:0;top:19px;font-size:15px;line-height:16px;color:#eee">Add<br>New<br>Bus</div></div>
<div class="vsep" style="left:1269px"></div>

<div class="ib" style="left:1281px;width:198px"><div class="h">Horizontal</div><div class="hl"></div>
 <div class="r" style="left:4px;top:19px">4 ms/div</div><div class="r" style="left:110px;top:19px">40 ms</div>
 <div class="r" style="left:4px;top:38px">SR: 1 MS/s</div><div class="r" style="left:110px;top:38px">1 µs/pt</div>
 <div class="r" style="left:4px;top:57px">RL: 40 kpts</div><div class="r" style="left:124px;top:57px">3%</div>
 <svg style="left:110px;top:58px" width="10" height="14" viewBox="0 0 10 14"><path d="M1 1H9V10H6.5L5 13L3.5 10H1Z" fill="#111" stroke="#f7931e" stroke-width="1.5"/><text x="5" y="8.5" font-size="7" font-weight="bold" fill="#fff" text-anchor="middle" font-family="Liberation Sans">T</text></svg>
</div>
<div class="ib" style="left:1486px;width:158px"><div class="h">Trigger</div><div class="hl"></div>
 <div style="position:absolute;left:4px;top:21px;width:30px;height:15px;background:#2222c8;border:1px solid #111;border-radius:5px;color:#fff;font-size:14px;line-height:13px;text-align:center">6</div>
 <svg style="left:44px;top:20px" width="18" height="16" viewBox="0 0 18 16"><path d="M0 12.9H5L12.5 3.2H16" fill="none" stroke="#2c2c7a" stroke-width="1.2"/></svg>
 <div class="r" style="left:69px;top:19px">3 V</div>
</div>
<div class="ib" style="left:1651px;width:148px"><div class="h">Acquisition</div><div class="hl"></div>
 <div class="r" style="left:4px;top:19px">Manual,</div><div class="r" style="left:85px;top:19px">Analyze</div>
 <div class="r" style="left:4px;top:38px">High Res: 16 bits</div>
 <div class="r" style="left:4px;top:57px">Single: 0 /1</div>
</div>
<div class="vsep" style="left:1811px"></div>
<div class="abs" style="left:1822px;top:999px;width:90px;height:36px;background:#ff1e26;border:1px solid #7a3030;border-radius:7px;color:#fff;font-weight:bold;font-size:14px;text-align:center;line-height:33px">Preview</div>
<div class="abs" style="left:1822px;top:1040px;width:90px;height:39px;background:#c9c9c9;border-radius:6px;color:#111;font-size:15px;text-align:center;line-height:17px;padding-top:1px">16 Apr 2025<br>5:22:18 PM</div>
</div></body></html>
